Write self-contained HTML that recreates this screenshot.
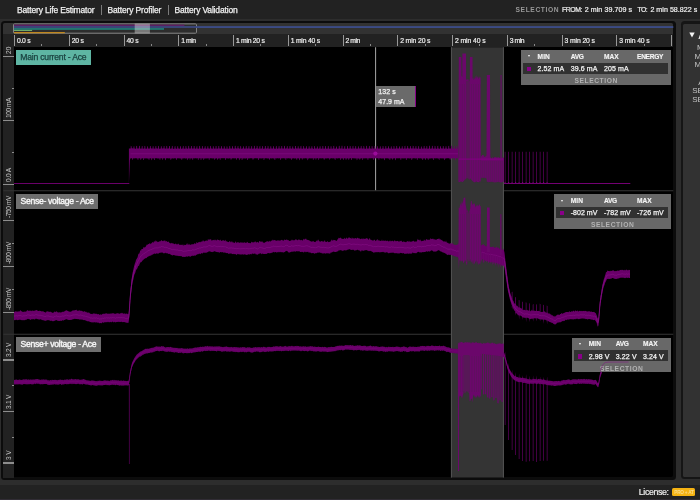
<!DOCTYPE html>
<html><head><meta charset="utf-8"><title>Battery</title>
<style>
*{margin:0;padding:0;box-sizing:border-box}
html,body{width:700px;height:500px;overflow:hidden;background:#2d2d2d;font-family:"Liberation Sans",sans-serif;color:#eee}
body{position:relative}
div{position:absolute}
#all{left:0;top:0;width:700px;height:500px;will-change:transform;opacity:0.9999}
.top{left:0;top:0;width:700px;height:19px;background:#232323}
.tab{top:4.6px;font-size:8.5px;color:#f2f2f2;white-space:nowrap;-webkit-text-stroke:0.25px #f2f2f2}
.sep{top:5px;width:1.3px;height:10px;background:#7c7c7c}
.selt{top:5px;line-height:8px;font-size:7.6px;white-space:nowrap;color:#f0f0f0;-webkit-text-stroke:0.2px}
.panel{left:1px;top:20.9px;width:674.9px;height:458.8px;background:#0d0d0d;border-radius:3.5px}
.ov{left:3.2px;top:23.3px;width:670.1px;height:10.7px;background:#333;border-radius:1.5px 1.5px 0 0}
.ax{left:3.2px;top:34px;width:670.1px;height:13.3px;background:#232323}
.ya{left:3.2px;top:47px;width:10.8px;height:430.5px;background:#232323}
.plot{left:14px;top:47.3px;width:659.3px;height:430.2px;background:#000;overflow:hidden;border-radius:0 0 2px 0}
.tk{top:35px;width:1px;height:11px;background:#999}
.tm{top:44.3px;width:1px;height:1.7px;background:#8a8a8a}
.tl{top:37.2px;font-size:6.8px;color:#eee;white-space:nowrap;-webkit-text-stroke:0.2px #eee}
.yt{height:1.1px;background:#8e8e8e}
.yl{left:4px;width:8px;height:0;font-size:6.6px;color:#c8c8c8;white-space:nowrap;transform-origin:0 0;transform:rotate(-90deg) translate(0px,1.1px);line-height:7px}
.right{left:681px;top:21.4px;width:30px;height:458px;background:#161616;border-radius:3.5px}
.right2{left:683.1px;top:24.2px;width:30px;height:453px;background:#333;border-radius:1.5px}
.bot{left:0;top:485px;width:700px;height:15px;background:#232323}
.lbl{-webkit-text-stroke:0.4px;height:14.6px;font-size:8.6px;line-height:15.9px;padding-left:4.4px;white-space:nowrap}
.sb{height:34.8px;background:rgba(109,109,109,0.96)}
.sh{top:2.7px;font-size:6.6px;font-weight:bold;color:#f4f4f4;white-space:nowrap;-webkit-text-stroke:0.15px}
.sr{left:2.3px;right:2.6px;top:12.9px;height:11.1px;background:#323232}
.sv{top:15.1px;font-size:7px;color:#f4f4f4;white-space:nowrap;-webkit-text-stroke:0.25px #f4f4f4}
.sq{top:16.9px;width:4.2px;height:4.2px;background:#8a008a}
.ss{top:27px;font-size:6.7px;font-weight:bold;color:#b4b4b4;white-space:nowrap}
.car{top:5.4px;width:0;height:0;border-left:1.9px solid transparent;border-right:1.9px solid transparent;border-top:2.4px solid #fafafa}
svg{position:absolute;left:0;top:0}
</style></head><body><div id="all">
<div class="top"></div>
<div class="tab" style="left:17px;letter-spacing:-0.171px">Battery Life Estimator</div>
<div class="sep" style="left:101px"></div>
<div class="tab" style="left:107.5px;letter-spacing:-0.154px">Battery Profiler</div>
<div class="sep" style="left:168px"></div>
<div class="tab" style="left:174.5px;letter-spacing:-0.166px">Battery Validation</div>
<div class="selt" style="left:515.5px;color:#9a9a9a;letter-spacing:0.606px;font-size:6.7px;top:5.8px;-webkit-text-stroke:0;font-weight:bold">SELECTION</div>
<div class="selt" style="left:562.1px;font-size:6.9px;top:5.7px;letter-spacing:-0.466px">FROM:</div>
<div class="selt" style="left:584.7px;font-size:7.1px;top:5.7px;letter-spacing:0.066px">2 min 39.709 s</div>
<div class="selt" style="left:637.6px;font-size:6.9px;top:5.7px;letter-spacing:-0.625px">TO:</div>
<div class="selt" style="left:650.4px;font-size:7.1px;top:5.7px;letter-spacing:0.030px">2 min 58.822 s</div>

<div class="panel"></div>
<div class="ov"></div>
<div class="ax"></div>
<div class="ya"></div>
<div class="plot"></div>

<!-- overview minimap -->
<svg width="700" height="500" viewBox="0 0 700 500">
<rect x="13.5" y="23.9" width="183" height="9.3" rx="1" fill="#2e2e2e" stroke="#868686" stroke-width="1"/>
<rect x="14" y="24.6" width="170.4" height="1.4" fill="#5e1e62"/>
<rect x="14" y="26.1" width="659.3" height="1.9" fill="#3c4c86"/>
<rect x="14" y="26" width="182" height="2" fill="#3b4679"/>
<rect x="14" y="28" width="150" height="1.9" fill="#23766f"/>
<rect x="14" y="29.9" width="18.1" height="1.1" fill="#70ae6a"/>
<rect x="14" y="32" width="50.8" height="1.3" fill="#c0871f"/>
<rect x="134.7" y="23.6" width="15.2" height="9.8" fill="#ffffff" opacity="0.36"/>
</svg>

<!-- time axis -->
<div class="tk" style="left:14px"></div>
<div class="tl" style="left:16.9px;letter-spacing:-0.248px">0.0 s</div>
<div class="tm" style="left:41.38px"></div>
<div class="tk" style="left:68.75px"></div>
<div class="tl" style="left:71.65px;letter-spacing:-0.213px">20 s</div>
<div class="tm" style="left:96.12px"></div>
<div class="tk" style="left:123.5px"></div>
<div class="tl" style="left:126.4px;letter-spacing:-0.213px">40 s</div>
<div class="tm" style="left:150.88px"></div>
<div class="tk" style="left:178.25px"></div>
<div class="tl" style="left:181.15px;letter-spacing:-0.426px">1 min</div>
<div class="tm" style="left:205.62px"></div>
<div class="tk" style="left:233px"></div>
<div class="tl" style="left:235.9px;letter-spacing:-0.262px">1 min 20 s</div>
<div class="tm" style="left:260.38px"></div>
<div class="tk" style="left:287.75px"></div>
<div class="tl" style="left:290.65px;letter-spacing:-0.212px">1 min 40 s</div>
<div class="tm" style="left:315.12px"></div>
<div class="tk" style="left:342.5px"></div>
<div class="tl" style="left:345.4px;letter-spacing:-0.426px">2 min</div>
<div class="tm" style="left:369.88px"></div>
<div class="tk" style="left:397.25px"></div>
<div class="tl" style="left:400.15px;letter-spacing:-0.112px">2 min 20 s</div>
<div class="tm" style="left:424.62px"></div>
<div class="tk" style="left:452px"></div>
<div class="tl" style="left:454.9px;letter-spacing:-0.062px">2 min 40 s</div>
<div class="tm" style="left:479.38px"></div>
<div class="tk" style="left:506.75px"></div>
<div class="tl" style="left:509.65px;letter-spacing:-0.426px">3 min</div>
<div class="tm" style="left:534.12px"></div>
<div class="tk" style="left:561.5px"></div>
<div class="tl" style="left:564.4px;letter-spacing:-0.087px">3 min 20 s</div>
<div class="tm" style="left:588.88px"></div>
<div class="tk" style="left:616.25px"></div>
<div class="tl" style="left:619.15px;letter-spacing:-0.087px">3 min 40 s</div>
<div class="tm" style="left:643.62px"></div>
<div class="tk" style="left:671px"></div>

<!-- y axis -->
<div class="yt" style="top:55.85px;left:3.4px;width:10.2px"></div>
<div class="yt" style="top:87.85px;left:12px;width:2px"></div>
<div class="yt" style="top:119.85px;left:3.4px;width:10.2px"></div>
<div class="yt" style="top:151.85px;left:12px;width:2px"></div>
<div class="yt" style="top:183.75px;left:3.4px;width:10.2px"></div>
<div class="yt" style="top:219.85px;left:3.4px;width:10.2px"></div>
<div class="yt" style="top:242.85px;left:12px;width:2px"></div>
<div class="yt" style="top:265.85px;left:3.4px;width:10.2px"></div>
<div class="yt" style="top:288.95px;left:12px;width:2px"></div>
<div class="yt" style="top:312.05px;left:3.4px;width:10.2px"></div>
<div class="yt" style="top:359.45px;left:3.4px;width:10.2px"></div>
<div class="yt" style="top:385.2px;left:12px;width:2px"></div>
<div class="yt" style="top:410.95px;left:3.4px;width:10.2px"></div>
<div class="yt" style="top:436.7px;left:12px;width:2px"></div>
<div class="yt" style="top:462.45px;left:3.4px;width:10.2px"></div>
<div class="yl" style="top:53.8px;letter-spacing:0.129px">20</div>
<div class="yl" style="top:117.8px;letter-spacing:-0.458px">100 mA</div>
<div class="yl" style="top:181.7px;letter-spacing:-0.209px">0.0 A</div>
<div class="yl" style="top:217.8px;letter-spacing:-0.421px">-750 mV</div>
<div class="yl" style="top:263.8px;letter-spacing:-0.421px">-800 mV</div>
<div class="yl" style="top:310px;letter-spacing:-0.421px">-850 mV</div>
<div class="yl" style="top:357.4px;letter-spacing:-0.242px">3.2 V</div>
<div class="yl" style="top:408.9px;letter-spacing:-0.242px">3.1 V</div>
<div class="yl" style="top:460.4px;letter-spacing:-0.069px">3 V</div>

<!-- plot content -->
<svg width="700" height="500" viewBox="0 0 700 500">
<defs><clipPath id="cp"><rect x="14" y="47.3" width="659.3" height="430.2"/></clipPath></defs>
<rect x="3.4" y="190.1" width="10.6" height="1.2" fill="#323232"/>
<rect x="3.4" y="333.7" width="10.6" height="1.2" fill="#323232"/>
<g clip-path="url(#cp)">
<rect x="14" y="190.1" width="660" height="1.2" fill="#2e2e2e"/>
<rect x="14" y="333.7" width="660" height="1.2" fill="#2e2e2e"/>
<rect x="451" y="47" width="52.9" height="431" fill="#353535"/>
<rect x="450.9" y="47" width="1.1" height="431" fill="#505050"/>
<rect x="502.9" y="47" width="1.1" height="431" fill="#505050"/>
<rect x="375.1" y="47" width="1" height="143.2" fill="#a8a8a8"/>
<g fill="#6a006a">
<path d="M14 183 L129.3 183 L129.3 184.1 L14 184.1Z M128.9 148.5 L129.9 148.4 L130.4 148.5 L130.5 148.48 L131 148.61 L131.5 148.56 L132 148.37 L132.5 148.36 L133 148.38 L133.5 148.52 L134 148.4 L134.5 148.6 L135 148.58 L135.5 148.74 L136 148.69 L136.5 148.41 L137 148.47 L137.5 148.42 L138 148.61 L138.5 148.57 L139 148.37 L139.5 148.62 L140 148.48 L140.5 148.53 L141 148.67 L141.5 148.45 L142 148.56 L142.5 148.64 L143 148.74 L143.5 148.52 L144 148.41 L144.5 148.37 L145 148.66 L145.5 148.7 L146 148.63 L146.5 148.58 L147 148.69 L147.5 148.54 L148 148.37 L148.5 148.61 L149 148.68 L149.5 148.5 L150 148.36 L150.5 148.42 L151 148.37 L151.5 148.4 L152 148.51 L152.5 148.38 L153 148.57 L153.5 148.68 L154 148.46 L154.5 148.49 L155 148.73 L155.5 148.42 L156 148.44 L156.5 148.59 L157 148.35 L157.5 148.5 L158 148.73 L158.5 148.56 L159 148.62 L159.5 148.71 L160 148.7 L160.5 148.51 L161 148.39 L161.5 148.37 L162 148.43 L162.5 148.49 L163 148.35 L163.5 148.39 L164 148.36 L164.5 148.6 L165 148.45 L165.5 148.5 L166 148.69 L166.5 148.54 L167 148.38 L167.5 148.49 L168 148.68 L168.5 148.36 L169 148.56 L169.5 148.57 L170 148.56 L170.5 148.7 L171 148.45 L171.5 148.42 L172 148.56 L172.5 148.48 L173 148.67 L173.5 148.69 L174 148.68 L174.5 148.44 L175 148.49 L175.5 148.36 L176 148.45 L176.5 148.73 L177 148.72 L177.5 148.73 L178 148.44 L178.5 148.43 L179 148.6 L179.5 148.69 L180 148.61 L180.5 148.38 L181 148.71 L181.5 148.65 L182 148.42 L182.5 148.48 L183 148.74 L183.5 148.51 L184 148.64 L184.5 148.4 L185 148.71 L185.5 148.41 L186 148.74 L186.5 148.49 L187 148.4 L187.5 148.74 L188 148.56 L188.5 148.52 L189 148.68 L189.5 148.45 L190 148.45 L190.5 148.45 L191 148.4 L191.5 148.49 L192 148.58 L192.5 148.52 L193 148.55 L193.5 148.56 L194 148.53 L194.5 148.35 L195 148.42 L195.5 148.64 L196 148.48 L196.5 148.57 L197 148.39 L197.5 148.45 L198 148.66 L198.5 148.57 L199 148.71 L199.5 148.6 L200 148.55 L200.5 148.53 L201 148.54 L201.5 148.63 L202 148.73 L202.5 148.57 L203 148.69 L203.5 148.4 L204 148.38 L204.5 148.38 L205 148.66 L205.5 148.41 L206 148.61 L206.5 148.7 L207 148.44 L207.5 148.51 L208 148.75 L208.5 148.41 L209 148.56 L209.5 148.43 L210 148.64 L210.5 148.57 L211 148.36 L211.5 148.6 L212 148.38 L212.5 148.67 L213 148.39 L213.5 148.37 L214 148.46 L214.5 148.52 L215 148.68 L215.5 148.41 L216 148.58 L216.5 148.39 L217 148.63 L217.5 148.38 L218 148.6 L218.5 148.38 L219 148.38 L219.5 148.53 L220 148.57 L220.5 148.46 L221 148.56 L221.5 148.39 L222 148.37 L222.5 148.47 L223 148.65 L223.5 148.55 L224 148.49 L224.5 148.45 L225 148.64 L225.5 148.43 L226 148.72 L226.5 148.68 L227 148.55 L227.5 148.51 L228 148.63 L228.5 148.49 L229 148.63 L229.5 148.51 L230 148.37 L230.5 148.38 L231 148.45 L231.5 148.38 L232 148.7 L232.5 148.46 L233 148.47 L233.5 148.41 L234 148.46 L234.5 148.74 L235 148.45 L235.5 148.47 L236 148.35 L236.5 148.54 L237 148.43 L237.5 148.35 L238 148.39 L238.5 148.37 L239 148.47 L239.5 148.58 L240 148.65 L240.5 148.64 L241 148.51 L241.5 148.74 L242 148.64 L242.5 148.37 L243 148.71 L243.5 148.64 L244 148.41 L244.5 148.55 L245 148.67 L245.5 148.58 L246 148.62 L246.5 148.44 L247 148.4 L247.5 148.39 L248 148.57 L248.5 148.6 L249 148.55 L249.5 148.67 L250 148.55 L250.5 148.61 L251 148.64 L251.5 148.38 L252 148.64 L252.5 148.65 L253 148.55 L253.5 148.54 L254 148.66 L254.5 148.61 L255 148.41 L255.5 148.65 L256 148.58 L256.5 148.37 L257 148.62 L257.5 148.62 L258 148.56 L258.5 148.54 L259 148.71 L259.5 148.74 L260 148.36 L260.5 148.68 L261 148.53 L261.5 148.43 L262 148.43 L262.5 148.41 L263 148.73 L263.5 148.68 L264 148.7 L264.5 148.44 L265 148.54 L265.5 148.35 L266 148.53 L266.5 148.41 L267 148.48 L267.5 148.35 L268 148.69 L268.5 148.72 L269 148.71 L269.5 148.5 L270 148.75 L270.5 148.49 L271 148.46 L271.5 148.39 L272 148.46 L272.5 148.45 L273 148.55 L273.5 148.5 L274 148.7 L274.5 148.6 L275 148.73 L275.5 148.64 L276 148.64 L276.5 148.65 L277 148.46 L277.5 148.72 L278 148.54 L278.5 148.47 L279 148.74 L279.5 148.61 L280 148.57 L280.5 148.42 L281 148.43 L281.5 148.55 L282 148.71 L282.5 148.53 L283 148.43 L283.5 148.49 L284 148.45 L284.5 148.58 L285 148.65 L285.5 148.52 L286 148.5 L286.5 148.37 L287 148.74 L287.5 148.55 L288 148.7 L288.5 148.46 L289 148.51 L289.5 148.73 L290 148.7 L290.5 148.36 L291 148.71 L291.5 148.58 L292 148.51 L292.5 148.68 L293 148.74 L293.5 148.39 L294 148.56 L294.5 148.73 L295 148.61 L295.5 148.53 L296 148.37 L296.5 148.44 L297 148.61 L297.5 148.4 L298 148.6 L298.5 148.39 L299 148.56 L299.5 148.51 L300 148.59 L300.5 148.47 L301 148.73 L301.5 148.7 L302 148.44 L302.5 148.73 L303 148.47 L303.5 148.55 L304 148.52 L304.5 148.62 L305 148.44 L305.5 148.49 L306 148.62 L306.5 148.67 L307 148.55 L307.5 148.74 L308 148.68 L308.5 148.44 L309 148.47 L309.5 148.55 L310 148.44 L310.5 148.62 L311 148.41 L311.5 148.44 L312 148.41 L312.5 148.37 L313 148.71 L313.5 148.64 L314 148.72 L314.5 148.42 L315 148.65 L315.5 148.62 L316 148.5 L316.5 148.42 L317 148.46 L317.5 148.73 L318 148.74 L318.5 148.49 L319 148.68 L319.5 148.37 L320 148.5 L320.5 148.43 L321 148.71 L321.5 148.51 L322 148.66 L322.5 148.36 L323 148.72 L323.5 148.65 L324 148.49 L324.5 148.73 L325 148.45 L325.5 148.48 L326 148.35 L326.5 148.72 L327 148.73 L327.5 148.44 L328 148.73 L328.5 148.5 L329 148.52 L329.5 148.72 L330 148.67 L330.5 148.68 L331 148.59 L331.5 148.48 L332 148.66 L332.5 148.43 L333 148.45 L333.5 148.36 L334 148.48 L334.5 148.7 L335 148.46 L335.5 148.39 L336 148.63 L336.5 148.44 L337 148.6 L337.5 148.65 L338 148.62 L338.5 148.69 L339 148.58 L339.5 148.65 L340 148.45 L340.5 148.41 L341 148.58 L341.5 148.51 L342 148.55 L342.5 148.67 L343 148.75 L343.5 148.54 L344 148.69 L344.5 148.37 L345 148.4 L345.5 148.74 L346 148.72 L346.5 148.7 L347 148.45 L347.5 148.73 L348 148.59 L348.5 148.44 L349 148.41 L349.5 148.45 L350 148.61 L350.5 148.35 L351 148.62 L351.5 148.47 L352 148.67 L352.5 148.38 L353 148.51 L353.5 148.61 L354 148.42 L354.5 148.51 L355 148.47 L355.5 148.47 L356 148.49 L356.5 148.7 L357 148.5 L357.5 148.64 L358 148.35 L358.5 148.52 L359 148.51 L359.5 148.53 L360 148.36 L360.5 148.61 L361 148.39 L361.5 148.5 L362 148.41 L362.5 148.56 L363 148.39 L363.5 148.67 L364 148.43 L364.5 148.73 L365 148.54 L365.5 148.72 L366 148.71 L366.5 148.68 L367 148.66 L367.5 148.51 L368 148.68 L368.5 148.44 L369 148.56 L369.5 148.4 L370 148.64 L370.5 148.37 L371 148.65 L371.5 148.69 L372 148.59 L372.5 148.6 L373 148.52 L373.5 148.52 L374 148.53 L374.5 148.36 L375 148.55 L375.5 148.66 L376 148.53 L376.5 148.54 L377 148.4 L377.5 148.39 L378 148.55 L378.5 148.6 L379 148.64 L379.5 148.55 L380 148.55 L380.5 148.73 L381 148.69 L381.5 148.64 L382 148.43 L382.5 148.55 L383 148.72 L383.5 148.67 L384 148.38 L384.5 148.65 L385 148.71 L385.5 148.68 L386 148.55 L386.5 148.43 L387 148.55 L387.5 148.36 L388 148.41 L388.5 148.62 L389 148.42 L389.5 148.4 L390 148.6 L390.5 148.7 L391 148.58 L391.5 148.39 L392 148.6 L392.5 148.67 L393 148.75 L393.5 148.49 L394 148.53 L394.5 148.65 L395 148.68 L395.5 148.61 L396 148.58 L396.5 148.48 L397 148.36 L397.5 148.6 L398 148.56 L398.5 148.4 L399 148.61 L399.5 148.35 L400 148.39 L400.5 148.44 L401 148.59 L401.5 148.6 L402 148.4 L402.5 148.45 L403 148.39 L403.5 148.7 L404 148.51 L404.5 148.35 L405 148.57 L405.5 148.61 L406 148.72 L406.5 148.45 L407 148.37 L407.5 148.51 L408 148.37 L408.5 148.35 L409 148.73 L409.5 148.43 L410 148.55 L410.5 148.68 L411 148.47 L411.5 148.37 L412 148.66 L412.5 148.35 L413 148.65 L413.5 148.65 L414 148.44 L414.5 148.44 L415 148.48 L415.5 148.63 L416 148.63 L416.5 148.57 L417 148.67 L417.5 148.46 L418 148.74 L418.5 148.7 L419 148.45 L419.5 148.65 L420 148.65 L420.5 148.7 L421 148.45 L421.5 148.6 L422 148.62 L422.5 148.54 L423 148.63 L423.5 148.52 L424 148.58 L424.5 148.43 L425 148.38 L425.5 148.41 L426 148.39 L426.5 148.49 L427 148.36 L427.5 148.63 L428 148.63 L428.5 148.38 L429 148.5 L429.5 148.68 L430 148.38 L430.5 148.72 L431 148.39 L431.5 148.39 L432 148.69 L432.5 148.6 L433 148.6 L433.5 148.39 L434 148.65 L434.5 148.48 L435 148.36 L435.5 148.46 L436 148.5 L436.5 148.74 L437 148.69 L437.5 148.36 L438 148.52 L438.5 148.49 L439 148.57 L439.5 148.69 L440 148.68 L440.5 148.35 L441 148.65 L441.5 148.35 L442 148.55 L442.5 148.42 L443 148.49 L443.5 148.45 L444 148.46 L444.5 148.63 L445 148.39 L445.5 148.38 L446 148.63 L446.5 148.6 L447 148.51 L447.5 148.71 L448 148.71 L448.5 148.43 L449 148.71 L449.5 148.5 L450 148.44 L450.5 148.56 L451 148.65 L451.5 148.49 L452 148.41 L452.5 148.61 L453 148.42 L453.5 148.66 L454 148.4 L454.5 148.7 L455 148.43 L455.5 148.63 L456 148.41 L456.5 148.45 L457 148.56 L457.5 148.48 L458 148.74 L458 158.44 L457.5 158.23 L457 158.21 L456.5 158.28 L456 158.21 L455.5 158.49 L455 158.27 L454.5 158.25 L454 158.33 L453.5 158.38 L453 158.33 L452.5 158.45 L452 158.49 L451.5 158.28 L451 158.41 L450.5 158.45 L450 158.33 L449.5 158.5 L449 158.35 L448.5 158.26 L448 158.16 L447.5 158.18 L447 158.31 L446.5 158.29 L446 158.46 L445.5 158.47 L445 158.4 L444.5 158.35 L444 158.24 L443.5 158.53 L443 158.48 L442.5 158.35 L442 158.47 L441.5 158.35 L441 158.54 L440.5 158.23 L440 158.22 L439.5 158.19 L439 158.24 L438.5 158.43 L438 158.46 L437.5 158.32 L437 158.4 L436.5 158.35 L436 158.28 L435.5 158.44 L435 158.25 L434.5 158.32 L434 158.23 L433.5 158.19 L433 158.26 L432.5 158.48 L432 158.47 L431.5 158.16 L431 158.23 L430.5 158.53 L430 158.5 L429.5 158.51 L429 158.48 L428.5 158.39 L428 158.44 L427.5 158.4 L427 158.17 L426.5 158.21 L426 158.52 L425.5 158.16 L425 158.51 L424.5 158.4 L424 158.27 L423.5 158.44 L423 158.49 L422.5 158.49 L422 158.54 L421.5 158.43 L421 158.51 L420.5 158.28 L420 158.28 L419.5 158.53 L419 158.24 L418.5 158.16 L418 158.24 L417.5 158.41 L417 158.36 L416.5 158.32 L416 158.26 L415.5 158.49 L415 158.45 L414.5 158.17 L414 158.19 L413.5 158.33 L413 158.34 L412.5 158.49 L412 158.44 L411.5 158.51 L411 158.27 L410.5 158.22 L410 158.41 L409.5 158.39 L409 158.21 L408.5 158.37 L408 158.46 L407.5 158.25 L407 158.36 L406.5 158.51 L406 158.44 L405.5 158.33 L405 158.29 L404.5 158.41 L404 158.26 L403.5 158.46 L403 158.41 L402.5 158.21 L402 158.52 L401.5 158.34 L401 158.23 L400.5 158.38 L400 158.29 L399.5 158.29 L399 158.16 L398.5 158.24 L398 158.51 L397.5 158.32 L397 158.21 L396.5 158.15 L396 158.42 L395.5 158.54 L395 158.25 L394.5 158.17 L394 158.22 L393.5 158.46 L393 158.38 L392.5 158.26 L392 158.31 L391.5 158.55 L391 158.5 L390.5 158.37 L390 158.29 L389.5 158.36 L389 158.46 L388.5 158.51 L388 158.52 L387.5 158.22 L387 158.28 L386.5 158.26 L386 158.52 L385.5 158.21 L385 158.26 L384.5 158.21 L384 158.29 L383.5 158.52 L383 158.22 L382.5 158.53 L382 158.54 L381.5 158.48 L381 158.55 L380.5 158.2 L380 158.3 L379.5 158.17 L379 158.46 L378.5 158.18 L378 158.17 L377.5 158.33 L377 158.32 L376.5 158.19 L376 158.22 L375.5 158.46 L375 158.24 L374.5 158.4 L374 158.33 L373.5 158.41 L373 158.38 L372.5 158.27 L372 158.37 L371.5 158.2 L371 158.17 L370.5 158.37 L370 158.51 L369.5 158.25 L369 158.3 L368.5 158.31 L368 158.22 L367.5 158.49 L367 158.24 L366.5 158.21 L366 158.4 L365.5 158.31 L365 158.17 L364.5 158.54 L364 158.2 L363.5 158.54 L363 158.35 L362.5 158.52 L362 158.26 L361.5 158.35 L361 158.4 L360.5 158.51 L360 158.37 L359.5 158.22 L359 158.5 L358.5 158.48 L358 158.51 L357.5 158.23 L357 158.23 L356.5 158.55 L356 158.32 L355.5 158.38 L355 158.53 L354.5 158.26 L354 158.43 L353.5 158.19 L353 158.37 L352.5 158.19 L352 158.37 L351.5 158.23 L351 158.22 L350.5 158.28 L350 158.23 L349.5 158.39 L349 158.23 L348.5 158.3 L348 158.4 L347.5 158.19 L347 158.46 L346.5 158.33 L346 158.3 L345.5 158.38 L345 158.23 L344.5 158.27 L344 158.52 L343.5 158.48 L343 158.19 L342.5 158.41 L342 158.24 L341.5 158.55 L341 158.28 L340.5 158.5 L340 158.25 L339.5 158.23 L339 158.3 L338.5 158.27 L338 158.2 L337.5 158.49 L337 158.42 L336.5 158.32 L336 158.33 L335.5 158.35 L335 158.18 L334.5 158.55 L334 158.54 L333.5 158.37 L333 158.18 L332.5 158.45 L332 158.18 L331.5 158.29 L331 158.28 L330.5 158.46 L330 158.45 L329.5 158.22 L329 158.35 L328.5 158.25 L328 158.53 L327.5 158.34 L327 158.16 L326.5 158.4 L326 158.45 L325.5 158.26 L325 158.44 L324.5 158.4 L324 158.26 L323.5 158.51 L323 158.25 L322.5 158.18 L322 158.17 L321.5 158.47 L321 158.16 L320.5 158.3 L320 158.52 L319.5 158.34 L319 158.32 L318.5 158.48 L318 158.23 L317.5 158.2 L317 158.29 L316.5 158.15 L316 158.28 L315.5 158.3 L315 158.16 L314.5 158.52 L314 158.28 L313.5 158.55 L313 158.5 L312.5 158.31 L312 158.17 L311.5 158.54 L311 158.31 L310.5 158.53 L310 158.32 L309.5 158.22 L309 158.53 L308.5 158.45 L308 158.24 L307.5 158.27 L307 158.23 L306.5 158.45 L306 158.23 L305.5 158.32 L305 158.16 L304.5 158.52 L304 158.25 L303.5 158.42 L303 158.16 L302.5 158.43 L302 158.25 L301.5 158.34 L301 158.41 L300.5 158.33 L300 158.15 L299.5 158.24 L299 158.38 L298.5 158.18 L298 158.43 L297.5 158.25 L297 158.27 L296.5 158.52 L296 158.46 L295.5 158.37 L295 158.46 L294.5 158.44 L294 158.42 L293.5 158.21 L293 158.25 L292.5 158.49 L292 158.52 L291.5 158.15 L291 158.34 L290.5 158.43 L290 158.16 L289.5 158.49 L289 158.33 L288.5 158.25 L288 158.24 L287.5 158.4 L287 158.2 L286.5 158.26 L286 158.29 L285.5 158.36 L285 158.32 L284.5 158.5 L284 158.25 L283.5 158.19 L283 158.19 L282.5 158.21 L282 158.55 L281.5 158.24 L281 158.51 L280.5 158.21 L280 158.31 L279.5 158.27 L279 158.25 L278.5 158.45 L278 158.29 L277.5 158.2 L277 158.17 L276.5 158.41 L276 158.33 L275.5 158.17 L275 158.37 L274.5 158.52 L274 158.47 L273.5 158.53 L273 158.23 L272.5 158.26 L272 158.52 L271.5 158.48 L271 158.17 L270.5 158.32 L270 158.39 L269.5 158.31 L269 158.27 L268.5 158.44 L268 158.2 L267.5 158.45 L267 158.49 L266.5 158.29 L266 158.27 L265.5 158.35 L265 158.16 L264.5 158.51 L264 158.43 L263.5 158.35 L263 158.2 L262.5 158.36 L262 158.38 L261.5 158.53 L261 158.26 L260.5 158.54 L260 158.33 L259.5 158.52 L259 158.23 L258.5 158.2 L258 158.34 L257.5 158.27 L257 158.43 L256.5 158.26 L256 158.15 L255.5 158.27 L255 158.25 L254.5 158.18 L254 158.4 L253.5 158.42 L253 158.3 L252.5 158.54 L252 158.23 L251.5 158.26 L251 158.25 L250.5 158.18 L250 158.36 L249.5 158.45 L249 158.15 L248.5 158.42 L248 158.4 L247.5 158.48 L247 158.29 L246.5 158.16 L246 158.43 L245.5 158.51 L245 158.48 L244.5 158.48 L244 158.36 L243.5 158.47 L243 158.4 L242.5 158.48 L242 158.41 L241.5 158.21 L241 158.28 L240.5 158.5 L240 158.41 L239.5 158.36 L239 158.24 L238.5 158.16 L238 158.31 L237.5 158.26 L237 158.35 L236.5 158.35 L236 158.3 L235.5 158.29 L235 158.54 L234.5 158.37 L234 158.53 L233.5 158.33 L233 158.33 L232.5 158.25 L232 158.42 L231.5 158.49 L231 158.22 L230.5 158.45 L230 158.2 L229.5 158.29 L229 158.4 L228.5 158.48 L228 158.54 L227.5 158.35 L227 158.48 L226.5 158.32 L226 158.19 L225.5 158.34 L225 158.37 L224.5 158.16 L224 158.16 L223.5 158.22 L223 158.27 L222.5 158.27 L222 158.23 L221.5 158.21 L221 158.25 L220.5 158.2 L220 158.52 L219.5 158.29 L219 158.5 L218.5 158.49 L218 158.47 L217.5 158.53 L217 158.32 L216.5 158.17 L216 158.43 L215.5 158.52 L215 158.25 L214.5 158.51 L214 158.2 L213.5 158.46 L213 158.26 L212.5 158.54 L212 158.54 L211.5 158.35 L211 158.28 L210.5 158.33 L210 158.16 L209.5 158.28 L209 158.29 L208.5 158.32 L208 158.48 L207.5 158.34 L207 158.53 L206.5 158.54 L206 158.21 L205.5 158.44 L205 158.51 L204.5 158.42 L204 158.25 L203.5 158.33 L203 158.2 L202.5 158.53 L202 158.25 L201.5 158.5 L201 158.53 L200.5 158.36 L200 158.43 L199.5 158.35 L199 158.33 L198.5 158.45 L198 158.35 L197.5 158.26 L197 158.37 L196.5 158.46 L196 158.36 L195.5 158.37 L195 158.34 L194.5 158.47 L194 158.22 L193.5 158.16 L193 158.36 L192.5 158.52 L192 158.51 L191.5 158.33 L191 158.51 L190.5 158.32 L190 158.38 L189.5 158.27 L189 158.23 L188.5 158.5 L188 158.52 L187.5 158.41 L187 158.16 L186.5 158.37 L186 158.41 L185.5 158.48 L185 158.47 L184.5 158.21 L184 158.22 L183.5 158.53 L183 158.31 L182.5 158.47 L182 158.47 L181.5 158.34 L181 158.46 L180.5 158.41 L180 158.47 L179.5 158.34 L179 158.51 L178.5 158.23 L178 158.24 L177.5 158.3 L177 158.55 L176.5 158.33 L176 158.43 L175.5 158.26 L175 158.16 L174.5 158.36 L174 158.45 L173.5 158.47 L173 158.54 L172.5 158.24 L172 158.46 L171.5 158.46 L171 158.3 L170.5 158.43 L170 158.54 L169.5 158.16 L169 158.21 L168.5 158.53 L168 158.21 L167.5 158.26 L167 158.19 L166.5 158.34 L166 158.55 L165.5 158.2 L165 158.29 L164.5 158.21 L164 158.5 L163.5 158.3 L163 158.21 L162.5 158.17 L162 158.21 L161.5 158.18 L161 158.4 L160.5 158.31 L160 158.47 L159.5 158.46 L159 158.17 L158.5 158.4 L158 158.43 L157.5 158.38 L157 158.32 L156.5 158.26 L156 158.34 L155.5 158.24 L155 158.21 L154.5 158.5 L154 158.32 L153.5 158.5 L153 158.5 L152.5 158.33 L152 158.5 L151.5 158.25 L151 158.46 L150.5 158.2 L150 158.33 L149.5 158.42 L149 158.26 L148.5 158.55 L148 158.43 L147.5 158.42 L147 158.53 L146.5 158.33 L146 158.39 L145.5 158.28 L145 158.38 L144.5 158.42 L144 158.35 L143.5 158.45 L143 158.2 L142.5 158.27 L142 158.5 L141.5 158.38 L141 158.43 L140.5 158.27 L140 158.38 L139.5 158.32 L139 158.23 L138.5 158.18 L138 158.3 L137.5 158.38 L137 158.48 L136.5 158.2 L136 158.27 L135.5 158.17 L135 158.31 L134.5 158.53 L134 158.24 L133.5 158.48 L133 158.19 L132.5 158.32 L132 158.35 L131.5 158.3 L131 158.18 L130.5 158.21 L130.4 158.4 L129.9 160 L128.9 184.1Z M130.65 148.8 L130.8 145.78 L131.6 146.47 L131.75 148.8Z M133 158 L132.9 159.83 L132.2 159.66 L132.1 158Z M133.39 148.8 L133.54 146.49 L134.34 146.34 L134.49 148.8Z M136.12 148.8 L136.28 146.05 L137.08 145.86 L137.23 148.8Z M138.48 158 L138.38 159.66 L137.68 159.98 L137.58 158Z M138.86 148.8 L139.01 145.87 L139.81 146.01 L139.96 148.8Z M141.21 158 L141.11 160.07 L140.41 159.84 L140.31 158Z M141.6 148.8 L141.75 146.25 L142.55 146.1 L142.7 148.8Z M143.95 158 L143.85 159.88 L143.15 159.98 L143.05 158Z M144.34 148.8 L144.49 145.81 L145.29 146.18 L145.44 148.8Z M147.08 148.8 L147.23 146.29 L148.03 146.43 L148.18 148.8Z M149.43 158 L149.33 159.94 L148.63 159.86 L148.53 158Z M149.81 148.8 L149.96 146.3 L150.76 146.04 L150.91 148.8Z M152.16 158 L152.06 160.13 L151.36 160.03 L151.26 158Z M152.55 148.8 L152.7 146.32 L153.5 146.26 L153.65 148.8Z M154.9 158 L154.8 160.01 L154.1 160.11 L154 158Z M155.29 148.8 L155.44 146.21 L156.24 146.06 L156.39 148.8Z M158.03 148.8 L158.18 146.2 L158.98 145.78 L159.13 148.8Z M160.38 158 L160.28 160.07 L159.58 159.85 L159.48 158Z M160.76 148.8 L160.91 146.27 L161.71 146.2 L161.86 148.8Z M163.11 158 L163.01 159.87 L162.31 159.85 L162.21 158Z M163.5 148.8 L163.65 146.2 L164.45 146.03 L164.6 148.8Z M165.85 158 L165.75 160.16 L165.05 160.01 L164.95 158Z M166.24 148.8 L166.39 145.85 L167.19 146.22 L167.34 148.8Z M168.98 148.8 L169.13 146.01 L169.93 146.09 L170.08 148.8Z M171.33 158 L171.23 159.62 L170.53 160.18 L170.43 158Z M171.71 148.8 L171.86 146.13 L172.66 145.83 L172.81 148.8Z M174.45 148.8 L174.6 146.45 L175.4 146.12 L175.55 148.8Z M176.8 158 L176.7 159.94 L176 159.66 L175.9 158Z M177.19 148.8 L177.34 146.13 L178.14 146.27 L178.29 148.8Z M179.93 148.8 L180.08 146.21 L180.88 146.36 L181.03 148.8Z M182.28 158 L182.18 159.85 L181.48 159.91 L181.38 158Z M182.66 148.8 L182.81 146.46 L183.61 145.87 L183.76 148.8Z M185.4 148.8 L185.55 146.01 L186.35 146.31 L186.5 148.8Z M187.75 158 L187.65 160.19 L186.95 159.67 L186.85 158Z M188.14 148.8 L188.29 145.98 L189.09 145.75 L189.24 148.8Z M190.49 158 L190.39 159.61 L189.69 159.84 L189.59 158Z M190.88 148.8 L191.03 146.03 L191.83 146.04 L191.98 148.8Z M193.23 158 L193.13 159.81 L192.43 160.02 L192.33 158Z M193.61 148.8 L193.76 145.91 L194.56 145.88 L194.71 148.8Z M196.35 148.8 L196.5 146.45 L197.3 146.12 L197.45 148.8Z M198.7 158 L198.6 160.08 L197.9 159.73 L197.8 158Z M199.09 148.8 L199.24 146.01 L200.04 145.87 L200.19 148.8Z M201.44 158 L201.34 160.09 L200.64 160.07 L200.54 158Z M201.83 148.8 L201.98 146.21 L202.78 146.08 L202.93 148.8Z M204.18 158 L204.08 159.74 L203.38 159.94 L203.28 158Z M204.56 148.8 L204.71 146.47 L205.51 145.98 L205.66 148.8Z M207.3 148.8 L207.45 146.35 L208.25 146.35 L208.4 148.8Z M209.65 158 L209.55 159.78 L208.85 159.88 L208.75 158Z M210.04 148.8 L210.19 146.14 L210.99 145.8 L211.14 148.8Z M212.78 148.8 L212.93 145.98 L213.73 146.38 L213.88 148.8Z M215.13 158 L215.03 159.83 L214.33 159.76 L214.23 158Z M215.51 148.8 L215.66 145.9 L216.46 146.04 L216.61 148.8Z M217.86 158 L217.76 160.03 L217.06 159.6 L216.96 158Z M218.25 148.8 L218.4 145.92 L219.2 145.9 L219.35 148.8Z M220.6 158 L220.5 159.89 L219.8 159.78 L219.7 158Z M220.99 148.8 L221.14 146.04 L221.94 146.21 L222.09 148.8Z M223.73 148.8 L223.88 145.99 L224.68 146.44 L224.83 148.8Z M226.08 158 L225.98 159.63 L225.28 160.11 L225.18 158Z M226.46 148.8 L226.61 146.36 L227.41 146.42 L227.56 148.8Z M229.2 148.8 L229.35 145.81 L230.15 146.37 L230.3 148.8Z M231.55 158 L231.45 159.61 L230.75 159.98 L230.65 158Z M231.94 148.8 L232.09 145.71 L232.89 146.46 L233.04 148.8Z M234.68 148.8 L234.83 145.9 L235.63 145.78 L235.78 148.8Z M237.03 158 L236.93 159.74 L236.23 159.69 L236.13 158Z M237.41 148.8 L237.56 146.32 L238.36 145.98 L238.51 148.8Z M239.76 158 L239.66 160.08 L238.96 160.14 L238.86 158Z M240.15 148.8 L240.3 145.83 L241.1 146.41 L241.25 148.8Z M242.5 158 L242.4 160.07 L241.7 159.97 L241.6 158Z M242.89 148.8 L243.04 146.23 L243.84 146.42 L243.99 148.8Z M245.63 148.8 L245.78 146.37 L246.58 145.86 L246.73 148.8Z M247.98 158 L247.88 159.92 L247.18 160.02 L247.08 158Z M248.36 148.8 L248.51 146.29 L249.31 146.05 L249.46 148.8Z M251.1 148.8 L251.25 146.14 L252.05 145.91 L252.2 148.8Z M253.45 158 L253.35 159.68 L252.65 159.74 L252.55 158Z M253.84 148.8 L253.99 146.09 L254.79 145.75 L254.94 148.8Z M256.58 148.8 L256.73 145.82 L257.53 146.09 L257.68 148.8Z M258.93 158 L258.83 159.92 L258.13 159.9 L258.03 158Z M259.31 148.8 L259.46 146.39 L260.26 145.71 L260.41 148.8Z M262.05 148.8 L262.2 146.07 L263 146.15 L263.15 148.8Z M264.4 158 L264.3 160.1 L263.6 160 L263.5 158Z M264.79 148.8 L264.94 146 L265.74 146.04 L265.89 148.8Z M267.53 148.8 L267.68 145.76 L268.48 146.21 L268.63 148.8Z M269.88 158 L269.78 159.62 L269.08 159.98 L268.98 158Z M270.26 148.8 L270.41 146.19 L271.21 146.25 L271.36 148.8Z M273 148.8 L273.15 145.96 L273.95 146.49 L274.1 148.8Z M275.35 158 L275.25 159.89 L274.55 159.91 L274.45 158Z M275.74 148.8 L275.89 146.42 L276.69 145.73 L276.84 148.8Z M278.48 148.8 L278.63 146.2 L279.43 145.97 L279.58 148.8Z M280.83 158 L280.73 159.82 L280.03 160.12 L279.93 158Z M281.21 148.8 L281.36 146.08 L282.16 146.12 L282.31 148.8Z M283.95 148.8 L284.1 145.87 L284.9 146.05 L285.05 148.8Z M286.3 158 L286.2 159.93 L285.5 159.85 L285.4 158Z M286.69 148.8 L286.84 146.36 L287.64 145.93 L287.79 148.8Z M289.43 148.8 L289.58 146.02 L290.38 146.1 L290.53 148.8Z M291.78 158 L291.68 159.9 L290.98 159.76 L290.88 158Z M292.16 148.8 L292.31 146.48 L293.11 146.22 L293.26 148.8Z M294.9 148.8 L295.05 145.96 L295.85 145.95 L296 148.8Z M297.25 158 L297.15 159.95 L296.45 159.78 L296.35 158Z M297.64 148.8 L297.79 146.21 L298.59 146.33 L298.74 148.8Z M299.99 158 L299.89 160.13 L299.19 160.03 L299.09 158Z M300.38 148.8 L300.53 146.14 L301.33 145.74 L301.48 148.8Z M302.73 158 L302.63 159.6 L301.93 159.78 L301.83 158Z M303.11 148.8 L303.26 145.85 L304.06 146.44 L304.21 148.8Z M305.85 148.8 L306 146.23 L306.8 146.33 L306.95 148.8Z M308.2 158 L308.1 159.97 L307.4 160.15 L307.3 158Z M308.59 148.8 L308.74 146.19 L309.54 146.2 L309.69 148.8Z M311.33 148.8 L311.48 146.18 L312.28 146.24 L312.43 148.8Z M313.68 158 L313.58 160 L312.88 159.73 L312.78 158Z M314.06 148.8 L314.21 146.07 L315.01 146.31 L315.16 148.8Z M316.41 158 L316.31 159.62 L315.61 159.71 L315.51 158Z M316.8 148.8 L316.95 146.32 L317.75 146.43 L317.9 148.8Z M319.15 158 L319.05 159.82 L318.35 159.99 L318.25 158Z M319.54 148.8 L319.69 146.36 L320.49 146.33 L320.64 148.8Z M322.28 148.8 L322.43 145.91 L323.23 145.94 L323.38 148.8Z M324.63 158 L324.53 159.79 L323.83 159.85 L323.73 158Z M325.01 148.8 L325.16 146.04 L325.96 146.21 L326.11 148.8Z M327.75 148.8 L327.9 145.74 L328.7 146.15 L328.85 148.8Z M330.1 158 L330 159.67 L329.3 159.62 L329.2 158Z M330.49 148.8 L330.64 146.35 L331.44 146.16 L331.59 148.8Z M333.23 148.8 L333.38 146.06 L334.18 145.71 L334.33 148.8Z M335.58 158 L335.48 159.96 L334.78 159.83 L334.68 158Z M335.96 148.8 L336.11 146.45 L336.91 146.48 L337.06 148.8Z M338.7 148.8 L338.85 146.03 L339.65 145.78 L339.8 148.8Z M341.05 158 L340.95 159.73 L340.25 159.99 L340.15 158Z M341.44 148.8 L341.59 145.82 L342.39 145.71 L342.54 148.8Z M343.79 158 L343.69 159.67 L342.99 160.01 L342.89 158Z M344.18 148.8 L344.33 146.47 L345.13 145.77 L345.28 148.8Z M346.53 158 L346.43 159.68 L345.73 160.12 L345.63 158Z M346.91 148.8 L347.06 145.71 L347.86 146.28 L348.01 148.8Z M349.26 158 L349.16 159.71 L348.46 160.04 L348.36 158Z M349.65 148.8 L349.8 145.74 L350.6 146.32 L350.75 148.8Z M352 158 L351.9 160.11 L351.2 160.03 L351.1 158Z M352.39 148.8 L352.54 146.28 L353.34 145.77 L353.49 148.8Z M355.13 148.8 L355.28 146.27 L356.08 146.07 L356.23 148.8Z M357.48 158 L357.38 159.75 L356.68 160.16 L356.58 158Z M357.86 148.8 L358.01 146.47 L358.81 146.27 L358.96 148.8Z M360.21 158 L360.11 159.99 L359.41 159.61 L359.31 158Z M360.6 148.8 L360.75 146.35 L361.55 145.76 L361.7 148.8Z M362.95 158 L362.85 160.04 L362.15 159.79 L362.05 158Z M363.34 148.8 L363.49 145.83 L364.29 146.39 L364.44 148.8Z M366.08 148.8 L366.23 145.75 L367.03 145.99 L367.18 148.8Z M368.43 158 L368.33 159.86 L367.63 159.94 L367.53 158Z M368.81 148.8 L368.96 146.24 L369.76 145.82 L369.91 148.8Z M371.55 148.8 L371.7 145.99 L372.5 146.22 L372.65 148.8Z M373.9 158 L373.8 159.85 L373.1 159.98 L373 158Z M374.29 148.8 L374.44 146.01 L375.24 146.33 L375.39 148.8Z M377.03 148.8 L377.18 146.33 L377.98 146.15 L378.13 148.8Z M379.38 158 L379.28 159.64 L378.58 159.78 L378.48 158Z M379.76 148.8 L379.91 146.48 L380.71 146.26 L380.86 148.8Z M382.5 148.8 L382.65 145.97 L383.45 146.18 L383.6 148.8Z M384.85 158 L384.75 160.1 L384.05 160.19 L383.95 158Z M385.24 148.8 L385.39 146.18 L386.19 145.95 L386.34 148.8Z M387.98 148.8 L388.13 146.41 L388.93 146 L389.08 148.8Z M390.33 158 L390.23 159.96 L389.53 160.01 L389.43 158Z M390.71 148.8 L390.86 146.42 L391.66 146.35 L391.81 148.8Z M393.06 158 L392.96 159.76 L392.26 159.6 L392.16 158Z M393.45 148.8 L393.6 146.04 L394.4 146.17 L394.55 148.8Z M395.8 158 L395.7 160.13 L395 160.09 L394.9 158Z M396.19 148.8 L396.34 145.73 L397.14 146.37 L397.29 148.8Z M398.93 148.8 L399.08 146.39 L399.88 146.16 L400.03 148.8Z M401.28 158 L401.18 160.11 L400.48 159.76 L400.38 158Z M401.66 148.8 L401.81 146.35 L402.61 146.25 L402.76 148.8Z M404.4 148.8 L404.55 145.98 L405.35 145.77 L405.5 148.8Z M406.75 158 L406.65 160.08 L405.95 159.93 L405.85 158Z M407.14 148.8 L407.29 145.86 L408.09 146.3 L408.24 148.8Z M409.88 148.8 L410.03 145.89 L410.83 146.19 L410.98 148.8Z M412.23 158 L412.13 159.88 L411.43 160.01 L411.33 158Z M412.61 148.8 L412.76 145.87 L413.56 145.9 L413.71 148.8Z M415.35 148.8 L415.5 146.33 L416.3 146.07 L416.45 148.8Z M417.7 158 L417.6 160.08 L416.9 159.65 L416.8 158Z M418.09 148.8 L418.24 146.32 L419.04 145.89 L419.19 148.8Z M420.83 148.8 L420.98 146.42 L421.78 146.41 L421.93 148.8Z M423.18 158 L423.08 159.89 L422.38 159.91 L422.28 158Z M423.56 148.8 L423.71 146.17 L424.51 145.85 L424.66 148.8Z M425.91 158 L425.81 160.02 L425.11 159.71 L425.01 158Z M426.3 148.8 L426.45 145.99 L427.25 146.15 L427.4 148.8Z M428.65 158 L428.55 159.91 L427.85 159.84 L427.75 158Z M429.04 148.8 L429.19 145.82 L429.99 145.74 L430.14 148.8Z M431.78 148.8 L431.93 146 L432.73 145.78 L432.88 148.8Z M434.13 158 L434.03 160.07 L433.33 159.98 L433.23 158Z M434.51 148.8 L434.66 145.82 L435.46 146.18 L435.61 148.8Z M437.25 148.8 L437.4 146.12 L438.2 145.72 L438.35 148.8Z M439.6 158 L439.5 160.19 L438.8 159.62 L438.7 158Z M439.99 148.8 L440.14 146.39 L440.94 146.09 L441.09 148.8Z M442.73 148.8 L442.88 145.91 L443.68 146.32 L443.83 148.8Z M445.08 158 L444.98 160.17 L444.28 159.86 L444.18 158Z M445.46 148.8 L445.61 146.31 L446.41 146.36 L446.56 148.8Z M448.2 148.8 L448.35 145.9 L449.15 145.73 L449.3 148.8Z M450.55 158 L450.45 159.71 L449.75 159.72 L449.65 158Z M450.94 148.8 L451.09 145.77 L451.89 145.74 L452.04 148.8Z M453.68 148.8 L453.83 146.4 L454.63 146.07 L454.78 148.8Z M456.03 158 L455.93 160.15 L455.23 160.17 L455.13 158Z M456.41 148.8 L456.56 145.75 L457.36 146.18 L457.51 148.8Z"/>
<path d="M14 311.62 L14.5 311.92 L15 311.68 L15.5 311.15 L16 311.26 L16.5 311.58 L17 311.83 L17.5 311.67 L18 311.06 L18.5 311.45 L19 311.71 L19.5 311.31 L20 310.97 L20.5 309.94 L21 310.87 L21.5 311.52 L22 311.02 L22.5 311.92 L23 311.89 L23.5 311.81 L24 311.73 L24.5 311.45 L25 311.84 L25.5 311.71 L26 311.21 L26.5 311.43 L27 310.31 L27.5 310.32 L28 310.5 L28.5 310.75 L29 310.92 L29.5 310.75 L30 310.14 L30.5 311.11 L31 310.56 L31.5 311.15 L32 310.6 L32.5 310.41 L33 310.92 L33.5 310.69 L34 310.67 L34.5 310.52 L35 311.07 L35.5 310.13 L36 309.88 L36.5 310.32 L37 309.72 L37.5 310.84 L38 311.03 L38.5 310.89 L39 310.86 L39.5 310.69 L40 310.72 L40.5 311.08 L41 310.93 L41.5 311.45 L42 311.19 L42.5 311.52 L43 311.06 L43.5 311.6 L44 311.9 L44.5 312.05 L45 312.19 L45.5 312.47 L46 312.38 L46.5 311.28 L47 311.73 L47.5 310.98 L48 311.84 L48.5 311.39 L49 311.86 L49.5 311.89 L50 311.47 L50.5 311.7 L51 312.32 L51.5 312.03 L52 312.7 L52.5 312.85 L53 312.81 L53.5 312.86 L54 311.72 L54.5 311.82 L55 311.4 L55.5 312.24 L56 311.57 L56.5 311.17 L57 311.78 L57.5 311.91 L58 312.65 L58.5 312.32 L59 312.54 L59.5 312.17 L60 312.23 L60.5 312.57 L61 312.46 L61.5 312.24 L62 312.08 L62.5 311.77 L63 311.81 L63.5 312.04 L64 311.17 L64.5 311.58 L65 310.88 L65.5 310.72 L66 310.26 L66.5 310.6 L67 310.22 L67.5 310.89 L68 310.89 L68.5 311.31 L69 311.83 L69.5 311.43 L70 311.83 L70.5 311.63 L71 311.55 L71.5 311.24 L72 311.2 L72.5 310.36 L73 310.79 L73.5 310.17 L74 310.38 L74.5 310.17 L75 310.16 L75.5 309.89 L76 309.97 L76.5 309.47 L77 310.78 L77.5 310.4 L78 311 L78.5 310.6 L79 310.43 L79.5 310.01 L80 311.16 L80.5 310.48 L81 310.77 L81.5 310.77 L82 310.88 L82.5 311.23 L83 311.53 L83.5 311.74 L84 311.57 L84.5 311.22 L85 311.24 L85.5 312.21 L86 311.43 L86.5 311.92 L87 312.66 L87.5 312.37 L88 313.09 L88.5 312.35 L89 312.79 L89.5 312.87 L90 313.67 L90.5 313.66 L91 313.83 L91.5 313.98 L92 313.94 L92.5 314.13 L93 313.37 L93.5 313.45 L94 313.75 L94.5 313.42 L95 313.55 L95.5 313.94 L96 313.46 L96.5 313.71 L97 314.17 L97.5 314.18 L98 314.07 L98.5 314.08 L99 314.42 L99.5 314.64 L100 314.76 L100.5 314.33 L101 314.49 L101.5 314.8 L102 314.39 L102.5 313.71 L103 314.04 L103.5 313.87 L104 313.46 L104.5 313.73 L105 314.1 L105.5 313.19 L106 313.38 L106.5 313.32 L107 313.6 L107.5 313.7 L108 313.7 L108.5 313.53 L109 313.91 L109.5 313.47 L110 313.64 L110.5 313.56 L111 313.58 L111.5 313.6 L112 313.51 L112.5 313.15 L113 313.16 L113.5 313.34 L114 313.43 L114.5 313.68 L115 313.83 L115.5 313.65 L116 313.75 L116.5 313.53 L117 312.99 L117.5 313.62 L118 313.12 L118.5 313.53 L119 313.65 L119.5 313.65 L120 313.46 L120.5 313.16 L121 313.17 L121.5 313.34 L122 312.57 L122.5 313.21 L123 313.5 L123.5 313.71 L124 313.41 L124.5 313.74 L125 313.11 L125.5 314.06 L126 314.31 L126.5 313.36 L127 313.7 L127.5 313.87 L128 314.57 L128.5 314.04 L129 310.4 L129.5 303.4 L130 295.32 L130.5 288.69 L131 285.24 L131.5 279.88 L132 276.55 L132.5 273.01 L133 271.14 L133.5 268.83 L134 266.43 L134.5 264.71 L135 262.97 L135.5 261.92 L136 259.78 L136.5 259.13 L137 258.33 L137.5 257.55 L138 255.55 L138.5 253.41 L139 254.12 L139.5 252.99 L140 251.47 L140.5 249.7 L141 251.06 L141.5 248.98 L142 248.94 L142.5 249.03 L143 248.63 L143.5 247.32 L144 246.68 L144.5 247.76 L145 247.13 L145.5 247.07 L146 245.96 L146.5 245.36 L147 244.24 L147.5 245.09 L148 244.28 L148.5 244.03 L149 243.9 L149.5 242.96 L150 243.79 L150.5 244.33 L151 242.69 L151.5 243.75 L152 242.51 L152.5 241.99 L153 242.61 L153.5 242.8 L154 241.08 L154.5 241.98 L155 240.39 L155.5 240.48 L156 242.27 L156.5 240.75 L157 240.89 L157.5 242.33 L158 241.87 L158.5 242.05 L159 241.38 L159.5 241.49 L160 240.71 L160.5 241.62 L161 240.46 L161.5 240.09 L162 240.78 L162.5 241.17 L163 240.76 L163.5 241.14 L164 240.1 L164.5 241.13 L165 239.87 L165.5 241.45 L166 241.23 L166.5 241.01 L167 241.51 L167.5 241.93 L168 241.81 L168.5 241.52 L169 241.97 L169.5 243.02 L170 243.03 L170.5 243.29 L171 243.82 L171.5 242.67 L172 242.9 L172.5 243.25 L173 243.71 L173.5 243.22 L174 243.95 L174.5 244.14 L175 243.66 L175.5 243.75 L176 243.62 L176.5 244.5 L177 244.28 L177.5 244.4 L178 243.47 L178.5 243.71 L179 244.45 L179.5 244.99 L180 244.51 L180.5 244.9 L181 244.8 L181.5 244.85 L182 245.09 L182.5 245.26 L183 243.67 L183.5 245.56 L184 245.52 L184.5 244.84 L185 244.78 L185.5 245 L186 245.03 L186.5 243.34 L187 245.31 L187.5 242.73 L188 245.17 L188.5 244.51 L189 243.59 L189.5 244.64 L190 244.39 L190.5 244.64 L191 245.09 L191.5 244.12 L192 244.47 L192.5 244.2 L193 243.92 L193.5 244.33 L194 244.17 L194.5 242.87 L195 243.68 L195.5 243.38 L196 243.88 L196.5 242.02 L197 242.53 L197.5 242.94 L198 242.83 L198.5 242.36 L199 242.03 L199.5 241.76 L200 242.46 L200.5 241.9 L201 241.51 L201.5 241.44 L202 241.63 L202.5 241.29 L203 240.11 L203.5 240.75 L204 241.52 L204.5 241.22 L205 241.36 L205.5 240.87 L206 240.5 L206.5 240.55 L207 240.79 L207.5 241 L208 238.75 L208.5 240.21 L209 238.7 L209.5 239.46 L210 240.23 L210.5 239.06 L211 239.04 L211.5 240.5 L212 240.65 L212.5 240.01 L213 240.22 L213.5 239.8 L214 240.31 L214.5 240.37 L215 239.25 L215.5 240.41 L216 239.38 L216.5 240.73 L217 240.11 L217.5 239.17 L218 240.07 L218.5 239.96 L219 239.79 L219.5 240.76 L220 240.05 L220.5 239.58 L221 240.7 L221.5 241.05 L222 240.54 L222.5 240.5 L223 240.27 L223.5 240.46 L224 240.03 L224.5 241.09 L225 240.81 L225.5 239.57 L226 241.72 L226.5 241.17 L227 240.81 L227.5 241.88 L228 241.89 L228.5 242.12 L229 242.24 L229.5 240.96 L230 240.98 L230.5 242.07 L231 242.48 L231.5 241.73 L232 240.81 L232.5 242.55 L233 242.18 L233.5 242.4 L234 242.84 L234.5 243.07 L235 242.42 L235.5 241.46 L236 241.59 L236.5 243.13 L237 242.61 L237.5 242.26 L238 242.22 L238.5 242.6 L239 242.28 L239.5 243.23 L240 242.35 L240.5 242.57 L241 242.41 L241.5 242.21 L242 243.08 L242.5 242.57 L243 242.16 L243.5 243.08 L244 242.21 L244.5 242.34 L245 242.65 L245.5 243.07 L246 242.21 L246.5 243.11 L247 241.94 L247.5 241.7 L248 242.89 L248.5 242.67 L249 243.16 L249.5 242.74 L250 243.13 L250.5 243.24 L251 242.8 L251.5 241.53 L252 242.13 L252.5 242.43 L253 241.87 L253.5 242.57 L254 242.39 L254.5 241.9 L255 241.29 L255.5 241.44 L256 242.55 L256.5 242.51 L257 241.81 L257.5 241.93 L258 242.19 L258.5 242.89 L259 241.82 L259.5 241.03 L260 241.06 L260.5 241.66 L261 241.67 L261.5 241.6 L262 241.75 L262.5 241.35 L263 242.68 L263.5 242.57 L264 242.76 L264.5 242.86 L265 242.51 L265.5 241.82 L266 242.18 L266.5 241.44 L267 241.07 L267.5 241.26 L268 241.78 L268.5 241.58 L269 241.62 L269.5 241.21 L270 240.57 L270.5 241.66 L271 241.18 L271.5 240.79 L272 240.09 L272.5 239.47 L273 241.16 L273.5 239.63 L274 240.1 L274.5 240.37 L275 239.74 L275.5 240.55 L276 240.8 L276.5 240.92 L277 239.92 L277.5 240.61 L278 240.81 L278.5 240.13 L279 240.42 L279.5 240.64 L280 240.33 L280.5 240.67 L281 240.1 L281.5 239.66 L282 240.18 L282.5 239.67 L283 240.9 L283.5 240.38 L284 240.08 L284.5 239.48 L285 239.8 L285.5 240 L286 239.91 L286.5 239.49 L287 239.55 L287.5 239.99 L288 240.3 L288.5 239.93 L289 240.65 L289.5 240.97 L290 240.65 L290.5 240.81 L291 240.39 L291.5 240.24 L292 239.31 L292.5 240.26 L293 240.2 L293.5 240.15 L294 240.27 L294.5 240.34 L295 239.9 L295.5 239.43 L296 238.69 L296.5 239.87 L297 240.26 L297.5 240.36 L298 239.84 L298.5 239.29 L299 240.27 L299.5 239.19 L300 240.13 L300.5 240.34 L301 239.79 L301.5 239.99 L302 240.34 L302.5 240.4 L303 240.29 L303.5 238.93 L304 238.69 L304.5 240.06 L305 238.58 L305.5 239.35 L306 238.15 L306.5 239.51 L307 239.9 L307.5 239.82 L308 239.97 L308.5 240.17 L309 239.99 L309.5 240.54 L310 241.27 L310.5 241.36 L311 241.03 L311.5 241.91 L312 241.31 L312.5 241.78 L313 240.8 L313.5 241.36 L314 241.8 L314.5 242.11 L315 241.78 L315.5 242.27 L316 241.07 L316.5 241.33 L317 239.67 L317.5 241.57 L318 239.36 L318.5 240.04 L319 240.9 L319.5 241.46 L320 241.28 L320.5 241.81 L321 241.6 L321.5 241 L322 240.92 L322.5 241.56 L323 241.53 L323.5 241.53 L324 241.8 L324.5 240.45 L325 240.26 L325.5 241.99 L326 241.88 L326.5 242.07 L327 241.49 L327.5 241.22 L328 241.45 L328.5 242.19 L329 242.12 L329.5 241.68 L330 241.89 L330.5 241.47 L331 240.54 L331.5 239.34 L332 241.08 L332.5 240.4 L333 239.56 L333.5 240.26 L334 240.14 L334.5 239.91 L335 240.09 L335.5 240.35 L336 240.96 L336.5 240.83 L337 240.4 L337.5 239.18 L338 239.36 L338.5 237.43 L339 238.51 L339.5 237.76 L340 238.33 L340.5 237.56 L341 237.71 L341.5 238.66 L342 238.83 L342.5 238.7 L343 239.24 L343.5 238.65 L344 238.79 L344.5 237.56 L345 238.91 L345.5 238.82 L346 238.24 L346.5 237.22 L347 238.51 L347.5 238.44 L348 238.53 L348.5 237.84 L349 237.07 L349.5 237.63 L350 237.83 L350.5 238.32 L351 238.34 L351.5 239.03 L352 237.08 L352.5 238.5 L353 238.22 L353.5 238.31 L354 238.66 L354.5 238.48 L355 237.93 L355.5 237.9 L356 238.44 L356.5 238.67 L357 238.06 L357.5 237.54 L358 238.29 L358.5 238.09 L359 239.08 L359.5 238.34 L360 238.43 L360.5 239.33 L361 239.03 L361.5 238.69 L362 238.23 L362.5 238.74 L363 239.38 L363.5 238.29 L364 238.83 L364.5 238.81 L365 239.07 L365.5 238.52 L366 238.83 L366.5 238.06 L367 238.16 L367.5 238.84 L368 238.41 L368.5 239.89 L369 239.62 L369.5 237.9 L370 238.62 L370.5 239.78 L371 239.99 L371.5 239.86 L372 240.48 L372.5 240.32 L373 240.78 L373.5 240.43 L374 239.57 L374.5 239.93 L375 239.73 L375.5 241.24 L376 240.66 L376.5 239.59 L377 240.91 L377.5 238.96 L378 239.59 L378.5 240.67 L379 240.36 L379.5 240.83 L380 240.48 L380.5 240.88 L381 241.12 L381.5 240.71 L382 239.37 L382.5 241.01 L383 240.91 L383.5 240.45 L384 240.55 L384.5 240.92 L385 240.44 L385.5 240.71 L386 240.58 L386.5 241.25 L387 240.82 L387.5 240.45 L388 241.33 L388.5 241.54 L389 241.07 L389.5 240.45 L390 241.86 L390.5 240.31 L391 241.38 L391.5 240.97 L392 240.74 L392.5 240.81 L393 241.07 L393.5 241.42 L394 241.17 L394.5 240.33 L395 240.53 L395.5 241.11 L396 241.55 L396.5 241 L397 241.12 L397.5 241.07 L398 240.78 L398.5 241.45 L399 241.69 L399.5 241.46 L400 240.62 L400.5 241.24 L401 241.01 L401.5 240.5 L402 241.63 L402.5 241.78 L403 242.2 L403.5 241.25 L404 241.38 L404.5 241.65 L405 242.13 L405.5 241.72 L406 242.43 L406.5 241.56 L407 241.72 L407.5 241.02 L408 241.3 L408.5 241.91 L409 240.38 L409.5 241.81 L410 241.39 L410.5 241.48 L411 242.32 L411.5 241.58 L412 241.25 L412.5 241.3 L413 241.13 L413.5 240.5 L414 241.55 L414.5 241.87 L415 241.32 L415.5 241.71 L416 241.14 L416.5 241.77 L417 241.07 L417.5 238.59 L418 240.19 L418.5 239.77 L419 239.43 L419.5 240.85 L420 239.49 L420.5 239.76 L421 241.22 L421.5 241.36 L422 240.57 L422.5 240.97 L423 241.01 L423.5 240.89 L424 239.24 L424.5 240.16 L425 240.44 L425.5 240.74 L426 239.17 L426.5 239.23 L427 239.3 L427.5 239.79 L428 240.12 L428.5 239.8 L429 239.57 L429.5 239.69 L430 239.77 L430.5 237.79 L431 239.24 L431.5 238.88 L432 238.74 L432.5 239.02 L433 238.51 L433.5 238.94 L434 239.68 L434.5 239.15 L435 239.3 L435.5 239.67 L436 239.82 L436.5 239.66 L437 238.89 L437.5 239.01 L438 239.06 L438.5 238.99 L439 237.92 L439.5 238.97 L440 239.7 L440.5 238.93 L441 240.02 L441.5 240.2 L442 239.57 L442.5 241.05 L443 240.73 L443.5 241.7 L444 241.29 L444.5 241.57 L445 241.56 L445.5 242.36 L446 240.25 L446.5 242.13 L447 242.47 L447.5 243 L448 242.61 L448.5 243.47 L449 243.38 L449.5 243.5 L450 243.65 L450.5 242.82 L451 243.58 L451.5 243.52 L452 243.68 L452.5 242.14 L453 244.4 L453.5 244.36 L454 244.46 L454.5 245.1 L455 244.65 L455.5 244.67 L456 245.18 L456.5 244.69 L457 244.99 L457.5 244.32 L458 244.43 L458.5 243.24 L459 243.89 L459.5 244.52 L460 244.14 L460.5 243.69 L461 244.8 L461.5 245.03 L462 243.47 L462.5 244.38 L463 243.4 L463.5 245.05 L464 245.14 L464.5 244.51 L465 243.54 L465.5 244.83 L466 244.7 L466.5 244.42 L467 244.87 L467.5 245.01 L468 244.46 L468.5 242.5 L469 242.8 L469.5 243.31 L470 243.5 L470.5 243.95 L471 244.58 L471.5 244.84 L472 244.84 L472.5 244.66 L473 244.6 L473.5 244.33 L474 244.72 L474.5 244.79 L475 244.82 L475.5 245.31 L476 244.57 L476.5 244.52 L477 244.48 L477.5 244.67 L478 244.39 L478.5 244.27 L479 244.15 L479.5 243.62 L480 243.94 L480.5 245.04 L481 244.8 L481.5 245.62 L482 244.76 L482.5 244.67 L483 244.43 L483.5 243.85 L484 245.68 L484.5 244.78 L485 245.74 L485.5 246.21 L486 246.31 L486.5 245.98 L487 246.5 L487.5 246.35 L488 246.52 L488.5 247.1 L489 247.12 L489.5 246.59 L490 246.81 L490.5 246.91 L491 246.92 L491.5 247.04 L492 247.03 L492.5 246.82 L493 247.33 L493.5 245.92 L494 247.41 L494.5 247.66 L495 247.85 L495.5 247.83 L496 246.78 L496.5 246.57 L497 247.66 L497.5 247.17 L498 248.54 L498.5 247.34 L499 247.72 L499.5 248.69 L500 249.54 L500.5 248.53 L501 248.17 L501.5 249.9 L502 250.07 L502.5 250.29 L503 248.42 L503.5 249.36 L504 250.62 L504.5 252.74 L505 257.01 L505.5 261.67 L506 265.65 L506.5 269.67 L507 273.83 L507.5 277.35 L508 281.17 L508.5 284.39 L509 287.82 L509.5 289.57 L510 292.37 L510.5 293.8 L511 295.46 L511.5 296.14 L512 298.37 L512.5 299.16 L513 300.44 L513.5 300.99 L514 302.79 L514.5 303.48 L515 303.7 L515.5 304.19 L516 304.36 L516.5 306.08 L517 305.51 L517.5 306.12 L518 306.66 L518.5 307.57 L519 307.44 L519.5 307.13 L520 307.59 L520.5 308.07 L521 308.35 L521.5 308.29 L522 309.13 L522.5 309.3 L523 309.56 L523.5 310.14 L524 309.52 L524.5 310.03 L525 309.98 L525.5 310.26 L526 310.29 L526.5 309.97 L527 310.23 L527.5 309.72 L528 310.68 L528.5 310.22 L529 310.85 L529.5 310.36 L530 311.32 L530.5 311.13 L531 310.35 L531.5 310.77 L532 309.23 L532.5 310.78 L533 311.06 L533.5 310.54 L534 310.95 L534.5 310.6 L535 310.75 L535.5 311.05 L536 310.86 L536.5 310.95 L537 311.03 L537.5 310.99 L538 311.1 L538.5 310.82 L539 311.2 L539.5 311.06 L540 311.44 L540.5 311.94 L541 311.68 L541.5 312.12 L542 311.96 L542.5 311.76 L543 312.12 L543.5 311.72 L544 311.82 L544.5 311.24 L545 311.59 L545.5 312.2 L546 312.67 L546.5 312.75 L547 312.6 L547.5 312.86 L548 313.45 L548.5 313.34 L549 313.63 L549.5 313.53 L550 313.54 L550.5 314.73 L551 314 L551.5 315.13 L552 315.37 L552.5 315.34 L553 315.84 L553.5 316.08 L554 316.85 L554.5 316.51 L555 315.42 L555.5 316.48 L556 316.19 L556.5 315.05 L557 315.27 L557.5 314.83 L558 314.3 L558.5 314.7 L559 315.01 L559.5 315 L560 313.88 L560.5 313.92 L561 314.09 L561.5 313.07 L562 313.23 L562.5 313.66 L563 313.68 L563.5 313 L564 312.95 L564.5 312.98 L565 312 L565.5 312.52 L566 312.08 L566.5 312.06 L567 311.94 L567.5 312.09 L568 312.03 L568.5 312.13 L569 311.53 L569.5 311.17 L570 311.84 L570.5 311.88 L571 311.79 L571.5 311.08 L572 311.69 L572.5 311.58 L573 310.83 L573.5 311.04 L574 310.44 L574.5 311.75 L575 311.16 L575.5 310.36 L576 310.83 L576.5 311.2 L577 310.88 L577.5 310.34 L578 311.48 L578.5 311.48 L579 310.83 L579.5 311 L580 310.8 L580.5 311.14 L581 310.73 L581.5 311.2 L582 310.8 L582.5 311.26 L583 310.99 L583.5 311.01 L584 310.72 L584.5 311.02 L585 311.3 L585.5 310.63 L586 311.1 L586.5 311.14 L587 311.62 L587.5 311.58 L588 311.25 L588.5 311.26 L589 311.45 L589.5 311.02 L590 311.67 L590.5 311.63 L591 311.51 L591.5 311.49 L592 312.07 L592.5 312.01 L593 311.93 L593.5 312.1 L594 311.84 L594.5 312.14 L595 312.7 L595.5 312.89 L596 313.42 L596.5 315.11 L597 315.88 L597.5 317.98 L598 318.56 L598.5 317.32 L599 312.2 L599.5 306.41 L600 300 L600.5 296.2 L601 293.71 L601.5 290.53 L602 287.24 L602.5 284.61 L603 282.65 L603.5 280.15 L604 278.71 L604.5 277.47 L605 275.59 L605.5 274.18 L606 272.11 L606.5 272.31 L607 271.55 L607.5 270.24 L608 270.92 L608.5 271.11 L609 270.99 L609.5 270.93 L610 271.52 L610.5 270.71 L611 270.64 L611.5 270.95 L612 270.69 L612.5 270.4 L613 270.26 L613.5 270.15 L614 270.98 L614.5 271.35 L615 270.9 L615.5 271.34 L616 270.83 L616.5 271.32 L617 270.81 L617.5 270.7 L618 270.21 L618.5 270.86 L619 271 L619.5 270.31 L620 269.89 L620.5 269.89 L621 269.73 L621.5 270.18 L622 269.39 L622.5 270.08 L623 270.02 L623.5 270.17 L624 270.25 L624.5 270.24 L625 269.48 L625.5 270.55 L626 270.01 L626.5 269.62 L627 269.8 L627.5 270.35 L628 270.56 L628.5 270.11 L629 269.82 L629.5 269.92 L630 270.11 L630 277.98 L629.5 278.02 L629 277.93 L628.5 277.57 L628 277.97 L627.5 278.03 L627 277.58 L626.5 277.82 L626 277.63 L625.5 278.26 L625 277.75 L624.5 278.15 L624 277.72 L623.5 277.81 L623 277.74 L622.5 277.47 L622 277.97 L621.5 277.58 L621 277.65 L620.5 277.77 L620 277.79 L619.5 278.09 L619 278.56 L618.5 278.27 L618 278.87 L617.5 278.44 L617 278.68 L616.5 278.99 L616 278.95 L615.5 278.96 L615 278.66 L614.5 278.84 L614 278.69 L613.5 278.13 L613 277.9 L612.5 277.98 L612 278.11 L611.5 278.75 L611 278.45 L610.5 278.7 L610 278.9 L609.5 278.99 L609 278.67 L608.5 279.11 L608 278.82 L607.5 279.05 L607 279.11 L606.5 279.99 L606 281.13 L605.5 282.06 L605 283.37 L604.5 284.92 L604 286.02 L603.5 287.37 L603 289.88 L602.5 292.22 L602 294.81 L601.5 297.78 L601 301.35 L600.5 304.61 L600 307.35 L599.5 313.75 L599 319.94 L598.5 325.26 L598 326.42 L597.5 326.18 L597 324.1 L596.5 322.4 L596 321.38 L595.5 320.63 L595 320.32 L594.5 319.87 L594 319.93 L593.5 320.24 L593 319.83 L592.5 319.83 L592 319.54 L591.5 319.74 L591 319.32 L590.5 319.55 L590 318.96 L589.5 319 L589 319.25 L588.5 318.97 L588 319.21 L587.5 319.59 L587 319.18 L586.5 318.9 L586 319.07 L585.5 319.34 L585 318.61 L584.5 318.92 L584 318.34 L583.5 318.63 L583 318.54 L582.5 318.52 L582 318.54 L581.5 318.57 L581 318.66 L580.5 318.7 L580 318.86 L579.5 319.04 L579 319.29 L578.5 318.93 L578 319.25 L577.5 318.76 L577 318.62 L576.5 318.95 L576 318.76 L575.5 319.38 L575 318.85 L574.5 319.21 L574 319.29 L573.5 319.41 L573 319.32 L572.5 319.26 L572 319.53 L571.5 319.27 L571 319.12 L570.5 319.22 L570 319.3 L569.5 319.31 L569 319.8 L568.5 319.46 L568 319.47 L567.5 319.44 L567 319.65 L566.5 320.25 L566 319.84 L565.5 319.85 L565 320.46 L564.5 320.88 L564 320.76 L563.5 320.93 L563 321.3 L562.5 320.94 L562 321.29 L561.5 321.81 L561 322 L560.5 322.45 L560 321.91 L559.5 322.31 L559 322.66 L558.5 322.29 L558 322.84 L557.5 322.53 L557 322.95 L556.5 323.61 L556 323.97 L555.5 324.28 L555 324.64 L554.5 324.3 L554 324.1 L553.5 324.02 L553 323.33 L552.5 323.04 L552 322.71 L551.5 322.82 L551 322.52 L550.5 322.19 L550 322.12 L549.5 321.96 L549 321.48 L548.5 321.23 L548 320.92 L547.5 320.81 L547 320.62 L546.5 320.61 L546 320.14 L545.5 320.04 L545 319.48 L544.5 319.69 L544 319.76 L543.5 319.72 L543 319.42 L542.5 319.58 L542 319.68 L541.5 319.5 L541 319.22 L540.5 319.22 L540 319.14 L539.5 319.28 L539 318.82 L538.5 319.01 L538 318.44 L537.5 318.26 L537 318.46 L536.5 318.6 L536 318.29 L535.5 318.6 L535 318.29 L534.5 318.32 L534 318.43 L533.5 318.44 L533 318.51 L532.5 318.68 L532 318.63 L531.5 318.8 L531 318.7 L530.5 318.88 L530 319.14 L529.5 318.5 L529 318.39 L528.5 318.22 L528 318.08 L527.5 317.82 L527 317.74 L526.5 317.64 L526 317.65 L525.5 317.83 L525 317.96 L524.5 317.81 L524 317.62 L523.5 317.67 L523 317.22 L522.5 316.89 L522 316.64 L521.5 316.18 L521 315.85 L520.5 315.6 L520 315.7 L519.5 315.54 L519 315.15 L518.5 315.01 L518 315.47 L517.5 314.5 L517 313.86 L516.5 313.48 L516 313.05 L515.5 311.95 L515 311.36 L514.5 310.85 L514 310.11 L513.5 308.95 L513 307.91 L512.5 306.74 L512 305.85 L511.5 304.49 L511 302.67 L510.5 301.24 L510 299.79 L509.5 297.85 L509 295.43 L508.5 293 L508 291.18 L507.5 288.37 L507 284.95 L506.5 281.23 L506 278.07 L505.5 274.57 L505 270.9 L504.5 267.88 L504 265.68 L503.5 265.85 L503 265.29 L502.5 265.4 L502 265.9 L501.5 264.89 L501 264.73 L500.5 264.26 L500 264.44 L499.5 263.93 L499 263.94 L498.5 263.61 L498 263.61 L497.5 263.54 L497 263.15 L496.5 263 L496 262.68 L495.5 262.45 L495 262.53 L494.5 262.76 L494 262.47 L493.5 262.29 L493 262.29 L492.5 261.96 L492 261.72 L491.5 262.2 L491 261.67 L490.5 262.08 L490 262.16 L489.5 261.67 L489 261.6 L488.5 261.74 L488 261.42 L487.5 261.1 L487 260.62 L486.5 261.37 L486 261 L485.5 260.78 L485 259.99 L484.5 259.83 L484 260.18 L483.5 259.6 L483 259.42 L482.5 259.27 L482 259.26 L481.5 259.78 L481 259.45 L480.5 258.99 L480 258.9 L479.5 258.4 L479 258.49 L478.5 258.67 L478 258.53 L477.5 258.9 L477 259.04 L476.5 259.37 L476 258.99 L475.5 259.19 L475 259.36 L474.5 258.44 L474 258.35 L473.5 258.4 L473 258.44 L472.5 258.28 L472 258.38 L471.5 258.44 L471 258.25 L470.5 258.1 L470 258.08 L469.5 257.31 L469 257.92 L468.5 257.77 L468 258.07 L467.5 258.63 L467 258.46 L466.5 258.88 L466 259.22 L465.5 258.73 L465 258.13 L464.5 258.12 L464 258.77 L463.5 257.87 L463 257.96 L462.5 257.68 L462 258.91 L461.5 258.03 L461 258.07 L460.5 258.18 L460 258.16 L459.5 258.48 L459 257.78 L458.5 257.99 L458 257.46 L457.5 256.77 L457 256.61 L456.5 257.35 L456 256.44 L455.5 256.48 L455 256.15 L454.5 256.1 L454 256.32 L453.5 255.74 L453 255.33 L452.5 255.73 L452 255.03 L451.5 255 L451 255.03 L450.5 254.71 L450 254.84 L449.5 254.85 L449 255.36 L448.5 254.56 L448 254.74 L447.5 255.21 L447 254.42 L446.5 254.42 L446 253.44 L445.5 253.81 L445 253.14 L444.5 252.92 L444 252.87 L443.5 252.52 L443 252.72 L442.5 252.22 L442 251.79 L441.5 251.57 L441 251.92 L440.5 251.34 L440 250.76 L439.5 250.38 L439 250.63 L438.5 250 L438 250.22 L437.5 250.79 L437 251.07 L436.5 251.25 L436 251.71 L435.5 251.72 L435 251 L434.5 252 L434 251.23 L433.5 251.64 L433 251.26 L432.5 250.57 L432 250.86 L431.5 250.29 L431 250.58 L430.5 251.11 L430 251.5 L429.5 251.59 L429 251.54 L428.5 251.14 L428 251.18 L427.5 251.89 L427 251.23 L426.5 251.24 L426 251.68 L425.5 251.8 L425 252.09 L424.5 252 L424 251.95 L423.5 252.31 L423 252.05 L422.5 252.34 L422 252.1 L421.5 252.46 L421 252.63 L420.5 252.28 L420 252.26 L419.5 252.57 L419 252.09 L418.5 251.75 L418 252 L417.5 252.26 L417 252.41 L416.5 253.23 L416 253.19 L415.5 253.16 L415 253.09 L414.5 253.32 L414 252.89 L413.5 253.2 L413 252.59 L412.5 252.52 L412 253.63 L411.5 253.56 L411 253.6 L410.5 253.6 L410 253.91 L409.5 253.44 L409 253.23 L408.5 253.64 L408 254.15 L407.5 253.2 L407 253.44 L406.5 253.77 L406 253.66 L405.5 253.83 L405 253.63 L404.5 253.98 L404 253.13 L403.5 253.09 L403 253.42 L402.5 253.28 L402 253.22 L401.5 252.97 L401 253.02 L400.5 252.77 L400 253.15 L399.5 253.27 L399 253.81 L398.5 253.2 L398 253.56 L397.5 253.46 L397 253.05 L396.5 253.51 L396 252.69 L395.5 253.14 L395 253.46 L394.5 253 L394 253.28 L393.5 252.58 L393 252.87 L392.5 252.73 L392 252.6 L391.5 252.75 L391 253.05 L390.5 252.86 L390 252.8 L389.5 253.16 L389 252.86 L388.5 253.45 L388 252.94 L387.5 252.61 L387 252.18 L386.5 252.29 L386 252.5 L385.5 252.87 L385 252.37 L384.5 252.55 L384 252.53 L383.5 252.08 L383 251.84 L382.5 251.94 L382 252.14 L381.5 252.11 L381 252.18 L380.5 252.11 L380 252.79 L379.5 252.24 L379 251.96 L378.5 252.27 L378 251.94 L377.5 252.29 L377 252.27 L376.5 251.92 L376 252.41 L375.5 252.28 L375 252.05 L374.5 252.84 L374 252.2 L373.5 252.94 L373 251.9 L372.5 251.85 L372 251.92 L371.5 251.3 L371 251.09 L370.5 250.83 L370 251.19 L369.5 250.71 L369 251.26 L368.5 250.95 L368 250.41 L367.5 250.68 L367 250.29 L366.5 250.27 L366 249.85 L365.5 250.16 L365 250.4 L364.5 250.34 L364 250.68 L363.5 250.7 L363 250.65 L362.5 250.48 L362 250.59 L361.5 250.34 L361 251.89 L360.5 251.23 L360 250.58 L359.5 250.55 L359 250.47 L358.5 250.19 L358 249.68 L357.5 249.65 L357 249.99 L356.5 250.08 L356 250.66 L355.5 250.16 L355 250.23 L354.5 250.63 L354 250.23 L353.5 249.86 L353 249.7 L352.5 249.75 L352 250.11 L351.5 250.09 L351 249.7 L350.5 249.77 L350 249.38 L349.5 249.26 L349 249 L348.5 249.53 L348 249.9 L347.5 249.59 L347 250.27 L346.5 250.33 L346 250.22 L345.5 250.37 L345 250.87 L344.5 250.02 L344 250.17 L343.5 250.83 L343 250.4 L342.5 250.73 L342 251.29 L341.5 250.32 L341 249.91 L340.5 250.14 L340 250.32 L339.5 250.4 L339 250.29 L338.5 250.59 L338 251.48 L337.5 251.17 L337 251.55 L336.5 251.69 L336 252.12 L335.5 251.99 L335 251.91 L334.5 251.96 L334 251.56 L333.5 251.5 L333 252.18 L332.5 251.68 L332 252.6 L331.5 252.47 L331 252.48 L330.5 252.87 L330 254.02 L329.5 253.5 L329 253.17 L328.5 253.61 L328 253.26 L327.5 253.4 L327 253.07 L326.5 253.62 L326 253.35 L325.5 253.46 L325 254.08 L324.5 253.11 L324 253.26 L323.5 253.49 L323 253.6 L322.5 253.62 L322 253.28 L321.5 253.33 L321 252.58 L320.5 253.07 L320 252.78 L319.5 252.34 L319 252.73 L318.5 252.46 L318 252.63 L317.5 252.56 L317 252.95 L316.5 253.37 L316 253.22 L315.5 253.31 L315 253.37 L314.5 254.11 L314 253.33 L313.5 253.2 L313 252.71 L312.5 253.35 L312 252.99 L311.5 253.25 L311 253.36 L310.5 252.56 L310 252.49 L309.5 252.29 L309 252.91 L308.5 252.17 L308 251.57 L307.5 252.05 L307 252.05 L306.5 252.18 L306 251.38 L305.5 252.38 L305 251.5 L304.5 251.74 L304 252.42 L303.5 252.58 L303 251.96 L302.5 251.73 L302 252.16 L301.5 251.84 L301 251.95 L300.5 251.95 L300 251.95 L299.5 251.25 L299 251.36 L298.5 251.43 L298 250.9 L297.5 251.33 L297 251.81 L296.5 250.99 L296 251.34 L295.5 251.85 L295 251.85 L294.5 251.33 L294 251.52 L293.5 251.62 L293 251.71 L292.5 251.72 L292 251.58 L291.5 251.71 L291 252 L290.5 252 L290 252.4 L289.5 252.3 L289 253.09 L288.5 252.32 L288 251.82 L287.5 251.35 L287 251.24 L286.5 250.78 L286 251.26 L285.5 251.18 L285 251.64 L284.5 252.28 L284 251.96 L283.5 252.4 L283 252.68 L282.5 252.04 L282 252.19 L281.5 252.07 L281 252.46 L280.5 252.04 L280 251.84 L279.5 252.4 L279 251.86 L278.5 252.05 L278 252.79 L277.5 252.11 L277 252.15 L276.5 252.83 L276 251.95 L275.5 251.94 L275 252.36 L274.5 252.32 L274 252.45 L273.5 251.81 L273 252.26 L272.5 252.56 L272 252.86 L271.5 252.75 L271 253.34 L270.5 253.06 L270 253.15 L269.5 253.46 L269 252.78 L268.5 253.26 L268 253.01 L267.5 253.37 L267 253.82 L266.5 254.02 L266 253.68 L265.5 253.92 L265 253.91 L264.5 254 L264 254.04 L263.5 254.11 L263 253.67 L262.5 253.81 L262 253.48 L261.5 254.4 L261 253.52 L260.5 253.56 L260 253.06 L259.5 254.04 L259 253.54 L258.5 254.12 L258 254.45 L257.5 254.64 L257 254.59 L256.5 254.13 L256 254.69 L255.5 253.92 L255 253.33 L254.5 253.65 L254 253.87 L253.5 253.97 L253 253.62 L252.5 253.63 L252 253.42 L251.5 254.49 L251 254.19 L250.5 254.09 L250 254.2 L249.5 254.58 L249 254.49 L248.5 254.31 L248 254.35 L247.5 254.87 L247 254.88 L246.5 254.66 L246 255.07 L245.5 254.41 L245 254.31 L244.5 254.36 L244 254.73 L243.5 254.58 L243 254.4 L242.5 254.17 L242 254.56 L241.5 254.24 L241 255.09 L240.5 254.38 L240 253.91 L239.5 254.51 L239 254.39 L238.5 254.3 L238 253.67 L237.5 253.9 L237 254.7 L236.5 255.21 L236 254.01 L235.5 254.18 L235 254.36 L234.5 253.99 L234 254.28 L233.5 253.67 L233 254.13 L232.5 254.02 L232 254.1 L231.5 253.54 L231 253.56 L230.5 253.58 L230 253.47 L229.5 253.56 L229 253.98 L228.5 253.7 L228 253.58 L227.5 253.06 L227 252.96 L226.5 253.33 L226 252.71 L225.5 252.67 L225 252.77 L224.5 252.51 L224 252.5 L223.5 252.68 L223 252.31 L222.5 252.12 L222 252.43 L221.5 252.2 L221 251.99 L220.5 251.91 L220 252.16 L219.5 252.92 L219 252.06 L218.5 252.43 L218 252.1 L217.5 252.27 L217 252 L216.5 252.05 L216 251.73 L215.5 251.64 L215 251.36 L214.5 251.28 L214 251.4 L213.5 251.68 L213 251.74 L212.5 252.19 L212 251.82 L211.5 251.97 L211 251.97 L210.5 251.56 L210 251.53 L209.5 251.46 L209 250.98 L208.5 251.7 L208 252.02 L207.5 252.19 L207 252.15 L206.5 252.64 L206 252.78 L205.5 252.56 L205 253.22 L204.5 252.58 L204 252.66 L203.5 252.4 L203 253.06 L202.5 253.41 L202 253.41 L201.5 253.1 L201 253.4 L200.5 253.99 L200 254.2 L199.5 253.53 L199 253.73 L198.5 254.03 L198 254.47 L197.5 254.28 L197 254.32 L196.5 255.08 L196 254.91 L195.5 255.69 L195 255.63 L194.5 255.41 L194 255.54 L193.5 256 L193 255.72 L192.5 255.79 L192 255.77 L191.5 256.11 L191 256.29 L190.5 256.72 L190 256.8 L189.5 256.43 L189 255.99 L188.5 255.96 L188 256.96 L187.5 256.6 L187 256.5 L186.5 256.5 L186 256.58 L185.5 257.04 L185 256.76 L184.5 256.95 L184 257.08 L183.5 256.86 L183 257.11 L182.5 256.66 L182 257.02 L181.5 256.11 L181 256 L180.5 256.37 L180 255.93 L179.5 256.12 L179 256.19 L178.5 255.81 L178 256.14 L177.5 255.44 L177 255.92 L176.5 255.41 L176 255.72 L175.5 255.6 L175 255.4 L174.5 255.31 L174 255 L173.5 255.04 L173 255.18 L172.5 255.43 L172 255.25 L171.5 254.96 L171 254.71 L170.5 254.58 L170 253.94 L169.5 253.85 L169 254.12 L168.5 253.87 L168 253.92 L167.5 253.36 L167 253.09 L166.5 253.24 L166 253.55 L165.5 252.73 L165 252.77 L164.5 253.14 L164 253.45 L163.5 253.14 L163 252.95 L162.5 252.54 L162 252.39 L161.5 252.72 L161 252.29 L160.5 252.87 L160 253.05 L159.5 252.77 L159 252.97 L158.5 253.73 L158 253.59 L157.5 253.83 L157 253.25 L156.5 253.6 L156 253.5 L155.5 253.96 L155 253.71 L154.5 253.48 L154 253.66 L153.5 254.03 L153 254.56 L152.5 254.76 L152 254.5 L151.5 255.14 L151 255.43 L150.5 255.63 L150 255.48 L149.5 256.02 L149 256.33 L148.5 256.16 L148 256.89 L147.5 256.72 L147 257.5 L146.5 257.93 L146 258.33 L145.5 258.11 L145 258.83 L144.5 258.79 L144 258.96 L143.5 259.64 L143 260.16 L142.5 260.45 L142 261.26 L141.5 261.91 L141 262.28 L140.5 262.33 L140 263.3 L139.5 264.15 L139 266.11 L138.5 265.77 L138 266.39 L137.5 267.91 L137 268.96 L136.5 269.45 L136 270 L135.5 272.11 L135 273.39 L134.5 274.29 L134 276.1 L133.5 278.63 L133 280.79 L132.5 282.41 L132 285.72 L131.5 290.35 L131 294.18 L130.5 298.75 L130 304.44 L129.5 312.25 L129 319.47 L128.5 322.81 L128 322.96 L127.5 322.76 L127 322.85 L126.5 322.87 L126 322.52 L125.5 322.58 L125 322.17 L124.5 321.95 L124 322.18 L123.5 321.92 L123 321.89 L122.5 322.33 L122 322.08 L121.5 321.87 L121 321.63 L120.5 321.94 L120 321.88 L119.5 321.69 L119 322.24 L118.5 321.82 L118 321.63 L117.5 321.99 L117 321.94 L116.5 321.96 L116 322.22 L115.5 322.45 L115 321.91 L114.5 321.86 L114 322.45 L113.5 322.19 L113 321.83 L112.5 321.49 L112 321.94 L111.5 322.18 L111 322.24 L110.5 322.08 L110 321.87 L109.5 322.26 L109 322.38 L108.5 321.94 L108 321.77 L107.5 322.03 L107 322.49 L106.5 321.92 L106 322.18 L105.5 322.26 L105 322.25 L104.5 322.16 L104 322.49 L103.5 322.92 L103 322.31 L102.5 322.22 L102 322.9 L101.5 323.22 L101 323.28 L100.5 322.95 L100 323.04 L99.5 323.48 L99 322.66 L98.5 322.73 L98 322.5 L97.5 322.87 L97 322.52 L96.5 322.28 L96 322.44 L95.5 322.54 L95 322.19 L94.5 322.22 L94 322.26 L93.5 322.41 L93 322.18 L92.5 322.62 L92 322.28 L91.5 322.49 L91 321.97 L90.5 322.06 L90 322.26 L89.5 321.56 L89 321.48 L88.5 321.28 L88 321.19 L87.5 321.27 L87 321.18 L86.5 320.77 L86 320.85 L85.5 320.51 L85 320.03 L84.5 320.23 L84 320.05 L83.5 320.2 L83 319.76 L82.5 319.64 L82 319.51 L81.5 319.71 L81 319.35 L80.5 319.38 L80 319.72 L79.5 319.6 L79 319.17 L78.5 319.13 L78 319.11 L77.5 319.32 L77 319.04 L76.5 318.98 L76 318.91 L75.5 319 L75 318.82 L74.5 319.07 L74 318.8 L73.5 319.32 L73 319.3 L72.5 319.35 L72 320.08 L71.5 319.67 L71 319.84 L70.5 320.09 L70 320.03 L69.5 319.97 L69 320.02 L68.5 319.96 L68 319.79 L67.5 319.87 L67 319.22 L66.5 319.35 L66 319.29 L65.5 319.48 L65 319.85 L64.5 320.03 L64 320.11 L63.5 320.68 L63 320.22 L62.5 320.14 L62 320.39 L61.5 321.01 L61 320.64 L60.5 320.79 L60 320.75 L59.5 321.12 L59 320.91 L58.5 320.68 L58 320.89 L57.5 320.53 L57 320.8 L56.5 320.01 L56 319.95 L55.5 320.4 L55 320.42 L54.5 320.99 L54 320.81 L53.5 321.13 L53 321.28 L52.5 321.13 L52 320.8 L51.5 320.86 L51 320.78 L50.5 321.05 L50 320.56 L49.5 320.49 L49 320.2 L48.5 320.11 L48 320.52 L47.5 320.06 L47 320.16 L46.5 320.15 L46 321.25 L45.5 320.77 L45 320.56 L44.5 320.75 L44 320.45 L43.5 320.23 L43 320.32 L42.5 319.95 L42 320.2 L41.5 319.83 L41 319.34 L40.5 319.33 L40 319.51 L39.5 319.49 L39 319.5 L38.5 319.54 L38 319.1 L37.5 319.21 L37 319.08 L36.5 318.75 L36 318.67 L35.5 318.85 L35 319.58 L34.5 319.54 L34 319.37 L33.5 319.11 L33 319.46 L32.5 319.16 L32 319 L31.5 319.37 L31 319.77 L30.5 319.95 L30 319.5 L29.5 319.21 L29 319.31 L28.5 318.97 L28 318.8 L27.5 319 L27 319.37 L26.5 319.68 L26 319.76 L25.5 319.87 L25 320.33 L24.5 320.25 L24 319.94 L23.5 320.32 L23 320.33 L22.5 320.37 L22 320.01 L21.5 320.33 L21 319.96 L20.5 319.66 L20 319.63 L19.5 319.86 L19 319.86 L18.5 320 L18 319.91 L17.5 320.21 L17 319.93 L16.5 319.81 L16 319.74 L15.5 320.05 L15 320.2 L14.5 320.23 L14 319.84Z"/>
<path d="M14 380.11 L14.5 379.74 L15 379.89 L15.5 379.85 L16 379.33 L16.5 379.57 L17 379.93 L17.5 379.85 L18 379.97 L18.5 379.92 L19 379.3 L19.5 379.51 L20 379.92 L20.5 379.67 L21 379.74 L21.5 379.88 L22 379.96 L22.5 379.68 L23 379.32 L23.5 379.44 L24 379.31 L24.5 379.47 L25 379.59 L25.5 379.6 L26 378.85 L26.5 379.25 L27 379.67 L27.5 379.53 L28 379.67 L28.5 379.18 L29 379.51 L29.5 379.67 L30 379.73 L30.5 379.48 L31 379.37 L31.5 379.7 L32 379.67 L32.5 379.51 L33 379.57 L33.5 379.57 L34 379.54 L34.5 379.41 L35 379.47 L35.5 379.37 L36 379.04 L36.5 379.24 L37 378.92 L37.5 378.95 L38 379.27 L38.5 379.44 L39 379.3 L39.5 379.64 L40 379.87 L40.5 379.89 L41 379.48 L41.5 379.55 L42 379.74 L42.5 379.57 L43 379.59 L43.5 379.25 L44 379.64 L44.5 379.71 L45 379.32 L45.5 379.86 L46 379.52 L46.5 379.68 L47 379.62 L47.5 380.17 L48 380.42 L48.5 380.02 L49 380.42 L49.5 380.48 L50 380.17 L50.5 380.03 L51 379.96 L51.5 380.41 L52 379.57 L52.5 379.96 L53 380.09 L53.5 380.06 L54 380.06 L54.5 379.89 L55 379.62 L55.5 379.96 L56 380.04 L56.5 379.9 L57 380.27 L57.5 380.19 L58 380.06 L58.5 379.9 L59 379.85 L59.5 379.82 L60 379.87 L60.5 379.44 L61 379.86 L61.5 380.07 L62 379.83 L62.5 379.92 L63 379.82 L63.5 380.19 L64 380 L64.5 379.46 L65 379.63 L65.5 379.7 L66 379.45 L66.5 379.62 L67 379.13 L67.5 379.35 L68 379.8 L68.5 379.63 L69 379.54 L69.5 379.22 L70 379.41 L70.5 379.39 L71 379.1 L71.5 378.51 L72 379.24 L72.5 379.15 L73 379.15 L73.5 379.38 L74 379.37 L74.5 379.54 L75 379.01 L75.5 379.03 L76 379.6 L76.5 379.45 L77 379.1 L77.5 379.46 L78 379.21 L78.5 379.15 L79 379.57 L79.5 379.76 L80 379.76 L80.5 379.86 L81 379.76 L81.5 379.64 L82 379.27 L82.5 379.55 L83 379.5 L83.5 379.09 L84 379.06 L84.5 379.52 L85 379.76 L85.5 379.82 L86 379.93 L86.5 380.24 L87 380.43 L87.5 380.34 L88 380.57 L88.5 380.38 L89 380.48 L89.5 380.63 L90 380.68 L90.5 380.99 L91 380.44 L91.5 380.46 L92 380.38 L92.5 380.44 L93 380.45 L93.5 380.75 L94 380.6 L94.5 381.06 L95 380.69 L95.5 381.34 L96 381.06 L96.5 381.07 L97 381.44 L97.5 381.05 L98 380.56 L98.5 380.9 L99 380.81 L99.5 380.57 L100 380.81 L100.5 380.78 L101 380.64 L101.5 380.89 L102 380.72 L102.5 380.88 L103 380.9 L103.5 380.76 L104 380.09 L104.5 380.48 L105 380.61 L105.5 380.58 L106 380.35 L106.5 380.67 L107 380.76 L107.5 380.42 L108 380.7 L108.5 380.51 L109 381.17 L109.5 380.94 L110 380.41 L110.5 380.37 L111 380.58 L111.5 380.22 L112 380.22 L112.5 379.76 L113 380.22 L113.5 380.42 L114 379.61 L114.5 380.43 L115 380.11 L115.5 380.37 L116 380.54 L116.5 380.22 L117 380.23 L117.5 380.87 L118 380.1 L118.5 380.53 L119 380.52 L119.5 380.77 L120 380.98 L120.5 380.6 L121 380.61 L121.5 380.4 L122 380.81 L122.5 381.05 L123 380.44 L123.5 380.56 L124 380.69 L124.5 381 L125 380.61 L125.5 381.04 L126 381.08 L126.5 380.9 L127 381.22 L127.5 380.73 L128 380.88 L128.5 381.03 L129 379.27 L129.5 375.69 L130 372.21 L130.5 369.43 L131 367.28 L131.5 365.09 L132 363.05 L132.5 361.8 L133 360.85 L133.5 359.72 L134 358.84 L134.5 357.74 L135 357.31 L135.5 356.35 L136 355.7 L136.5 354.76 L137 354.52 L137.5 353.98 L138 353.41 L138.5 353.22 L139 352.73 L139.5 352.31 L140 351.97 L140.5 351.61 L141 351.34 L141.5 351.26 L142 351.05 L142.5 350.41 L143 350.18 L143.5 349.91 L144 349.52 L144.5 349.51 L145 349.01 L145.5 348.85 L146 348.8 L146.5 348.73 L147 349 L147.5 348.76 L148 348.2 L148.5 348.98 L149 348.84 L149.5 348.57 L150 348.35 L150.5 348.19 L151 348.11 L151.5 347.98 L152 347.49 L152.5 347.91 L153 347.52 L153.5 347.63 L154 347.28 L154.5 347.18 L155 346.86 L155.5 346.79 L156 346.5 L156.5 346.15 L157 346.4 L157.5 346.53 L158 346.64 L158.5 346.61 L159 346.71 L159.5 346.59 L160 346.74 L160.5 346.72 L161 346.61 L161.5 346.01 L162 346.32 L162.5 346.45 L163 346.33 L163.5 346.22 L164 346.85 L164.5 346.99 L165 347.25 L165.5 347.41 L166 347.43 L166.5 347.07 L167 347.13 L167.5 347.02 L168 347.12 L168.5 347.09 L169 347.25 L169.5 347.37 L170 347.03 L170.5 346.77 L171 347.33 L171.5 347.33 L172 347.47 L172.5 347.49 L173 347.72 L173.5 347.86 L174 347.69 L174.5 347.8 L175 347.99 L175.5 347.77 L176 347.92 L176.5 348.02 L177 347.72 L177.5 348.1 L178 348.49 L178.5 348.29 L179 348.22 L179.5 348.29 L180 348.39 L180.5 348.17 L181 348.28 L181.5 348 L182 348.18 L182.5 348.26 L183 348.38 L183.5 348.48 L184 348.7 L184.5 348.4 L185 348.67 L185.5 348.47 L186 348.74 L186.5 348.73 L187 348.53 L187.5 348.32 L188 348.83 L188.5 348.8 L189 348.71 L189.5 348.24 L190 348.61 L190.5 348.57 L191 348.21 L191.5 348.42 L192 348.52 L192.5 348.37 L193 348.36 L193.5 348.03 L194 347.69 L194.5 347.81 L195 347.6 L195.5 347.4 L196 347.54 L196.5 347.63 L197 347.34 L197.5 347.45 L198 346.92 L198.5 347.4 L199 346.9 L199.5 347.27 L200 346.85 L200.5 346.63 L201 346.64 L201.5 347.02 L202 346.97 L202.5 346.6 L203 346.65 L203.5 346.73 L204 346.7 L204.5 346.4 L205 346.47 L205.5 346.35 L206 346.05 L206.5 346.39 L207 346.44 L207.5 345.65 L208 345.95 L208.5 346.49 L209 346.63 L209.5 346.23 L210 345.95 L210.5 346.58 L211 346.43 L211.5 346.45 L212 346.2 L212.5 346.58 L213 346.45 L213.5 346.64 L214 346.42 L214.5 346.53 L215 346.55 L215.5 346.59 L216 346.39 L216.5 346.51 L217 346.3 L217.5 346.58 L218 346.5 L218.5 346.44 L219 346.1 L219.5 346.62 L220 346.4 L220.5 346.84 L221 346.78 L221.5 346.85 L222 347.08 L222.5 346.88 L223 347.21 L223.5 347.02 L224 346.79 L224.5 346.86 L225 346.95 L225.5 346.77 L226 346.35 L226.5 346.46 L227 346.77 L227.5 346.96 L228 346.71 L228.5 347.15 L229 346.97 L229.5 347.17 L230 347.25 L230.5 347.28 L231 346.85 L231.5 347.09 L232 347.19 L232.5 347.16 L233 347.42 L233.5 347.09 L234 347.24 L234.5 347.11 L235 347.08 L235.5 347.3 L236 347.36 L236.5 346.91 L237 347.59 L237.5 347.6 L238 346.73 L238.5 347.61 L239 347.71 L239.5 347.53 L240 347.45 L240.5 347.31 L241 347.27 L241.5 347.56 L242 347.44 L242.5 347.02 L243 347.07 L243.5 347.21 L244 347.33 L244.5 347.13 L245 347.07 L245.5 347.64 L246 347.76 L246.5 347.78 L247 347.45 L247.5 347.26 L248 347.29 L248.5 347.51 L249 347.3 L249.5 347.22 L250 347.58 L250.5 347.77 L251 347.63 L251.5 347.97 L252 347.7 L252.5 347.91 L253 347.6 L253.5 347.55 L254 347.29 L254.5 347.53 L255 347.19 L255.5 347.05 L256 347.27 L256.5 347.4 L257 347.15 L257.5 347.27 L258 347.29 L258.5 347.15 L259 346.97 L259.5 347.36 L260 347.37 L260.5 347.49 L261 347.25 L261.5 347.1 L262 347.24 L262.5 347.45 L263 346.95 L263.5 346.71 L264 346.73 L264.5 347.08 L265 347.2 L265.5 347.28 L266 347.29 L266.5 347.48 L267 347.44 L267.5 346.64 L268 347.04 L268.5 347.09 L269 346.59 L269.5 347.03 L270 346.93 L270.5 347.16 L271 346.92 L271.5 347.05 L272 347.14 L272.5 346.85 L273 347 L273.5 346.21 L274 346.5 L274.5 346.83 L275 346.34 L275.5 346.47 L276 345.99 L276.5 346.35 L277 346.52 L277.5 345.97 L278 346.65 L278.5 346.48 L279 346.44 L279.5 346.53 L280 345.98 L280.5 346.12 L281 346.4 L281.5 346.55 L282 346.45 L282.5 346.66 L283 346.5 L283.5 346.65 L284 346.22 L284.5 346.13 L285 346.06 L285.5 345.85 L286 346.46 L286.5 346.46 L287 346.58 L287.5 346.57 L288 346.65 L288.5 346.17 L289 345.71 L289.5 346.18 L290 346.28 L290.5 346.35 L291 346.2 L291.5 345.93 L292 345.5 L292.5 346.13 L293 346.15 L293.5 346.25 L294 346.44 L294.5 346.2 L295 345.99 L295.5 346.09 L296 346.36 L296.5 346.19 L297 345.54 L297.5 346.14 L298 346.01 L298.5 346.03 L299 346.33 L299.5 346.44 L300 346.38 L300.5 346.19 L301 346.5 L301.5 346.66 L302 346.23 L302.5 346.68 L303 346.24 L303.5 346.19 L304 346.5 L304.5 346.46 L305 346.58 L305.5 346.22 L306 346.53 L306.5 346.79 L307 346.93 L307.5 346.51 L308 346.58 L308.5 346.63 L309 346.26 L309.5 346.42 L310 346.41 L310.5 345.95 L311 346.27 L311.5 346.46 L312 346.3 L312.5 346.51 L313 346.3 L313.5 346.9 L314 346.74 L314.5 346.5 L315 346.76 L315.5 346.81 L316 347.05 L316.5 346.94 L317 346.77 L317.5 346.97 L318 346.63 L318.5 346.62 L319 346.65 L319.5 347.06 L320 347.05 L320.5 346.92 L321 346.93 L321.5 347.2 L322 347.07 L322.5 346.76 L323 347.02 L323.5 347.21 L324 347.06 L324.5 346.84 L325 346.88 L325.5 346.92 L326 347.34 L326.5 347.39 L327 347.5 L327.5 347.39 L328 347.17 L328.5 347.1 L329 347.31 L329.5 347.03 L330 347.33 L330.5 347.12 L331 346.86 L331.5 346.83 L332 347.02 L332.5 346.89 L333 346.89 L333.5 346.9 L334 346.98 L334.5 346.91 L335 346.56 L335.5 346.41 L336 346.13 L336.5 346.17 L337 345.97 L337.5 345.85 L338 345.9 L338.5 345.95 L339 345.28 L339.5 345.73 L340 345.79 L340.5 345.85 L341 345.62 L341.5 345.53 L342 345.65 L342.5 345.78 L343 345.38 L343.5 345.88 L344 345.86 L344.5 345.74 L345 345.09 L345.5 345.3 L346 344.95 L346.5 345.13 L347 345.28 L347.5 345.35 L348 344.88 L348.5 345.21 L349 345.41 L349.5 345.34 L350 344.95 L350.5 344.98 L351 345.32 L351.5 345.54 L352 345.42 L352.5 345.03 L353 345.47 L353.5 345.59 L354 345.97 L354.5 345.92 L355 345.47 L355.5 345.77 L356 345.76 L356.5 345.72 L357 345.28 L357.5 345.24 L358 345.45 L358.5 345.69 L359 345.07 L359.5 345.38 L360 345.58 L360.5 345.58 L361 345.79 L361.5 345.92 L362 346.05 L362.5 345.96 L363 345.95 L363.5 345.84 L364 345.69 L364.5 345.8 L365 345.69 L365.5 345.73 L366 346.3 L366.5 346.42 L367 346.3 L367.5 346.35 L368 346.13 L368.5 346.15 L369 345.79 L369.5 345.89 L370 345.83 L370.5 345.54 L371 345.77 L371.5 346.25 L372 346.2 L372.5 346.44 L373 346.13 L373.5 346.02 L374 346.14 L374.5 346.42 L375 346.14 L375.5 346.31 L376 346.35 L376.5 346.32 L377 346.31 L377.5 346.65 L378 346.52 L378.5 346.82 L379 346.88 L379.5 346.88 L380 346.89 L380.5 346.78 L381 346.54 L381.5 346.65 L382 346.54 L382.5 346.57 L383 346.51 L383.5 346.84 L384 346.84 L384.5 346.84 L385 347.05 L385.5 347.19 L386 347.14 L386.5 346.82 L387 347.19 L387.5 347.3 L388 347.04 L388.5 346.67 L389 346.58 L389.5 347.15 L390 346.79 L390.5 346.94 L391 346.94 L391.5 347.09 L392 347.05 L392.5 346.98 L393 346.55 L393.5 347.15 L394 347.11 L394.5 347.04 L395 346.98 L395.5 346.86 L396 346.72 L396.5 346.52 L397 346.41 L397.5 346.52 L398 346.92 L398.5 346.64 L399 346.72 L399.5 347.12 L400 347.29 L400.5 347.34 L401 347.13 L401.5 347.02 L402 346.78 L402.5 346.94 L403 346.84 L403.5 346.55 L404 346.35 L404.5 346.87 L405 346.68 L405.5 346.95 L406 347.23 L406.5 347.11 L407 347.4 L407.5 347.66 L408 347.46 L408.5 347.05 L409 347 L409.5 346.61 L410 346.38 L410.5 346.47 L411 347.02 L411.5 346.64 L412 346.69 L412.5 346.81 L413 346.65 L413.5 346.81 L414 346.38 L414.5 346.89 L415 347.03 L415.5 346.81 L416 346.92 L416.5 347.04 L417 346.91 L417.5 346.67 L418 346.38 L418.5 346.8 L419 346.87 L419.5 346.64 L420 346.2 L420.5 346.2 L421 345.68 L421.5 346.16 L422 345.92 L422.5 345.98 L423 345.76 L423.5 346.18 L424 346.04 L424.5 346.09 L425 346.3 L425.5 346.42 L426 346.14 L426.5 346.25 L427 345.46 L427.5 346.08 L428 345.97 L428.5 345.8 L429 345.9 L429.5 346.12 L430 346.28 L430.5 345.95 L431 346.1 L431.5 345.22 L432 345.7 L432.5 345.5 L433 345.69 L433.5 346.07 L434 345.84 L434.5 346.14 L435 346.11 L435.5 345.82 L436 346.11 L436.5 346.07 L437 346.05 L437.5 345.93 L438 345.88 L438.5 345.9 L439 345.92 L439.5 345.16 L440 345.99 L440.5 346.22 L441 346.33 L441.5 346.07 L442 345.99 L442.5 346.3 L443 345.86 L443.5 345.84 L444 345.81 L444.5 346.33 L445 346.22 L445.5 346.58 L446 346.78 L446.5 347.17 L447 347.08 L447.5 347.46 L448 347.34 L448.5 347.44 L449 347.26 L449.5 347.87 L450 347.92 L450.5 348.23 L451 348.32 L451.5 348.48 L452 348.57 L452.5 348.65 L453 348.65 L453.5 348.64 L454 348.81 L454.5 348.63 L455 348.82 L455.5 348.7 L456 348.79 L456.5 348.87 L457 348.88 L457.5 348.97 L458 349.1 L458.5 349.07 L459 348.8 L459.5 348.92 L460 348.99 L460.5 349.01 L461 348.68 L461.5 348.99 L462 348.68 L462.5 348.53 L463 348.96 L463.5 348.77 L464 349.03 L464.5 348.99 L465 349.12 L465.5 348.62 L466 348.52 L466.5 348.59 L467 348.66 L467.5 348.33 L468 348.33 L468.5 348.68 L469 348.72 L469.5 348.73 L470 348.96 L470.5 349.03 L471 349 L471.5 349.06 L472 349.07 L472.5 348.84 L473 348.75 L473.5 348.68 L474 349.12 L474.5 348.95 L475 348.98 L475.5 348.92 L476 349.1 L476.5 348.79 L477 349.28 L477.5 348.67 L478 349.29 L478.5 349.06 L479 348.91 L479.5 348.97 L480 349.07 L480.5 349.23 L481 348.77 L481.5 348.72 L482 349.03 L482.5 349.07 L483 348.95 L483.5 349.12 L484 349.24 L484.5 349.38 L485 349.4 L485.5 349.44 L486 349.94 L486.5 349.8 L487 349.69 L487.5 349.68 L488 349.36 L488.5 350.27 L489 349.7 L489.5 350.12 L490 349.78 L490.5 350.22 L491 350.31 L491.5 350.5 L492 349.86 L492.5 350.65 L493 350.56 L493.5 350.48 L494 350.65 L494.5 350.74 L495 350.81 L495.5 350.7 L496 351.05 L496.5 351.17 L497 350.88 L497.5 350.99 L498 351.07 L498.5 351.08 L499 351.09 L499.5 351.44 L500 351.68 L500.5 351.62 L501 351.93 L501.5 352.04 L502 352.34 L502.5 352.28 L503 352.18 L503.5 352.74 L504 352.43 L504.5 353.51 L505 355.45 L505.5 357.05 L506 359.04 L506.5 360.72 L507 362.86 L507.5 364.47 L508 365.73 L508.5 366.95 L509 368.12 L509.5 369.3 L510 369.65 L510.5 371.02 L511 371.59 L511.5 372.43 L512 373.18 L512.5 373.84 L513 373.92 L513.5 374.81 L514 375.33 L514.5 375.89 L515 376.19 L515.5 376.18 L516 376.15 L516.5 376.89 L517 376.97 L517.5 377.07 L518 377.37 L518.5 377.83 L519 377.4 L519.5 377.79 L520 377.73 L520.5 377.51 L521 377.85 L521.5 377.92 L522 377.92 L522.5 377.84 L523 377.62 L523.5 377.99 L524 378.36 L524.5 378.21 L525 377.86 L525.5 378.67 L526 378.29 L526.5 378.76 L527 378.52 L527.5 379.14 L528 379.11 L528.5 379.21 L529 379.19 L529.5 379.46 L530 379.25 L530.5 379.3 L531 379.38 L531.5 379.43 L532 379.45 L532.5 379.19 L533 379.34 L533.5 378.74 L534 379.18 L534.5 378.9 L535 378.84 L535.5 378.96 L536 379.38 L536.5 379.13 L537 379.66 L537.5 379.57 L538 378.86 L538.5 379.06 L539 379.08 L539.5 379.33 L540 379.13 L540.5 379.06 L541 379.4 L541.5 379.25 L542 379.4 L542.5 379.71 L543 379.81 L543.5 379.59 L544 379.44 L544.5 379.83 L545 380.1 L545.5 380.15 L546 380.13 L546.5 380.39 L547 380.4 L547.5 380.54 L548 380.54 L548.5 380.76 L549 380.65 L549.5 380.5 L550 380.88 L550.5 380.82 L551 380.86 L551.5 381.08 L552 381 L552.5 381.21 L553 380.98 L553.5 381.48 L554 381.13 L554.5 381.23 L555 381.08 L555.5 381.14 L556 380.96 L556.5 381.1 L557 381.24 L557.5 381.16 L558 381.03 L558.5 381.12 L559 380.63 L559.5 381.15 L560 381.13 L560.5 381.18 L561 381.18 L561.5 380.52 L562 380.27 L562.5 380.5 L563 380.24 L563.5 379.99 L564 379.83 L564.5 380.21 L565 380.11 L565.5 380.33 L566 380.1 L566.5 379.94 L567 379.84 L567.5 379.73 L568 379.27 L568.5 379.56 L569 379.39 L569.5 379.56 L570 379.94 L570.5 380.21 L571 379.93 L571.5 380.02 L572 379.13 L572.5 379.44 L573 379.53 L573.5 379.27 L574 379.24 L574.5 379.16 L575 379.41 L575.5 379.31 L576 379.33 L576.5 379.5 L577 379.42 L577.5 379.47 L578 379.13 L578.5 378.69 L579 379.2 L579.5 379.3 L580 379.15 L580.5 379.29 L581 378.96 L581.5 379.32 L582 378.98 L582.5 379.19 L583 379.42 L583.5 379.04 L584 378.83 L584.5 379 L585 379.33 L585.5 379.43 L586 379.24 L586.5 378.93 L587 379.31 L587.5 379.44 L588 379.28 L588.5 379.31 L589 378.91 L589.5 379.56 L590 379.36 L590.5 379.43 L591 379.61 L591.5 379.52 L592 379.74 L592.5 379.87 L593 379.88 L593.5 380.18 L594 380.15 L594.5 380.07 L595 379.97 L595.5 379.84 L596 380.32 L596.5 380.71 L597 381.65 L597.5 382.76 L598 383.01 L598.5 382.38 L599 379.59 L599.5 376.83 L600 373.24 L600.5 372.35 L601 370.72 L601.5 368.82 L602 367.58 L602.5 366.53 L603 365.5 L603.5 364.15 L604 363.34 L604.5 363.15 L605 362.49 L605.5 361.65 L606 360.9 L606.5 360.91 L607 360.21 L607.5 359.96 L608 360.15 L608.5 359.91 L609 359.95 L609.5 360.14 L610 360.09 L610.5 359.87 L611 359.84 L611.5 359.71 L612 360 L612.5 359.93 L613 360.03 L613.5 360.17 L614 360.1 L614.5 360.2 L615 360.07 L615.5 360.41 L616 360.29 L616.5 359.7 L617 359.69 L617.5 359.88 L618 359.89 L618.5 359.92 L619 359.8 L619.5 359.65 L620 359.71 L620.5 360 L621 359.68 L621.5 359.89 L622 359.86 L622.5 359.78 L623 359.64 L623.5 360.08 L624 359.77 L624.5 359.93 L625 359.94 L625.5 359.49 L626 359.97 L626.5 359.78 L627 359.97 L627.5 359.49 L628 359.95 L628.5 359.92 L629 360.24 L629.5 360.04 L630 360.37 L630 365.08 L629.5 364.71 L629 364.82 L628.5 364.5 L628 364.62 L627.5 364.33 L627 364.18 L626.5 364.23 L626 364.39 L625.5 364.56 L625 364.25 L624.5 364.56 L624 364.39 L623.5 365.11 L623 364.56 L622.5 364.19 L622 364.64 L621.5 364.38 L621 364.48 L620.5 364.32 L620 364.52 L619.5 364.55 L619 364.48 L618.5 364.18 L618 364.16 L617.5 364.33 L617 364.52 L616.5 364.63 L616 364.72 L615.5 365.19 L615 364.9 L614.5 364.98 L614 364.79 L613.5 364.76 L613 364.66 L612.5 364.84 L612 364.42 L611.5 364.42 L611 364.27 L610.5 364.32 L610 364.38 L609.5 364.42 L609 364.38 L608.5 364.67 L608 364.7 L607.5 364.71 L607 365.02 L606.5 365.3 L606 365.99 L605.5 366.43 L605 367.01 L604.5 367.53 L604 367.77 L603.5 368.38 L603 370.17 L602.5 371.04 L602 372.02 L601.5 373.71 L601 375.17 L600.5 376.73 L600 377.85 L599.5 381.48 L599 384.14 L598.5 386.68 L598 387.23 L597.5 387.02 L597 386.1 L596.5 385.44 L596 384.85 L595.5 384.11 L595 384.23 L594.5 384.78 L594 384.77 L593.5 384.4 L593 384.67 L592.5 384.5 L592 384.29 L591.5 384.51 L591 383.77 L590.5 384.09 L590 384.19 L589.5 383.95 L589 383.74 L588.5 383.73 L588 383.84 L587.5 384.11 L587 383.64 L586.5 384.08 L586 383.56 L585.5 383.88 L585 383.68 L584.5 383.83 L584 383.61 L583.5 383.77 L583 383.76 L582.5 383.62 L582 383.47 L581.5 383.93 L581 383.75 L580.5 383.58 L580 383.9 L579.5 383.91 L579 383.55 L578.5 383.6 L578 383.61 L577.5 383.75 L577 383.75 L576.5 384.25 L576 383.92 L575.5 383.89 L575 384.08 L574.5 383.96 L574 383.77 L573.5 383.76 L573 383.72 L572.5 384.38 L572 384.37 L571.5 384.48 L571 384.29 L570.5 384.43 L570 384.19 L569.5 384.05 L569 384.39 L568.5 383.77 L568 383.87 L567.5 384.11 L567 384.24 L566.5 384.41 L566 384.46 L565.5 384.67 L565 384.59 L564.5 384.36 L564 384.44 L563.5 384.7 L563 384.54 L562.5 385 L562 385.29 L561.5 385.34 L561 385.31 L560.5 385.59 L560 385.51 L559.5 385.54 L559 385.48 L558.5 385.38 L558 385.29 L557.5 385.42 L557 386.02 L556.5 385.44 L556 385.69 L555.5 386 L555 386.02 L554.5 385.89 L554 385.92 L553.5 385.78 L553 385.43 L552.5 385.47 L552 385.45 L551.5 385.78 L551 385.48 L550.5 385.3 L550 385.54 L549.5 385.17 L549 385.25 L548.5 385.28 L548 385.13 L547.5 384.91 L547 384.64 L546.5 385.12 L546 384.66 L545.5 384.34 L545 384.56 L544.5 384.21 L544 384.22 L543.5 384.21 L543 384.21 L542.5 384.38 L542 383.88 L541.5 383.88 L541 384.13 L540.5 383.63 L540 383.64 L539.5 384.19 L539 383.84 L538.5 383.59 L538 383.86 L537.5 383.82 L537 384.4 L536.5 383.84 L536 384.04 L535.5 383.58 L535 383.46 L534.5 383.53 L534 383.62 L533.5 383.7 L533 383.74 L532.5 383.84 L532 383.75 L531.5 383.83 L531 383.86 L530.5 383.61 L530 383.73 L529.5 383.89 L529 383.77 L528.5 383.72 L528 383.98 L527.5 383.68 L527 383.42 L526.5 382.93 L526 383.18 L525.5 382.93 L525 383.12 L524.5 382.79 L524 382.88 L523.5 382.95 L523 382.67 L522.5 382.78 L522 382.28 L521.5 382.27 L521 382.2 L520.5 381.99 L520 382.31 L519.5 382.06 L519 382.1 L518.5 382.27 L518 381.72 L517.5 381.72 L517 381.61 L516.5 381.6 L516 381 L515.5 380.6 L515 380.34 L514.5 380.42 L514 379.7 L513.5 379.51 L513 378.93 L512.5 378.37 L512 377.86 L511.5 377.2 L511 376.48 L510.5 375.61 L510 374.49 L509.5 373.52 L509 372.63 L508.5 371.45 L508 370.45 L507.5 369.03 L507 367.11 L506.5 365.08 L506 363.28 L505.5 361.45 L505 359.88 L504.5 358.22 L504 356.69 L503.5 356.93 L503 357 L502.5 356.76 L502 356.8 L501.5 356.74 L501 356.48 L500.5 356.01 L500 356 L499.5 356.35 L499 355.56 L498.5 355.55 L498 355.43 L497.5 355.37 L497 355.47 L496.5 355.57 L496 355.31 L495.5 355.18 L495 355.34 L494.5 355.3 L494 355.06 L493.5 355.28 L493 355.22 L492.5 355.16 L492 354.92 L491.5 355.18 L491 354.64 L490.5 354.92 L490 354.44 L489.5 354.39 L489 354.74 L488.5 354.57 L488 354.34 L487.5 354.49 L487 354.22 L486.5 354.68 L486 354.33 L485.5 353.8 L485 354.13 L484.5 354.02 L484 354.02 L483.5 353.53 L483 353.56 L482.5 353.73 L482 353.52 L481.5 353.54 L481 353.35 L480.5 353.66 L480 353.44 L479.5 353.46 L479 353.61 L478.5 353.65 L478 354.12 L477.5 353.32 L477 353.39 L476.5 353.46 L476 353.58 L475.5 353.38 L475 353.64 L474.5 353.43 L474 353.4 L473.5 353.73 L473 353.24 L472.5 353.87 L472 353.44 L471.5 353.38 L471 353.48 L470.5 353.37 L470 353.32 L469.5 353.34 L469 353.25 L468.5 353.09 L468 353.19 L467.5 353.12 L467 353.43 L466.5 353.61 L466 353.57 L465.5 353.47 L465 353.37 L464.5 353.85 L464 353.31 L463.5 353.81 L463 353.16 L462.5 353.39 L462 353.25 L461.5 353.63 L461 353.6 L460.5 353.85 L460 353.8 L459.5 353.44 L459 353.34 L458.5 353.69 L458 353.66 L457.5 353.4 L457 353.68 L456.5 353.35 L456 353.25 L455.5 353.77 L455 352.99 L454.5 353.46 L454 352.95 L453.5 353.21 L453 352.87 L452.5 353.1 L452 353.09 L451.5 352.72 L451 352.9 L450.5 352.71 L450 352.51 L449.5 352.43 L449 352.21 L448.5 351.68 L448 352.01 L447.5 351.69 L447 351.97 L446.5 352.27 L446 351.36 L445.5 351.38 L445 350.82 L444.5 351.18 L444 350.38 L443.5 350.38 L443 350.67 L442.5 350.68 L442 350.65 L441.5 350.33 L441 350.91 L440.5 350.93 L440 350.45 L439.5 350.32 L439 350.55 L438.5 350.46 L438 350.58 L437.5 350.28 L437 350.34 L436.5 350.83 L436 350.32 L435.5 350.66 L435 350.57 L434.5 350.9 L434 350.82 L433.5 350.34 L433 350.54 L432.5 350.54 L432 350.35 L431.5 350.27 L431 350.68 L430.5 350.32 L430 350.42 L429.5 350.65 L429 351.01 L428.5 350.55 L428 350.22 L427.5 351.27 L427 350.41 L426.5 350.79 L426 350.49 L425.5 350.6 L425 350.62 L424.5 350.89 L424 351 L423.5 350.62 L423 350.85 L422.5 350.26 L422 350.99 L421.5 350.62 L421 350.56 L420.5 350.74 L420 350.78 L419.5 351.56 L419 351.99 L418.5 351.34 L418 351.24 L417.5 351.51 L417 351.35 L416.5 351.49 L416 351.27 L415.5 351.24 L415 352.02 L414.5 351.43 L414 351.17 L413.5 351.24 L413 351.07 L412.5 351.5 L412 351.02 L411.5 351.58 L411 351.44 L410.5 351.1 L410 351.2 L409.5 351.79 L409 351.66 L408.5 351.97 L408 352.11 L407.5 351.93 L407 352.29 L406.5 351.88 L406 351.58 L405.5 351.29 L405 351.44 L404.5 351.62 L404 351.17 L403.5 351.07 L403 351.12 L402.5 351.64 L402 352.19 L401.5 351.38 L401 351.59 L400.5 351.89 L400 351.67 L399.5 351.41 L399 351.33 L398.5 351.45 L398 351.16 L397.5 351.01 L397 351.34 L396.5 351.12 L396 351.25 L395.5 351.3 L395 351.38 L394.5 351.43 L394 351.58 L393.5 352.08 L393 351.44 L392.5 351.4 L392 351.45 L391.5 351.26 L391 351.79 L390.5 351.15 L390 351.26 L389.5 351.35 L389 351.61 L388.5 351.14 L388 351.37 L387.5 351.88 L387 351.57 L386.5 351.66 L386 351.45 L385.5 352.16 L385 351.77 L384.5 351.23 L384 351.66 L383.5 351.43 L383 351.76 L382.5 351.09 L382 351.28 L381.5 351.12 L381 351.02 L380.5 351.22 L380 351.09 L379.5 351.52 L379 351.4 L378.5 351.44 L378 350.86 L377.5 351.03 L377 350.99 L376.5 350.71 L376 350.75 L375.5 350.64 L375 350.67 L374.5 350.65 L374 350.53 L373.5 350.92 L373 350.53 L372.5 350.67 L372 350.62 L371.5 350.8 L371 350.8 L370.5 350.44 L370 350.38 L369.5 350.57 L369 350.44 L368.5 350.49 L368 350.85 L367.5 350.8 L367 350.86 L366.5 350.77 L366 350.47 L365.5 350.69 L365 350.35 L364.5 350.27 L364 350.52 L363.5 350.54 L363 350.55 L362.5 350.69 L362 350.53 L361.5 350.32 L361 350.3 L360.5 350.47 L360 350.24 L359.5 349.77 L359 350.1 L358.5 350.07 L358 349.76 L357.5 350.18 L357 349.94 L356.5 350.43 L356 350.19 L355.5 350.11 L355 350.18 L354.5 350.27 L354 350.28 L353.5 350.44 L353 350.22 L352.5 350.02 L352 349.72 L351.5 350.07 L351 349.78 L350.5 349.94 L350 349.66 L349.5 350.1 L349 349.58 L348.5 349.57 L348 349.89 L347.5 349.5 L347 349.58 L346.5 349.83 L346 349.45 L345.5 349.53 L345 349.7 L344.5 350.01 L344 350.25 L343.5 350.19 L343 350.51 L342.5 350.46 L342 350.11 L341.5 349.81 L341 349.91 L340.5 350.32 L340 350.2 L339.5 350.03 L339 350.23 L338.5 350.35 L338 350.38 L337.5 350.21 L337 350.82 L336.5 350.66 L336 350.58 L335.5 351.29 L335 351.17 L334.5 351.13 L334 351.11 L333.5 351.59 L333 351.36 L332.5 351.4 L332 351.46 L331.5 351.51 L331 351.71 L330.5 351.71 L330 351.6 L329.5 351.71 L329 351.88 L328.5 351.68 L328 351.89 L327.5 351.91 L327 352.26 L326.5 351.65 L326 351.52 L325.5 351.65 L325 351.6 L324.5 351.65 L324 351.41 L323.5 351.75 L323 351.52 L322.5 351.53 L322 351.56 L321.5 351.71 L321 352.02 L320.5 351.63 L320 351.53 L319.5 351.86 L319 351.22 L318.5 351.14 L318 351.3 L317.5 351.16 L317 351.22 L316.5 351.63 L316 351.36 L315.5 351.57 L315 351.68 L314.5 351.33 L314 351.25 L313.5 351.55 L313 351.21 L312.5 351.09 L312 350.87 L311.5 351.12 L311 351.19 L310.5 350.79 L310 350.59 L309.5 350.86 L309 350.81 L308.5 351.33 L308 351.24 L307.5 351.42 L307 351.23 L306.5 350.97 L306 350.78 L305.5 350.95 L305 350.88 L304.5 351.33 L304 350.98 L303.5 351.08 L303 350.84 L302.5 350.82 L302 350.82 L301.5 351.06 L301 351.47 L300.5 350.92 L300 350.8 L299.5 350.68 L299 350.64 L298.5 350.7 L298 350.22 L297.5 350.83 L297 351 L296.5 350.61 L296 350.6 L295.5 350.54 L295 350.67 L294.5 350.47 L294 350.6 L293.5 350.49 L293 350.63 L292.5 350.47 L292 350.75 L291.5 350.67 L291 350.58 L290.5 351.58 L290 350.54 L289.5 350.62 L289 351.12 L288.5 351 L288 351.15 L287.5 350.74 L287 350.76 L286.5 350.84 L286 350.75 L285.5 350.73 L285 350.64 L284.5 351.1 L284 350.63 L283.5 351.13 L283 350.87 L282.5 350.99 L282 350.9 L281.5 351.6 L281 351.12 L280.5 350.83 L280 351.15 L279.5 351 L279 350.65 L278.5 350.95 L278 350.81 L277.5 350.95 L277 350.74 L276.5 351.04 L276 350.72 L275.5 351.17 L275 351.24 L274.5 351.05 L274 351.04 L273.5 351.21 L273 351.68 L272.5 351.22 L272 351.41 L271.5 351.41 L271 351.41 L270.5 351.39 L270 351.28 L269.5 351.37 L269 352.07 L268.5 351.82 L268 351.4 L267.5 351.49 L267 351.61 L266.5 351.8 L266 351.94 L265.5 351.83 L265 352.24 L264.5 351.63 L264 351.93 L263.5 351.51 L263 351.48 L262.5 351.8 L262 351.69 L261.5 351.92 L261 352.24 L260.5 352.15 L260 351.91 L259.5 352.44 L259 351.64 L258.5 351.74 L258 351.61 L257.5 351.68 L257 351.45 L256.5 351.59 L256 351.55 L255.5 351.96 L255 351.84 L254.5 351.87 L254 352.09 L253.5 352.25 L253 352.37 L252.5 352.75 L252 352.45 L251.5 352.51 L251 352.63 L250.5 352.3 L250 351.9 L249.5 351.82 L249 351.71 L248.5 351.81 L248 351.68 L247.5 351.93 L247 351.87 L246.5 352.35 L246 352.65 L245.5 351.86 L245 352.12 L244.5 352.38 L244 351.95 L243.5 351.81 L243 351.69 L242.5 352.05 L242 351.76 L241.5 352 L241 352.24 L240.5 351.83 L240 351.69 L239.5 352.28 L239 352.16 L238.5 352.33 L238 352.27 L237.5 352.32 L237 351.86 L236.5 352.03 L236 351.96 L235.5 352.16 L235 351.51 L234.5 352.01 L234 351.88 L233.5 351.77 L233 351.7 L232.5 351.38 L232 351.43 L231.5 351.32 L231 351.51 L230.5 351.5 L230 351.68 L229.5 351.61 L229 352.08 L228.5 351.36 L228 351.44 L227.5 351.49 L227 351.66 L226.5 351.85 L226 351.09 L225.5 351.22 L225 351.31 L224.5 351.4 L224 351.35 L223.5 351.16 L223 351.71 L222.5 351.44 L222 351.84 L221.5 351.68 L221 351.28 L220.5 351.27 L220 350.87 L219.5 351.27 L219 350.75 L218.5 350.98 L218 350.77 L217.5 350.86 L217 351.61 L216.5 351.53 L216 350.94 L215.5 351.05 L215 351.09 L214.5 350.98 L214 350.82 L213.5 350.93 L213 350.86 L212.5 351.1 L212 350.8 L211.5 350.83 L211 351.2 L210.5 351.07 L210 350.8 L209.5 350.83 L209 350.77 L208.5 350.6 L208 350.68 L207.5 350.95 L207 350.83 L206.5 351.05 L206 350.8 L205.5 351.2 L205 350.82 L204.5 350.84 L204 351.02 L203.5 351.02 L203 351.4 L202.5 351.64 L202 351.3 L201.5 351.26 L201 351.41 L200.5 351.63 L200 351.97 L199.5 351.78 L199 351.6 L198.5 351.82 L198 351.8 L197.5 351.95 L197 352.05 L196.5 351.93 L196 351.96 L195.5 352.22 L195 352.52 L194.5 352.15 L194 352.45 L193.5 352.36 L193 352.94 L192.5 352.61 L192 352.97 L191.5 353.13 L191 352.74 L190.5 352.85 L190 352.79 L189.5 353.13 L189 353.04 L188.5 353.01 L188 353.39 L187.5 352.94 L187 353.28 L186.5 353.27 L186 353.04 L185.5 353.04 L185 353 L184.5 352.94 L184 353.17 L183.5 353.31 L183 353.45 L182.5 353.01 L182 352.81 L181.5 352.58 L181 352.5 L180.5 352.91 L180 352.68 L179.5 352.79 L179 352.97 L178.5 352.93 L178 353.08 L177.5 352.59 L177 352.35 L176.5 352.38 L176 352.37 L175.5 352.35 L175 352.31 L174.5 352.7 L174 352.49 L173.5 352.16 L173 352.22 L172.5 351.99 L172 352.15 L171.5 351.9 L171 351.81 L170.5 351.62 L170 351.99 L169.5 351.83 L169 351.44 L168.5 351.41 L168 351.55 L167.5 351.91 L167 351.61 L166.5 351.63 L166 352.18 L165.5 351.61 L165 351.53 L164.5 351.56 L164 351.28 L163.5 350.9 L163 350.87 L162.5 350.66 L162 351.18 L161.5 350.89 L161 351.01 L160.5 350.89 L160 350.88 L159.5 351.61 L159 351.35 L158.5 351.15 L158 350.85 L157.5 350.82 L157 350.89 L156.5 351.03 L156 350.92 L155.5 351.32 L155 351.56 L154.5 351.82 L154 351.67 L153.5 351.83 L153 352.63 L152.5 352.23 L152 352.2 L151.5 352.68 L151 352.46 L150.5 352.5 L150 352.65 L149.5 352.94 L149 353.07 L148.5 353.09 L148 353.33 L147.5 353.14 L147 353.71 L146.5 353.14 L146 353.53 L145.5 353.87 L145 353.75 L144.5 353.95 L144 354.34 L143.5 354.85 L143 354.6 L142.5 355.1 L142 355.5 L141.5 355.66 L141 356.23 L140.5 356.5 L140 356.81 L139.5 356.62 L139 357.03 L138.5 357.62 L138 358.21 L137.5 358.5 L137 358.83 L136.5 359.44 L136 360.36 L135.5 360.59 L135 361.81 L134.5 362.49 L134 363.07 L133.5 364.04 L133 365.18 L132.5 366.15 L132 367.37 L131.5 369.44 L131 371.75 L130.5 373.79 L130 376.84 L129.5 380.63 L129 384.28 L128.5 385.38 L128 385.45 L127.5 385.49 L127 385.62 L126.5 385.37 L126 385.49 L125.5 385.27 L125 385.59 L124.5 385.5 L124 385.33 L123.5 385.69 L123 385.61 L122.5 385.5 L122 385.86 L121.5 385.46 L121 385.49 L120.5 384.99 L120 386.13 L119.5 385.41 L119 385.34 L118.5 385.18 L118 385.15 L117.5 385.02 L117 384.99 L116.5 384.76 L116 384.82 L115.5 385.26 L115 385.23 L114.5 384.77 L114 384.65 L113.5 385.05 L113 384.72 L112.5 384.79 L112 384.73 L111.5 384.73 L111 385.2 L110.5 385.11 L110 385 L109.5 385.44 L109 385.33 L108.5 385.34 L108 384.98 L107.5 385.29 L107 384.97 L106.5 385.34 L106 384.62 L105.5 385.1 L105 385.06 L104.5 385.06 L104 384.9 L103.5 385.03 L103 385.41 L102.5 385.33 L102 385.69 L101.5 385.31 L101 385.4 L100.5 385.14 L100 385.38 L99.5 385.27 L99 385.24 L98.5 385.22 L98 385.25 L97.5 385.44 L97 385.85 L96.5 385.85 L96 385.65 L95.5 385.68 L95 385.5 L94.5 385.4 L94 385.51 L93.5 385.25 L93 385.19 L92.5 385.11 L92 385.02 L91.5 385.43 L91 385.55 L90.5 385.33 L90 385.13 L89.5 385.07 L89 384.95 L88.5 384.8 L88 384.8 L87.5 384.56 L87 384.61 L86.5 384.84 L86 384.28 L85.5 384.47 L85 384.47 L84.5 384.01 L84 383.92 L83.5 383.79 L83 383.91 L82.5 384.65 L82 384.13 L81.5 384.26 L81 384.12 L80.5 384.2 L80 384.48 L79.5 384.27 L79 383.82 L78.5 383.82 L78 384.02 L77.5 383.68 L77 384.03 L76.5 384.19 L76 384.04 L75.5 384.2 L75 383.78 L74.5 384.03 L74 383.64 L73.5 383.89 L73 383.75 L72.5 383.74 L72 384.39 L71.5 383.78 L71 383.87 L70.5 384.03 L70 383.55 L69.5 384.32 L69 383.74 L68.5 384.31 L68 384.33 L67.5 384.11 L67 384.51 L66.5 384.17 L66 384.04 L65.5 384.12 L65 383.97 L64.5 384.18 L64 384.29 L63.5 384.58 L63 384.45 L62.5 384.56 L62 384.56 L61.5 385.18 L61 384.32 L60.5 384.06 L60 384.34 L59.5 384.34 L59 384.54 L58.5 384.65 L58 384.48 L57.5 384.73 L57 384.43 L56.5 384.52 L56 384.55 L55.5 384.47 L55 384.48 L54.5 384.05 L54 384.53 L53.5 384.58 L53 384.56 L52.5 384.49 L52 384.87 L51.5 384.73 L51 384.48 L50.5 384.84 L50 385.01 L49.5 384.76 L49 385.16 L48.5 384.68 L48 384.67 L47.5 384.75 L47 384.24 L46.5 384.04 L46 384 L45.5 383.98 L45 383.94 L44.5 383.95 L44 384 L43.5 384.35 L43 384.12 L42.5 384.54 L42 384.12 L41.5 384.17 L41 384.15 L40.5 384.15 L40 384.5 L39.5 384.12 L39 383.81 L38.5 383.65 L38 383.65 L37.5 383.79 L37 383.75 L36.5 383.52 L36 383.8 L35.5 384.27 L35 383.64 L34.5 383.69 L34 383.78 L33.5 384.27 L33 384.43 L32.5 384.26 L32 384.53 L31.5 384.18 L31 384.18 L30.5 383.99 L30 383.89 L29.5 384.29 L29 384.21 L28.5 384.19 L28 384.21 L27.5 384.38 L27 383.9 L26.5 384.6 L26 384.19 L25.5 384.27 L25 384.1 L24.5 383.9 L24 384.37 L23.5 383.93 L23 384.23 L22.5 384.72 L22 384.65 L21.5 384.49 L21 384.48 L20.5 384.22 L20 384.6 L19.5 384.23 L19 384.1 L18.5 384.16 L18 384.73 L17.5 384.27 L17 384.21 L16.5 384.41 L16 384.33 L15.5 384.53 L15 384.42 L14.5 384.61 L14 384.25Z M129.65 384 L129.55 464 L128.95 464 L128.85 384Z"/>
</g>
<path d="M130.5 153.8 L458 153.8" stroke="#7e0a7e" stroke-width="0.9" fill="none"/>
<path d="M14 315.83 L14.5 316.03 L15 315.91 L15.5 315.9 L16 315.72 L16.5 315.74 L17 315.9 L17.5 316.02 L18 315.81 L18.5 315.63 L19 315.73 L19.5 315.51 L20 315.48 L20.5 315.56 L21 315.82 L21.5 315.96 L22 316 L22.5 316.21 L23 316.27 L23.5 315.86 L24 315.74 L24.5 315.87 L25 315.87 L25.5 315.75 L26 315.67 L26.5 315.47 L27 315.35 L27.5 314.91 L28 314.71 L28.5 314.9 L29 315.01 L29.5 315.11 L30 315.14 L30.5 315.44 L31 315.55 L31.5 315.17 L32 314.95 L32.5 315.03 L33 315.13 L33.5 315.1 L34 315.09 L34.5 315.22 L35 315.12 L35.5 314.76 L36 314.59 L36.5 314.68 L37 314.85 L37.5 315 L38 315.09 L38.5 315.14 L39 315.46 L39.5 315.26 L40 315.09 L40.5 315.27 L41 315.31 L41.5 315.57 L42 315.61 L42.5 315.75 L43 315.98 L43.5 316.08 L44 316.22 L44.5 316.57 L45 316.42 L45.5 316.6 L46 316.51 L46.5 315.97 L47 316.04 L47.5 315.99 L48 316.16 L48.5 316.03 L49 316.17 L49.5 316.4 L50 316.56 L50.5 316.58 L51 316.68 L51.5 316.82 L52 316.71 L52.5 317.05 L53 317.2 L53.5 317.11 L54 316.7 L54.5 316.54 L55 316.34 L55.5 316.31 L56 315.81 L56.5 315.94 L57 316.3 L57.5 316.43 L58 316.81 L58.5 316.54 L59 316.89 L59.5 316.84 L60 316.68 L60.5 316.68 L61 316.61 L61.5 316.29 L62 316.23 L62.5 316 L63 316.18 L63.5 316.12 L64 315.86 L64.5 315.86 L65 315.49 L65.5 315.38 L66 315.22 L66.5 315.06 L67 315.13 L67.5 315.44 L68 315.66 L68.5 315.83 L69 315.9 L69.5 315.94 L70 315.94 L70.5 315.87 L71 315.84 L71.5 315.47 L72 315.27 L72.5 315.2 L73 314.98 L73.5 314.89 L74 314.72 L74.5 314.92 L75 314.81 L75.5 314.75 L76 314.8 L76.5 314.72 L77 314.81 L77.5 314.84 L78 315.08 L78.5 315.11 L79 315.14 L79.5 315.23 L80 315.18 L80.5 314.99 L81 315.1 L81.5 315.24 L82 315.42 L82.5 315.45 L83 315.59 L83.5 316.01 L84 315.89 L84.5 316.02 L85 315.88 L85.5 316.38 L86 316.62 L86.5 316.62 L87 316.81 L87.5 316.84 L88 317.19 L88.5 317.08 L89 317.05 L89.5 317.32 L90 317.82 L90.5 318.03 L91 317.95 L91.5 317.99 L92 318.27 L92.5 318.23 L93 317.8 L93.5 318.06 L94 318.03 L94.5 317.97 L95 317.93 L95.5 318.11 L96 318.15 L96.5 317.85 L97 318.2 L97.5 318.42 L98 318.09 L98.5 318.25 L99 318.64 L99.5 319.08 L100 318.99 L100.5 318.88 L101 319.04 L101.5 318.97 L102 318.66 L102.5 318.15 L103 318.21 L103.5 318.45 L104 318.36 L104.5 318.02 L105 318.14 L105.5 318.09 L106 317.99 L106.5 317.77 L107 318.01 L107.5 317.95 L108 317.76 L108.5 317.84 L109 317.98 L109.5 318.08 L110 317.78 L110.5 317.79 L111 317.84 L111.5 317.9 L112 317.72 L112.5 317.42 L113 317.44 L113.5 317.77 L114 317.88 L114.5 317.75 L115 317.89 L115.5 318.22 L116 317.97 L116.5 317.71 L117 317.65 L117.5 317.76 L118 317.48 L118.5 317.53 L119 317.96 L119.5 317.66 L120 317.59 L120.5 317.66 L121 317.56 L121.5 317.63 L122 317.64 L122.5 317.81 L123 317.85 L123.5 317.79 L124 318.11 L124.5 317.91 L125 317.93 L125.5 318.43 L126 318.47 L126.5 318.59 L127 318.57 L127.5 318.58 L128 318.76 L128.5 318.38 L129 315.33 L129.5 308.02 L130 300.27 L130.5 294.06 L131 289.8 L131.5 285.47 L132 281.04 L132.5 277.93 L133 275.95 L133.5 273.76 L134 271.28 L134.5 269.5 L135 268.53 L135.5 267.04 L136 265.08 L136.5 264.31 L137 263.63 L137.5 262.73 L138 261.16 L138.5 260.42 L139 259.66 L139.5 258.48 L140 257.45 L140.5 256.63 L141 256.48 L141.5 255.61 L142 255.14 L142.5 254.81 L143 254.47 L143.5 253.92 L144 253.28 L144.5 253.25 L145 252.91 L145.5 252.63 L146 252.16 L146.5 251.96 L147 251.59 L147.5 251.17 L148 250.96 L148.5 250.52 L149 250.54 L149.5 250.12 L150 249.93 L150.5 249.78 L151 249.75 L151.5 249.53 L152 249.03 L152.5 248.9 L153 248.66 L153.5 248.58 L154 248.22 L154.5 248.06 L155 247.93 L155.5 247.96 L156 248.09 L156.5 247.87 L157 247.83 L157.5 247.89 L158 247.92 L158.5 247.79 L159 247.32 L159.5 247.2 L160 247.03 L160.5 247.1 L161 246.88 L161.5 246.61 L162 246.91 L162.5 246.79 L163 247.01 L163.5 246.87 L164 247.03 L164.5 247.39 L165 247.19 L165.5 247.26 L166 247.43 L166.5 247.5 L167 247.58 L167.5 247.74 L168 247.9 L168.5 248.31 L169 248.31 L169.5 248.44 L170 248.51 L170.5 248.85 L171 249.23 L171.5 249.31 L172 249.33 L172.5 249.7 L173 249.69 L173.5 249.39 L174 249.56 L174.5 249.73 L175 249.86 L175.5 249.83 L176 250.03 L176.5 250 L177 250.04 L177.5 249.98 L178 250.22 L178.5 250.32 L179 250.31 L179.5 250.55 L180 250.33 L180.5 250.4 L181 250.43 L181.5 250.5 L182 251 L182.5 250.95 L183 251.27 L183.5 251.37 L184 251.4 L184.5 251.17 L185 250.95 L185.5 251.09 L186 250.97 L186.5 250.94 L187 250.71 L187.5 250.76 L188 250.68 L188.5 250.53 L189 250.53 L189.5 250.61 L190 250.7 L190.5 250.59 L191 250.49 L191.5 250.43 L192 250.2 L192.5 249.84 L193 249.94 L193.5 249.98 L194 249.9 L194.5 249.93 L195 249.65 L195.5 249.63 L196 249.35 L196.5 249.1 L197 248.74 L197.5 248.52 L198 248.53 L198.5 248.44 L199 248.1 L199.5 247.96 L200 248.08 L200.5 247.95 L201 247.96 L201.5 247.6 L202 247.78 L202.5 247.55 L203 247.23 L203.5 246.99 L204 246.93 L204.5 246.92 L205 246.81 L205.5 246.95 L206 247.05 L206.5 246.84 L207 246.53 L207.5 246.41 L208 246.01 L208.5 245.8 L209 245.55 L209.5 245.62 L210 245.8 L210.5 245.88 L211 246.09 L211.5 246.28 L212 246.36 L212.5 246.39 L213 246.22 L213.5 246.04 L214 245.96 L214.5 245.79 L215 245.91 L215.5 246.1 L216 246.24 L216.5 246.42 L217 246.58 L217.5 246.71 L218 246.64 L218.5 246.3 L219 246.47 L219.5 246.54 L220 246.22 L220.5 246.33 L221 246.42 L221.5 246.71 L222 246.61 L222.5 246.51 L223 246.65 L223.5 246.58 L224 246.82 L224.5 246.77 L225 246.61 L225.5 246.77 L226 247.3 L226.5 247.33 L227 247.43 L227.5 247.65 L228 247.96 L228.5 248.22 L229 247.88 L229.5 248.06 L230 247.92 L230.5 248.02 L231 248.02 L231.5 247.9 L232 248.18 L232.5 248.2 L233 248.31 L233.5 248.19 L234 248.4 L234.5 248.52 L235 248.7 L235.5 248.56 L236 248.48 L236.5 248.59 L237 248.6 L237.5 248.47 L238 248.15 L238.5 248.65 L239 248.75 L239.5 248.77 L240 248.5 L240.5 248.83 L241 249.02 L241.5 248.72 L242 248.69 L242.5 248.67 L243 248.85 L243.5 248.61 L244 248.44 L244.5 248.68 L245 248.58 L245.5 248.77 L246 248.82 L246.5 248.6 L247 248.85 L247.5 248.7 L248 248.72 L248.5 248.82 L249 248.89 L249.5 248.78 L250 248.79 L250.5 248.65 L251 248.53 L251.5 248.34 L252 247.98 L252.5 248.22 L253 248.09 L253.5 248.12 L254 248.19 L254.5 247.74 L255 247.87 L255.5 248.07 L256 248.2 L256.5 248.45 L257 248.63 L257.5 248.97 L258 248.87 L258.5 248.32 L259 248.02 L259.5 247.67 L260 247.45 L260.5 247.39 L261 247.53 L261.5 247.75 L262 247.93 L262.5 248.04 L263 248.25 L263.5 248.36 L264 248.43 L264.5 248.43 L265 248.18 L265.5 248.11 L266 248.12 L266.5 247.62 L267 247.52 L267.5 247.45 L268 247.6 L268.5 247.61 L269 247.34 L269.5 247.48 L270 247.25 L270.5 247.33 L271 247 L271.5 246.89 L272 246.79 L272.5 246.75 L273 246.57 L273.5 246.2 L274 246.36 L274.5 246.32 L275 246.28 L275.5 246.29 L276 246.52 L276.5 246.71 L277 246.63 L277.5 246.55 L278 246.67 L278.5 246.62 L279 246.31 L279.5 246.36 L280 246.36 L280.5 246.21 L281 246.11 L281.5 246.15 L282 246.32 L282.5 246.63 L283 246.55 L283.5 246.65 L284 246.53 L284.5 246.39 L285 245.94 L285.5 245.43 L286 245.38 L286.5 245.22 L287 245.29 L287.5 245.44 L288 246 L288.5 246.38 L289 246.43 L289.5 246.46 L290 246.29 L290.5 246.41 L291 246.16 L291.5 245.84 L292 245.93 L292.5 246.08 L293 246.26 L293.5 246.11 L294 245.93 L294.5 245.9 L295 245.88 L295.5 245.68 L296 245.44 L296.5 245.48 L297 245.71 L297.5 245.8 L298 245.45 L298.5 245.62 L299 245.7 L299.5 245.73 L300 246.01 L300.5 245.93 L301 246.34 L301.5 246.24 L302 246.36 L302.5 246.33 L303 246.02 L303.5 246.29 L304 246.24 L304.5 246.21 L305 246.09 L305.5 245.99 L306 245.81 L306.5 245.81 L307 245.74 L307.5 245.87 L308 246.09 L308.5 246.14 L309 246.65 L309.5 246.71 L310 246.9 L310.5 247.09 L311 247.26 L311.5 247.43 L312 247.28 L312.5 247.28 L313 247.25 L313.5 247.3 L314 247.42 L314.5 247.68 L315 247.74 L315.5 247.78 L316 247.59 L316.5 247.45 L317 247.33 L317.5 247.01 L318 246.9 L318.5 246.67 L319 246.97 L319.5 246.92 L320 246.99 L320.5 247.24 L321 247.13 L321.5 247.33 L322 247.38 L322.5 247.43 L323 247.43 L323.5 247.25 L324 247.62 L324.5 247.68 L325 247.66 L325.5 247.48 L326 247.53 L326.5 247.84 L327 247.63 L327.5 247.9 L328 247.79 L328.5 247.99 L329 247.63 L329.5 247.48 L330 247.61 L330.5 247.04 L331 246.92 L331.5 246.68 L332 246.6 L332.5 246.08 L333 245.92 L333.5 245.86 L334 245.95 L334.5 246.19 L335 246.21 L335.5 246.35 L336 246.39 L336.5 246.23 L337 245.98 L337.5 245.74 L338 245.51 L338.5 245.16 L339 244.75 L339.5 244.48 L340 244.29 L340.5 244.16 L341 244.18 L341.5 244.32 L342 244.63 L342.5 244.71 L343 244.69 L343.5 244.79 L344 244.63 L344.5 244.61 L345 244.41 L345.5 244.44 L346 244.59 L346.5 244.39 L347 244.41 L347.5 244.17 L348 244.01 L348.5 243.78 L349 243.57 L349.5 243.79 L350 243.9 L350.5 244.1 L351 244.2 L351.5 244.51 L352 244.39 L352.5 244.21 L353 243.9 L353.5 244.09 L354 244.31 L354.5 244.18 L355 244.25 L355.5 244.37 L356 244.48 L356.5 244.33 L357 244.37 L357.5 244.23 L358 244.27 L358.5 244.43 L359 244.81 L359.5 244.81 L360 244.6 L360.5 244.88 L361 245.06 L361.5 244.89 L362 244.72 L362.5 244.62 L363 244.87 L363.5 244.69 L364 244.87 L364.5 244.81 L365 244.72 L365.5 244.56 L366 244.28 L366.5 244.67 L367 244.53 L367.5 244.8 L368 244.93 L368.5 245.3 L369 245.27 L369.5 245.3 L370 245.36 L370.5 245.26 L371 245.62 L371.5 245.88 L372 246.08 L372.5 246.28 L373 246.44 L373.5 246.78 L374 246.76 L374.5 246.6 L375 246.64 L375.5 246.68 L376 246.57 L376.5 246.46 L377 246.48 L377.5 246.24 L378 246.43 L378.5 246.21 L379 246.31 L379.5 246.42 L380 246.37 L380.5 246.69 L381 246.55 L381.5 246.54 L382 246.57 L382.5 246.46 L383 246.34 L383.5 246.51 L384 246.85 L384.5 246.77 L385 246.77 L385.5 246.97 L386 246.79 L386.5 246.76 L387 246.56 L387.5 246.89 L388 247.1 L388.5 247.17 L389 247.33 L389.5 247.31 L390 247.33 L390.5 247.34 L391 247.03 L391.5 246.74 L392 247.04 L392.5 247.12 L393 247.36 L393.5 247.07 L394 247.47 L394.5 247.58 L395 247.47 L395.5 247.3 L396 247.18 L396.5 247.59 L397 247.32 L397.5 247.47 L398 247.56 L398.5 247.53 L399 247.59 L399.5 247.35 L400 247.43 L400.5 247.36 L401 247.38 L401.5 247.39 L402 247.24 L402.5 247.53 L403 247.62 L403.5 247.68 L404 247.67 L404.5 247.91 L405 248.15 L405.5 247.98 L406 248.08 L406.5 247.93 L407 247.94 L407.5 247.66 L408 247.42 L408.5 247.87 L409 247.64 L409.5 247.94 L410 247.99 L410.5 248.19 L411 247.97 L411.5 247.53 L412 247.41 L412.5 247.1 L413 246.92 L413.5 246.79 L414 247.28 L414.5 247.45 L415 247.37 L415.5 247.36 L416 247.31 L416.5 247.34 L417 246.82 L417.5 246.31 L418 246.46 L418.5 246.33 L419 246.51 L419.5 246.38 L420 246.56 L420.5 246.63 L421 246.67 L421.5 246.87 L422 246.63 L422.5 246.53 L423 246.51 L423.5 246.51 L424 246.47 L424.5 246.25 L425 246.22 L425.5 246.33 L426 246.08 L426.5 245.83 L427 245.7 L427.5 245.6 L428 245.61 L428.5 245.55 L429 245.65 L429.5 245.68 L430 245.77 L430.5 245.42 L431 245.17 L431.5 244.86 L432 245.05 L432.5 245.06 L433 244.79 L433.5 245.17 L434 245.42 L434.5 245.7 L435 245.39 L435.5 245.44 L436 245.3 L436.5 245.23 L437 244.99 L437.5 244.53 L438 244.55 L438.5 244.48 L439 244.71 L439.5 244.92 L440 245.13 L440.5 245.57 L441 245.92 L441.5 246.13 L442 246.32 L442.5 246.46 L443 246.79 L443.5 247.11 L444 246.89 L444.5 247.19 L445 247.52 L445.5 247.9 L446 247.92 L446.5 248.26 L447 248.79 L447.5 249.06 L448 249 L448.5 249.12 L449 249.48 L449.5 249.2 L450 249.18 L450.5 249.05 L451 249.06 L451.5 249.19 L452 249.41 L452.5 249.86 L453 249.89 L453.5 250.03 L454 250.51 L454.5 250.57 L455 250.6 L455.5 250.68 L456 251.02 L456.5 251.22 L457 251.12 L457.5 251.05 L458 251.12 L458.5 251.14 L459 251.27 L459.5 251.67 L460 251.79 L460.5 251.58 L461 251.4 L461.5 251.58 L462 251.48 L462.5 251.13 L463 250.97 L463.5 251.42 L464 251.62 L464.5 251.58 L465 251.7 L465.5 251.93 L466 252.19 L466.5 251.95 L467 251.98 L467.5 251.66 L468 251.37 L468.5 251.03 L469 250.72 L469.5 250.76 L470 250.87 L470.5 251.04 L471 251.38 L471.5 251.53 L472 251.47 L472.5 251.52 L473 251.56 L473.5 251.75 L474 251.53 L474.5 251.5 L475 251.94 L475.5 252.12 L476 251.89 L476.5 251.92 L477 251.97 L477.5 251.89 L478 251.54 L478.5 251.21 L479 251.59 L479.5 251.48 L480 251.73 L480.5 251.92 L481 252.17 L481.5 252.6 L482 252.43 L482.5 252.34 L483 252.22 L483.5 252.46 L484 252.87 L484.5 252.91 L485 253.05 L485.5 253.46 L486 253.8 L486.5 253.85 L487 253.63 L487.5 254.05 L488 254.15 L488.5 254.19 L489 254.51 L489.5 254.36 L490 254.52 L490.5 254.26 L491 254.55 L491.5 254.53 L492 254.28 L492.5 254.68 L493 254.79 L493.5 255.07 L494 254.95 L494.5 255.13 L495 255.13 L495.5 255.25 L496 255.4 L496.5 255.42 L497 255.56 L497.5 256.09 L498 256.19 L498.5 256.23 L499 256.34 L499.5 256.62 L500 256.93 L500.5 256.68 L501 257.04 L501.5 257.32 L502 257.77 L502.5 257.85 L503 257.79 L503.5 258.13 L504 258.23 L504.5 260.42 L505 264.04 L505.5 268.19 L506 271.95 L506.5 275.51 L507 279.44 L507.5 283.25 L508 286.6 L508.5 288.72 L509 291.46 L509.5 293.93 L510 296.02 L510.5 297.52 L511 299.07 L511.5 300.6 L512 302.13 L512.5 303.14 L513 304.13 L513.5 305.31 L514 306.39 L514.5 307.25 L515 307.54 L515.5 308.21 L516 309.16 L516.5 309.75 L517 310.15 L517.5 310.49 L518 311.11 L518.5 311.33 L519 311.39 L519.5 311.66 L520 311.84 L520.5 311.99 L521 312.13 L521.5 312.44 L522 312.85 L522.5 313.11 L523 313.43 L523.5 313.75 L524 313.82 L524.5 314.12 L525 313.78 L525.5 313.89 L526 313.96 L526.5 313.94 L527 313.96 L527.5 313.94 L528 314.37 L528.5 314.4 L529 314.65 L529.5 314.7 L530 314.95 L530.5 314.94 L531 314.92 L531.5 314.99 L532 314.82 L532.5 314.75 L533 314.76 L533.5 314.59 L534 314.66 L534.5 314.61 L535 314.61 L535.5 314.71 L536 314.56 L536.5 314.77 L537 314.85 L537.5 314.59 L538 314.71 L538.5 314.73 L539 315.05 L539.5 315.31 L540 315.24 L540.5 315.61 L541 315.56 L541.5 315.74 L542 315.83 L542.5 315.65 L543 315.8 L543.5 315.74 L544 315.91 L544.5 315.81 L545 315.73 L545.5 316.16 L546 316.4 L546.5 316.7 L547 316.81 L547.5 316.98 L548 317.21 L548.5 317.53 L549 317.73 L549.5 317.98 L550 318.16 L550.5 318.48 L551 318.85 L551.5 318.88 L552 319.06 L552.5 319.15 L553 319.56 L553.5 320.12 L554 320.5 L554.5 320.44 L555 320.36 L555.5 320.45 L556 320.2 L556.5 319.66 L557 319.06 L557.5 318.7 L558 318.62 L558.5 318.56 L559 318.63 L559.5 318.63 L560 318.25 L560.5 318.33 L561 318.18 L561.5 317.76 L562 317.64 L562.5 317.33 L563 317.47 L563.5 317.15 L564 316.96 L564.5 316.92 L565 316.33 L565.5 316.14 L566 316.07 L566.5 316.09 L567 316.02 L567.5 315.78 L568 315.82 L568.5 315.77 L569 315.86 L569.5 315.55 L570 315.58 L570.5 315.51 L571 315.46 L571.5 315.46 L572 315.41 L572.5 315.38 L573 315.16 L573.5 315.21 L574 315.24 L574.5 315.44 L575 315.14 L575.5 315.17 L576 314.99 L576.5 314.95 L577 315 L577.5 315.04 L578 315.35 L578.5 315.18 L579 315.28 L579.5 315.09 L580 315 L580.5 314.77 L581 314.6 L581.5 314.86 L582 314.77 L582.5 314.87 L583 314.73 L583.5 314.97 L584 314.72 L584.5 314.81 L585 315.01 L585.5 315.33 L586 315.32 L586.5 315.18 L587 315.45 L587.5 315.34 L588 315.39 L588.5 315.13 L589 315.59 L589.5 315.4 L590 315.35 L590.5 315.5 L591 315.54 L591.5 315.97 L592 315.88 L592.5 315.99 L593 316.18 L593.5 316.25 L594 316.06 L594.5 316.08 L595 316.38 L595.5 316.53 L596 317.46 L596.5 318.75 L597 320.46 L597.5 322.4 L598 322.77 L598.5 321.41 L599 316.3 L599.5 310.04 L600 303.68 L600.5 300.63 L601 297.49 L601.5 294.15 L602 291.04 L602.5 288.54 L603 286.26 L603.5 283.77 L604 282.36 L604.5 281.12 L605 279.6 L605.5 278.16 L606 277.22 L606.5 276.17 L607 275.18 L607.5 275.12 L608 275.08 L608.5 274.99 L609 274.98 L609.5 274.99 L610 275.18 L610.5 274.83 L611 274.54 L611.5 274.56 L612 274.46 L612.5 274.27 L613 274.02 L613.5 274.37 L614 274.98 L614.5 275.08 L615 274.89 L615.5 275.16 L616 275.25 L616.5 275.26 L617 274.93 L617.5 274.76 L618 274.94 L618.5 274.62 L619 274.66 L619.5 274.37 L620 274.16 L620.5 274.13 L621 273.89 L621.5 273.9 L622 273.93 L622.5 273.76 L623 273.84 L623.5 274.06 L624 274.02 L624.5 274.09 L625 274 L625.5 274.25 L626 273.98 L626.5 273.87 L627 273.83 L627.5 274.22 L628 274.27 L628.5 273.96 L629 274.07 L629.5 274.1 L630 274.18" stroke="#820e82" stroke-width="0.9" fill="none" stroke-linejoin="round"/>
<path d="M14 382.19 L14.5 382.17 L15 382.19 L15.5 382.2 L16 382.04 L16.5 381.91 L17 382.15 L17.5 382.06 L18 382.05 L18.5 382.03 L19 381.97 L19.5 381.92 L20 381.98 L20.5 382.01 L21 381.98 L21.5 382.04 L22 382.13 L22.5 382.16 L23 381.93 L23.5 381.87 L24 381.78 L24.5 381.72 L25 381.74 L25.5 381.78 L26 381.83 L26.5 381.8 L27 381.82 L27.5 381.9 L28 381.94 L28.5 381.99 L29 381.89 L29.5 381.88 L30 381.84 L30.5 381.89 L31 381.9 L31.5 381.8 L32 382 L32.5 382.06 L33 381.94 L33.5 381.83 L34 381.71 L34.5 381.62 L35 381.56 L35.5 381.48 L36 381.47 L36.5 381.38 L37 381.38 L37.5 381.54 L38 381.5 L38.5 381.56 L39 381.69 L39.5 381.9 L40 381.94 L40.5 381.95 L41 381.93 L41.5 381.86 L42 381.95 L42.5 381.79 L43 381.85 L43.5 381.86 L44 381.82 L44.5 381.88 L45 381.87 L45.5 381.92 L46 381.81 L46.5 381.89 L47 381.99 L47.5 382.26 L48 382.51 L48.5 382.46 L49 382.67 L49.5 382.55 L50 382.63 L50.5 382.29 L51 382.17 L51.5 382.59 L52 382.44 L52.5 382.34 L53 382.25 L53.5 382.34 L54 382.29 L54.5 381.97 L55 382.05 L55.5 382.28 L56 382.33 L56.5 382.42 L57 382.38 L57.5 382.37 L58 382.34 L58.5 382.18 L59 382.02 L59.5 381.94 L60 381.93 L60.5 381.93 L61 382.02 L61.5 382.23 L62 382.27 L62.5 382.29 L63 382.2 L63.5 382.3 L64 382.21 L64.5 381.88 L65 381.85 L65.5 381.84 L66 381.87 L66.5 381.76 L67 381.95 L67.5 381.99 L68 382.1 L68.5 381.78 L69 381.66 L69.5 381.69 L70 381.48 L70.5 381.67 L71 381.57 L71.5 381.62 L72 381.84 L72.5 381.64 L73 381.61 L73.5 381.6 L74 381.56 L74.5 381.74 L75 381.55 L75.5 381.79 L76 381.89 L76.5 381.61 L77 381.65 L77.5 381.58 L78 381.74 L78.5 381.71 L79 381.63 L79.5 381.83 L80 381.88 L80.5 381.95 L81 381.87 L81.5 381.72 L82 381.74 L82.5 381.67 L83 381.73 L83.5 381.7 L84 381.77 L84.5 381.96 L85 382.07 L85.5 382.19 L86 382.2 L86.5 382.35 L87 382.49 L87.5 382.42 L88 382.62 L88.5 382.69 L89 382.79 L89.5 382.92 L90 382.98 L90.5 383.1 L91 382.91 L91.5 382.85 L92 382.83 L92.5 382.82 L93 382.78 L93.5 383.03 L94 382.94 L94.5 383.27 L95 383.41 L95.5 383.43 L96 383.54 L96.5 383.36 L97 383.55 L97.5 383.26 L98 383.17 L98.5 383.07 L99 383.05 L99.5 383 L100 382.95 L100.5 383.05 L101 383.01 L101.5 383.12 L102 383.05 L102.5 382.96 L103 383.02 L103.5 382.9 L104 382.78 L104.5 382.62 L105 382.67 L105.5 382.65 L106 382.53 L106.5 382.79 L107 382.89 L107.5 383.01 L108 382.88 L108.5 383.08 L109 383.26 L109.5 383.03 L110 382.94 L110.5 382.73 L111 382.8 L111.5 382.59 L112 382.33 L112.5 382.4 L113 382.47 L113.5 382.65 L114 382.52 L114.5 382.49 L115 382.61 L115.5 382.68 L116 382.72 L116.5 382.64 L117 382.8 L117.5 382.96 L118 382.84 L118.5 382.92 L119 383.01 L119.5 383.07 L120 383.07 L120.5 382.92 L121 383.15 L121.5 383.2 L122 383.16 L122.5 383.22 L123 383.21 L123.5 383.36 L124 383.2 L124.5 383.06 L125 383.17 L125.5 383.15 L126 383.29 L126.5 383.21 L127 383.28 L127.5 383.24 L128 383.13 L128.5 383.24 L129 381.6 L129.5 378.14 L130 374.53 L130.5 371.61 L131 369.44 L131.5 367.19 L132 365.31 L132.5 364 L133 362.97 L133.5 361.84 L134 360.99 L134.5 360.26 L135 359.51 L135.5 358.53 L136 357.85 L136.5 357.36 L137 356.72 L137.5 356.18 L138 355.74 L138.5 355.39 L139 354.8 L139.5 354.53 L140 354.3 L140.5 353.98 L141 353.56 L141.5 353.39 L142 353.14 L142.5 352.81 L143 352.47 L143.5 352.05 L144 351.9 L144.5 351.65 L145 351.39 L145.5 351.11 L146 351.11 L146.5 351.08 L147 351.11 L147.5 351.09 L148 351.09 L148.5 351.03 L149 350.93 L149.5 350.77 L150 350.56 L150.5 350.38 L151 350.24 L151.5 350.16 L152 349.89 L152.5 350 L153 349.8 L153.5 349.69 L154 349.48 L154.5 349.37 L155 349.14 L155.5 348.84 L156 348.56 L156.5 348.47 L157 348.7 L157.5 348.72 L158 348.72 L158.5 348.71 L159 349.02 L159.5 349.05 L160 348.81 L160.5 348.77 L161 348.73 L161.5 348.7 L162 348.56 L162.5 348.56 L163 348.65 L163.5 348.84 L164 349.15 L164.5 349.28 L165 349.44 L165.5 349.52 L166 349.66 L166.5 349.5 L167 349.38 L167.5 349.44 L168 349.38 L168.5 349.34 L169 349.35 L169.5 349.44 L170 349.39 L170.5 349.33 L171 349.48 L171.5 349.45 L172 349.55 L172.5 349.73 L173 349.88 L173.5 350.07 L174 350.09 L174.5 350.28 L175 350.18 L175.5 350.07 L176 350.18 L176.5 350.16 L177 350.17 L177.5 350.35 L178 350.57 L178.5 350.63 L179 350.7 L179.5 350.65 L180 350.5 L180.5 350.37 L181 350.41 L181.5 350.47 L182 350.46 L182.5 350.58 L183 350.74 L183.5 350.93 L184 350.84 L184.5 350.8 L185 350.83 L185.5 350.71 L186 350.86 L186.5 350.88 L187 350.94 L187.5 350.88 L188 350.96 L188.5 350.96 L189 350.83 L189.5 350.69 L190 350.73 L190.5 350.64 L191 350.58 L191.5 350.68 L192 350.66 L192.5 350.49 L193 350.45 L193.5 350.3 L194 350.05 L194.5 350.05 L195 350.04 L195.5 350.06 L196 349.84 L196.5 349.87 L197 349.95 L197.5 349.64 L198 349.48 L198.5 349.49 L199 349.41 L199.5 349.43 L200 349.39 L200.5 349.26 L201 349.19 L201.5 349.17 L202 349.1 L202.5 349.04 L203 348.91 L203.5 348.86 L204 348.79 L204.5 348.66 L205 348.61 L205.5 348.74 L206 348.52 L206.5 348.64 L207 348.63 L207.5 348.6 L208 348.54 L208.5 348.55 L209 348.72 L209.5 348.72 L210 348.71 L210.5 348.65 L211 348.75 L211.5 348.59 L212 348.58 L212.5 348.69 L213 348.75 L213.5 348.74 L214 348.75 L214.5 348.79 L215 348.77 L215.5 348.71 L216 348.71 L216.5 348.66 L217 348.72 L217.5 348.63 L218 348.67 L218.5 348.59 L219 348.53 L219.5 348.72 L220 348.69 L220.5 348.94 L221 348.98 L221.5 349.11 L222 349.15 L222.5 349.28 L223 349.27 L223.5 349.1 L224 348.98 L224.5 349.06 L225 349.21 L225.5 349.05 L226 348.99 L226.5 349.02 L227 349.19 L227.5 349.15 L228 349.18 L228.5 349.3 L229 349.48 L229.5 349.53 L230 349.34 L230.5 349.4 L231 349.26 L231.5 349.23 L232 349.34 L232.5 349.26 L233 349.48 L233.5 349.43 L234 349.44 L234.5 349.35 L235 349.38 L235.5 349.49 L236 349.51 L236.5 349.59 L237 349.68 L237.5 349.88 L238 349.62 L238.5 349.73 L239 349.92 L239.5 349.72 L240 349.53 L240.5 349.47 L241 349.77 L241.5 349.87 L242 349.61 L242.5 349.59 L243 349.58 L243.5 349.69 L244 349.72 L244.5 349.61 L245 349.75 L245.5 349.8 L246 350.04 L246.5 349.86 L247 349.71 L247.5 349.59 L248 349.51 L248.5 349.61 L249 349.63 L249.5 349.55 L250 349.74 L250.5 349.95 L251 350.01 L251.5 350.06 L252 349.93 L252.5 350.11 L253 350.07 L253.5 349.83 L254 349.75 L254.5 349.61 L255 349.71 L255.5 349.67 L256 349.4 L256.5 349.5 L257 349.32 L257.5 349.45 L258 349.35 L258.5 349.36 L259 349.41 L259.5 349.44 L260 349.75 L260.5 349.63 L261 349.6 L261.5 349.52 L262 349.54 L262.5 349.56 L263 349.35 L263.5 349.38 L264 349.54 L264.5 349.53 L265 349.52 L265.5 349.45 L266 349.56 L266.5 349.6 L267 349.51 L267.5 349.34 L268 349.32 L268.5 349.42 L269 349.26 L269.5 349.2 L270 349.12 L270.5 349.25 L271 349.32 L271.5 349.19 L272 349.23 L272.5 349.09 L273 349.21 L273.5 349.11 L274 348.96 L274.5 348.91 L275 348.8 L275.5 348.8 L276 348.65 L276.5 348.71 L277 348.67 L277.5 348.63 L278 348.72 L278.5 348.63 L279 348.59 L279.5 348.64 L280 348.65 L280.5 348.68 L281 348.74 L281.5 348.97 L282 348.85 L282.5 348.79 L283 348.68 L283.5 348.73 L284 348.56 L284.5 348.34 L285 348.37 L285.5 348.4 L286 348.57 L286.5 348.65 L287 348.7 L287.5 348.68 L288 348.74 L288.5 348.65 L289 348.54 L289.5 348.38 L290 348.44 L290.5 348.51 L291 348.38 L291.5 348.47 L292 348.52 L292.5 348.35 L293 348.32 L293.5 348.39 L294 348.52 L294.5 348.4 L295 348.36 L295.5 348.41 L296 348.44 L296.5 348.28 L297 348.39 L297.5 348.24 L298 348.08 L298.5 348.32 L299 348.48 L299.5 348.6 L300 348.6 L300.5 348.85 L301 348.93 L301.5 348.87 L302 348.69 L302.5 348.75 L303 348.68 L303.5 348.58 L304 348.7 L304.5 348.53 L305 348.7 L305.5 348.7 L306 348.71 L306.5 348.91 L307 348.98 L307.5 349.09 L308 348.9 L308.5 348.76 L309 348.7 L309.5 348.55 L310 348.49 L310.5 348.38 L311 348.5 L311.5 348.74 L312 348.71 L312.5 348.72 L313 348.78 L313.5 348.98 L314 348.96 L314.5 348.91 L315 348.96 L315.5 349.17 L316 349.12 L316.5 349.05 L317 349.08 L317.5 349.03 L318 349.13 L318.5 349 L319 349.11 L319.5 349.19 L320 349.15 L320.5 349.2 L321 349.35 L321.5 349.27 L322 349.2 L322.5 349.31 L323 349.35 L323.5 349.26 L324 349.12 L324.5 349.46 L325 349.51 L325.5 349.38 L326 349.39 L326.5 349.56 L327 349.6 L327.5 349.49 L328 349.5 L328.5 349.5 L329 349.53 L329.5 349.36 L330 349.45 L330.5 349.33 L331 349.26 L331.5 349.27 L332 349.24 L332.5 349.3 L333 349.11 L333.5 349.08 L334 349.04 L334.5 349.03 L335 348.86 L335.5 348.76 L336 348.52 L336.5 348.39 L337 348.31 L337.5 348.07 L338 348.19 L338.5 348.03 L339 348.01 L339.5 347.93 L340 347.86 L340.5 347.9 L341 347.79 L341.5 347.74 L342 347.96 L342.5 348.08 L343 348.11 L343.5 348.04 L344 347.92 L344.5 347.92 L345 347.6 L345.5 347.44 L346 347.36 L346.5 347.43 L347 347.41 L347.5 347.4 L348 347.48 L348.5 347.43 L349 347.53 L349.5 347.44 L350 347.47 L350.5 347.49 L351 347.54 L351.5 347.64 L352 347.65 L352.5 347.74 L353 347.81 L353.5 347.96 L354 348.06 L354.5 348.09 L355 348.05 L355.5 347.94 L356 347.9 L356.5 347.91 L357 347.64 L357.5 347.64 L358 347.6 L358.5 347.74 L359 347.82 L359.5 347.7 L360 348.08 L360.5 348.05 L361 348.15 L361.5 348.22 L362 348.22 L362.5 348.25 L363 348.2 L363.5 348.16 L364 348.16 L364.5 347.98 L365 348.14 L365.5 348.3 L366 348.36 L366.5 348.59 L367 348.61 L367.5 348.68 L368 348.51 L368.5 348.34 L369 348.25 L369.5 348.17 L370 348.28 L370.5 348.35 L371 348.44 L371.5 348.46 L372 348.52 L372.5 348.5 L373 348.43 L373.5 348.47 L374 348.43 L374.5 348.53 L375 348.6 L375.5 348.59 L376 348.43 L376.5 348.55 L377 348.79 L377.5 348.74 L378 348.79 L378.5 348.97 L379 349.16 L379.5 348.97 L380 348.98 L380.5 349.08 L381 348.89 L381.5 348.88 L382 348.94 L382.5 349 L383 349.01 L383.5 349.03 L384 349.14 L384.5 349.13 L385 349.29 L385.5 349.55 L386 349.38 L386.5 349.3 L387 349.41 L387.5 349.54 L388 349.32 L388.5 349.03 L389 349.1 L389.5 349.23 L390 349.14 L390.5 349.01 L391 349.05 L391.5 349.16 L392 349.15 L392.5 349.1 L393 349.25 L393.5 349.22 L394 349.26 L394.5 349.23 L395 349.18 L395.5 349.1 L396 348.92 L396.5 348.98 L397 348.85 L397.5 348.87 L398 349.03 L398.5 349.26 L399 349.26 L399.5 349.3 L400 349.47 L400.5 349.58 L401 349.42 L401.5 349.22 L402 349.37 L402.5 349.28 L403 349.03 L403.5 348.92 L404 348.99 L404.5 349.09 L405 348.99 L405.5 349.12 L406 349.42 L406.5 349.5 L407 349.68 L407.5 349.71 L408 349.58 L408.5 349.54 L409 349.44 L409.5 349.25 L410 349.08 L410.5 348.98 L411 349.13 L411.5 349.04 L412 348.96 L412.5 349.03 L413 349.02 L413.5 349.02 L414 348.92 L414.5 349.08 L415 349.24 L415.5 349.05 L416 349.06 L416.5 349.13 L417 349.29 L417.5 349.21 L418 349.1 L418.5 349.16 L419 349.1 L419.5 348.93 L420 348.62 L420.5 348.43 L421 348.33 L421.5 348.32 L422 348.18 L422.5 348.19 L423 348.33 L423.5 348.26 L424 348.36 L424.5 348.49 L425 348.46 L425.5 348.52 L426 348.42 L426.5 348.47 L427 348.31 L427.5 348.27 L428 348.17 L428.5 348.26 L429 348.31 L429.5 348.32 L430 348.34 L430.5 348.18 L431 348.19 L431.5 348.06 L432 347.99 L432.5 348.02 L433 348.19 L433.5 348.27 L434 348.42 L434.5 348.35 L435 348.31 L435.5 348.27 L436 348.25 L436.5 348.29 L437 348.25 L437.5 348.21 L438 348.26 L438.5 348.36 L439 348.21 L439.5 348.14 L440 348.14 L440.5 348.31 L441 348.44 L441.5 348.23 L442 348.31 L442.5 348.44 L443 348.36 L443.5 348.27 L444 348.28 L444.5 348.46 L445 348.58 L445.5 348.75 L446 349.06 L446.5 349.28 L447 349.47 L447.5 349.56 L448 349.49 L448.5 349.62 L449 349.85 L449.5 349.94 L450 350.06 L450.5 350.32 L451 350.52 L451.5 350.6 L452 350.69 L452.5 350.76 L453 350.8 L453.5 350.83 L454 350.88 L454.5 350.99 L455 350.88 L455.5 351.07 L456 351.1 L456.5 351.07 L457 351.17 L457.5 351.06 L458 351.33 L458.5 351.18 L459 351.1 L459.5 351.25 L460 351.32 L460.5 351.44 L461 351.17 L461.5 351.15 L462 351.19 L462.5 351.1 L463 351.11 L463.5 351.12 L464 351.24 L464.5 351.37 L465 351.25 L465.5 351.11 L466 350.97 L466.5 350.89 L467 350.79 L467.5 350.7 L468 350.83 L468.5 350.9 L469 350.95 L469.5 351.04 L470 351.13 L470.5 351.15 L471 351.17 L471.5 351.27 L472 351.3 L472.5 351.29 L473 351.16 L473.5 351.28 L474 351.2 L474.5 351.22 L475 351.1 L475.5 351.13 L476 351.32 L476.5 351.19 L477 351.34 L477.5 351.26 L478 351.49 L478.5 351.4 L479 351.31 L479.5 351.29 L480 351.24 L480.5 351.33 L481 351.3 L481.5 351.32 L482 351.38 L482.5 351.43 L483 351.44 L483.5 351.44 L484 351.48 L484.5 351.65 L485 351.7 L485.5 351.75 L486 351.99 L486.5 352.06 L487 352.06 L487.5 352.06 L488 352.16 L488.5 352.37 L489 352.34 L489.5 352.31 L490 352.37 L490.5 352.47 L491 352.51 L491.5 352.58 L492 352.51 L492.5 352.79 L493 352.92 L493.5 352.81 L494 352.99 L494.5 352.92 L495 353.09 L495.5 353.05 L496 353.12 L496.5 353.37 L497 353.2 L497.5 353.32 L498 353.3 L498.5 353.31 L499 353.36 L499.5 353.6 L500 353.83 L500.5 353.85 L501 354.21 L501.5 354.39 L502 354.45 L502.5 354.44 L503 354.6 L503.5 354.82 L504 354.56 L504.5 355.75 L505 357.6 L505.5 359.34 L506 361.16 L506.5 362.98 L507 364.96 L507.5 366.57 L508 368.19 L508.5 369.23 L509 370.32 L509.5 371.35 L510 372.4 L510.5 373.19 L511 373.94 L511.5 374.72 L512 375.54 L512.5 376.06 L513 376.57 L513.5 377.03 L514 377.62 L514.5 378.07 L515 378.28 L515.5 378.42 L516 378.73 L516.5 379.18 L517 379.31 L517.5 379.4 L518 379.61 L518.5 379.94 L519 379.93 L519.5 379.94 L520 379.99 L520.5 379.89 L521 379.97 L521.5 379.98 L522 380.19 L522.5 380.27 L523 380.37 L523.5 380.64 L524 380.61 L524.5 380.57 L525 380.67 L525.5 380.79 L526 380.93 L526.5 380.85 L527 381.12 L527.5 381.34 L528 381.37 L528.5 381.29 L529 381.34 L529.5 381.58 L530 381.48 L530.5 381.46 L531 381.49 L531.5 381.65 L532 381.66 L532.5 381.63 L533 381.56 L533.5 381.5 L534 381.36 L534.5 381.38 L535 381.4 L535.5 381.4 L536 381.66 L536.5 381.64 L537 381.89 L537.5 381.76 L538 381.57 L538.5 381.54 L539 381.39 L539.5 381.47 L540 381.38 L540.5 381.51 L541 381.74 L541.5 381.75 L542 381.74 L542.5 381.85 L543 381.98 L543.5 382.06 L544 382.08 L544.5 382.03 L545 382.2 L545.5 382.21 L546 382.31 L546.5 382.47 L547 382.52 L547.5 382.7 L548 382.74 L548.5 382.95 L549 383.03 L549.5 382.93 L550 383.06 L550.5 383.15 L551 383.22 L551.5 383.35 L552 383.38 L552.5 383.38 L553 383.36 L553.5 383.61 L554 383.57 L554.5 383.52 L555 383.48 L555.5 383.49 L556 383.47 L556.5 383.37 L557 383.56 L557.5 383.29 L558 383.19 L558.5 383.24 L559 383.28 L559.5 383.35 L560 383.3 L560.5 383.38 L561 383.23 L561.5 383.12 L562 382.91 L562.5 382.63 L563 382.39 L563.5 382.29 L564 382.36 L564.5 382.3 L565 382.4 L565.5 382.46 L566 382.35 L566.5 382.22 L567 382.08 L567.5 381.89 L568 381.78 L568.5 381.66 L569 381.73 L569.5 381.95 L570 382.04 L570.5 382.26 L571 382.22 L571.5 382.13 L572 381.91 L572.5 381.7 L573 381.61 L573.5 381.43 L574 381.34 L574.5 381.38 L575 381.68 L575.5 381.66 L576 381.61 L576.5 381.62 L577 381.65 L577.5 381.54 L578 381.41 L578.5 381.35 L579 381.46 L579.5 381.42 L580 381.32 L580.5 381.43 L581 381.44 L581.5 381.42 L582 381.35 L582.5 381.44 L583 381.65 L583.5 381.55 L584 381.37 L584.5 381.48 L585 381.53 L585.5 381.6 L586 381.47 L586.5 381.41 L587 381.4 L587.5 381.59 L588 381.55 L588.5 381.48 L589 381.55 L589.5 381.74 L590 381.87 L590.5 381.66 L591 381.68 L591.5 381.81 L592 382 L592.5 382.12 L593 382.3 L593.5 382.29 L594 382.29 L594.5 382.28 L595 382.12 L595.5 382.04 L596 382.6 L596.5 383.3 L597 383.99 L597.5 384.84 L598 385.14 L598.5 384.45 L599 381.84 L599.5 378.94 L600 375.79 L600.5 374.51 L601 373.03 L601.5 371.3 L602 369.79 L602.5 368.58 L603 367.63 L603.5 366.3 L604 365.66 L604.5 365.25 L605 364.57 L605.5 364.05 L606 363.51 L606.5 363.09 L607 362.58 L607.5 362.6 L608 362.51 L608.5 362.2 L609 362.18 L609.5 362.22 L610 362.23 L610.5 362.11 L611 362.02 L611.5 362.15 L612 362.28 L612.5 362.43 L613 362.58 L613.5 362.47 L614 362.64 L614.5 362.56 L615 362.55 L615.5 362.48 L616 362.37 L616.5 362.21 L617 362.14 L617.5 362.2 L618 362.09 L618.5 362.05 L619 362 L619.5 362.18 L620 362.18 L620.5 362.1 L621 362.19 L621.5 362.07 L622 362.08 L622.5 362.13 L623 362.18 L623.5 362.21 L624 362.14 L624.5 362.14 L625 362.02 L625.5 361.94 L626 362.03 L626.5 362.04 L627 362.09 L627.5 362.17 L628 362.4 L628.5 362.44 L629 362.32 L629.5 362.32 L630 362.46" stroke="#7c087c" stroke-width="0.6" fill="none" stroke-linejoin="round"/>
<g fill="#6c086c">
<path d="M458.4 150 L458.8 57.1 L461.3 57.1 L461.5 76 L462.3 77 L462.4 53.5 L466 53.5 L466.1 79 L467 80.5 L468 78.5 L469 81.5 L469.8 80 L469.9 57.1 L472.5 57.1 L472.6 78 L473.3 80 L474 76.5 L474.7 79.5 L475.4 77.5 L476.1 75 L476.9 78.5 L477.6 76 L478.3 79.5 L479 76 L479.8 78 L480.6 77 L480.9 156 L480.9 182.06 L480.6 181.2 L479.8 181.08 L479 182.38 L478.3 181.91 L477.6 181.99 L476.9 182.1 L476.1 181.07 L475.4 182.17 L474.7 182.27 L474 182.26 L473.3 181.49 L472.6 181.36 L472.5 181.05 L469.9 177.94 L469.8 179.48 L469 179.43 L468 177.82 L467 178.4 L466.1 178.29 L466 178.84 L462.4 182.34 L462.3 181.9 L461.5 181.79 L461.3 181.36 L458.8 182.34 L458.4 181.17Z M480.9 156.95 L481.25 155.42 L481.6 156.52 L481.95 155.48 L482.3 155 L482.65 155.1 L483 155.04 L483.35 154.73 L483.7 155.17 L484.05 156.93 L484.4 156.94 L484.75 156.83 L485.1 155.77 L485.45 156.93 L485.8 156.21 L486.15 155.52 L486.5 155.85 L486.85 75.1 L487.2 75.1 L487.55 75.1 L487.9 75.1 L488.25 75.1 L488.6 75.1 L488.95 75.1 L489.3 75.1 L489.65 75.1 L490 75.1 L490.35 157.25 L490.7 157.4 L491.05 157.78 L491.4 158.77 L491.75 158.95 L492.1 158.75 L492.45 157.11 L492.8 157.29 L493.15 157.08 L493.5 158.98 L493.85 158.82 L494.2 157.29 L494.55 156.74 L494.9 157.3 L495.25 156.64 L495.6 157.42 L495.95 156.6 L496.3 157.86 L496.65 157.64 L497 157.12 L497.35 156.93 L497.7 158.45 L498.05 157.07 L498.4 156.81 L498.75 157.79 L499.1 157.09 L499.45 158.3 L499.8 158 L500.15 156.76 L500.5 157.58 L500.85 156.73 L501.2 157.4 L501.55 158.67 L501.9 156.64 L502.25 157.74 L502.6 157.24 L502.95 158.6 L503.3 156.99 L503.65 158.03 L503.9 157 L503.9 182.4 L503.65 181.51 L503.3 181.95 L502.95 181.94 L502.6 181.72 L502.25 182.55 L501.9 182.59 L501.55 182.09 L501.2 182.51 L500.85 182.47 L500.5 182.37 L500.15 182.38 L499.8 181.74 L499.45 182.47 L499.1 182.23 L498.75 181.83 L498.4 182.23 L498.05 181.6 L497.7 182.35 L497.35 181.72 L497 182.19 L496.65 182.59 L496.3 181.72 L495.95 182.5 L495.6 181.67 L495.25 182.47 L494.9 182.67 L494.55 182.37 L494.2 182.58 L493.85 181.62 L493.5 182.7 L493.15 181.94 L492.8 181.81 L492.45 182.07 L492.1 182.3 L491.75 181.57 L491.4 181.64 L491.05 181.88 L490.7 181.7 L490.35 182.51 L490 181.69 L489.65 181.99 L489.3 181.82 L488.95 182.54 L488.6 181.67 L488.25 182.16 L487.9 182.36 L487.55 181.57 L487.2 181.77 L486.85 181.67 L486.5 178.15 L486.15 178.39 L485.8 177.94 L485.45 178.41 L485.1 177.52 L484.75 177.57 L484.4 178.44 L484.05 177.66 L483.7 177.44 L483.35 178.26 L483 178.21 L482.65 177.69 L482.3 177.98 L481.95 177.71 L481.6 177.53 L481.25 178.11 L480.9 178.21Z"/>
<path d="M458.5 250.37 L458.7 207.34 L459.5 208.28 L460.3 202.83 L461.1 206.34 L461.9 200.6 L462.7 203.94 L463.6 198.16 L465.2 197.28 L465.6 204.21 L466.2 207.37 L467 212.45 L467.8 209.53 L468.6 213.41 L469.4 211.69 L470.2 208.7 L470.9 200.92 L471.6 200.91 L472.2 205.43 L473 202.96 L473.8 204.35 L474.6 203.35 L475.4 207.6 L476.2 205.12 L477 206.59 L477.8 204.33 L478.6 206.61 L479.4 203.72 L480.2 206.21 L480.8 206.15 L481 249.68 L481 263.49 L480.8 259.42 L480.2 264.4 L479.4 262.89 L478.6 265.35 L477.8 261.08 L477 264.55 L476.2 260.22 L475.4 261.73 L474.6 263.13 L473.8 264.74 L473 259.75 L472.2 264.32 L471.6 261.56 L470.9 262.08 L470.2 259.01 L469.4 261.25 L468.6 261.38 L467.8 258.76 L467 265.47 L466.2 263.38 L465.6 260.8 L465.2 260.06 L463.6 263.56 L462.7 261.1 L461.9 260.6 L461.1 261.93 L460.3 260.27 L459.5 260.24 L458.7 264.59 L458.5 259.21Z M459.4 260 L458.9 269 L458.6 260Z M486.8 252 L487 207.6 L489.7 207.6 L489.9 252Z M500.1 255 L500.3 214.2 L501.4 214.2 L501.6 255Z M482.05 251.95 L482.05 259.57 L481.15 262.45 L481.15 251.95Z M483.8 252.38 L483.8 262.49 L482.9 262.41 L482.9 252.38Z M485.55 252.81 L485.55 259.43 L484.65 262.92 L484.65 252.81Z M487.3 253.24 L487.3 261.52 L486.4 262.16 L486.4 253.24Z M489.05 253.67 L489.05 262.02 L488.15 263.45 L488.15 253.67Z M490.8 254.09 L490.8 264.28 L489.9 261.3 L489.9 254.09Z M492.55 254.53 L492.55 265.38 L491.65 262.61 L491.65 254.53Z M494.3 255.04 L494.3 264.54 L493.4 263.22 L493.4 255.04Z M496.05 255.55 L496.05 262.69 L495.15 266.49 L495.15 255.55Z M497.8 256.06 L497.8 262.94 L496.9 266.58 L496.9 256.06Z M499.55 256.57 L499.55 263.21 L498.65 268.22 L498.65 256.57Z M501.3 257.08 L501.3 265.61 L500.4 267.56 L500.4 257.08Z M503.05 257.59 L503.05 266.26 L502.15 265.08 L502.15 257.59Z"/>
<path d="M457.9 343.6 L458.35 343.57 L458.8 342.6 L459.25 343.48 L459.7 341.86 L460.15 343.04 L460.6 342.02 L461.05 341.97 L461.5 341.89 L461.95 342.1 L462.4 341.9 L462.85 342.92 L463.3 342.89 L463.75 342.87 L464.2 342.61 L464.65 342.87 L465.1 342.33 L465.55 341.8 L466 342.68 L466.45 341.71 L466.9 343.3 L467.35 342.25 L467.8 341.8 L468.25 343.27 L468.7 342.07 L469.15 341.85 L469.6 342.69 L470.05 342.66 L470.5 343.6 L470.95 341.78 L471.4 342.98 L471.85 343.41 L472.3 341.81 L472.75 342.47 L473.2 342.83 L473.65 342.34 L474.1 343.1 L474.55 343.02 L475 342.58 L475.45 342.03 L475.9 342.87 L476.35 341.75 L476.8 342.58 L477.25 343.3 L477.7 342.84 L478.15 343.14 L478.6 342.49 L479.05 343.15 L479.5 342.77 L479.95 343.5 L480.4 343.01 L480.85 342.21 L480.85 396.61 L480.4 396.67 L479.95 394.92 L479.5 397.43 L479.05 397.75 L478.6 395.54 L478.15 397.72 L477.7 396.05 L477.25 395.09 L476.8 396.75 L476.35 397.32 L475.9 398.46 L475.45 395.8 L475 398 L474.55 394.98 L474.1 397.31 L473.65 395.58 L473.2 394.51 L472.75 399.03 L472.3 402.43 L471.85 398.59 L471.4 398.82 L470.95 398.76 L470.5 400.42 L470.05 401.47 L469.6 401.01 L469.15 391.76 L468.7 391.72 L468.25 393.45 L467.8 390.69 L467.35 392.14 L466.9 392.11 L466.45 390.68 L466 391.93 L465.55 392.08 L465.1 393.65 L464.65 391.07 L464.2 393.4 L463.75 390.75 L463.3 394.13 L462.85 395.29 L462.4 396.98 L461.95 398.15 L461.5 397.27 L461.05 396.21 L460.6 396.09 L460.15 395.69 L459.7 395.67 L459.25 396.92 L458.8 397.39 L458.35 397.25 L457.9 396.63Z M459.1 390 L459 471 L458 471 L457.9 390Z M480.8 342.63 L481.25 343.74 L481.7 343.12 L482.15 343.79 L482.6 343.66 L483.05 343.5 L483.5 342.81 L483.95 342.97 L484.4 343.21 L484.85 343.59 L485.3 342.94 L485.75 343.78 L486.2 342.63 L486.65 343.16 L487.1 342.54 L487.55 342.59 L488 342.81 L488.45 342.41 L488.9 343.31 L489.35 343.41 L489.8 343.04 L490.25 343.74 L490.7 343.32 L491.15 343.57 L491.6 342.57 L492.05 343 L492.5 342.49 L492.95 342.74 L493.4 343.92 L493.85 342.72 L494.3 343.52 L494.75 343.16 L495.2 343.68 L495.65 344.03 L496.1 343.97 L496.55 344.21 L497 344.23 L497.45 343.28 L497.9 344.29 L498.35 343.92 L498.8 343.11 L499.25 343.21 L499.7 343.56 L500.15 344.12 L500.6 342.86 L501.05 344.22 L501.5 343.86 L501.95 343.74 L502.4 343.44 L502.85 343.41 L503.3 343.46 L503.75 344.01 L503.75 356.55 L503.3 356.49 L502.85 356.42 L502.4 356.36 L501.95 356.3 L501.5 356.24 L501.05 356.17 L500.6 356.11 L500.15 356.05 L499.7 355.99 L499.25 355.92 L498.8 355.86 L498.35 355.8 L497.9 355.73 L497.45 355.67 L497 355.61 L496.55 355.55 L496.1 355.48 L495.65 355.42 L495.2 355.36 L494.75 355.3 L494.3 355.23 L493.85 355.17 L493.4 355.11 L492.95 355.04 L492.5 354.98 L492.05 354.92 L491.6 354.86 L491.15 354.81 L490.7 354.76 L490.25 354.71 L489.8 354.65 L489.35 354.6 L488.9 354.55 L488.45 354.5 L488 354.44 L487.55 354.39 L487.1 354.34 L486.65 354.28 L486.2 354.23 L485.75 354.18 L485.3 354.13 L484.85 354.07 L484.4 354.02 L483.95 353.97 L483.5 353.91 L483.05 353.86 L482.6 353.81 L482.15 353.76 L481.7 353.7 L481.25 353.65 L480.8 353.62Z M482.25 348 L482.25 389.64 L480.95 389.21 L480.95 348Z M484.3 348 L484.3 393.97 L483 394.8 L483 348Z M486.35 348 L486.35 394.81 L485.05 393.93 L485.05 348Z M488.4 348 L488.4 397.78 L487.1 397.15 L487.1 348Z M490.45 348 L490.45 398.17 L489.15 398.72 L489.15 348Z M492.5 348 L492.5 397.13 L491.2 397.27 L491.2 348Z M494.55 348 L494.55 399.83 L493.25 400.72 L493.25 348Z M496.6 348 L496.6 397.84 L495.3 398.27 L495.3 348Z M498.65 348 L498.65 403.57 L497.35 403.07 L497.35 348Z M500.7 348 L500.7 400.21 L499.4 400.4 L499.4 348Z M502.75 348 L502.75 402.08 L501.45 401.66 L501.45 348Z"/>
</g>
<path d="M500.2 160 L500.3 75.1 L501.9 75.1 L502 160Z" fill="#5a1a5a"/>
<path d="M466.1 81 L469.7 81 L469.7 178 L466.1 178Z M466.1 212 L469.9 212 L469.9 262 L466.1 262Z M463.4 355 L469.4 355 L469.4 392 L463.4 392Z M481.8 161 L482.6 161 L482.6 182.5 L481.8 182.5Z M483.8 161 L484.6 161 L484.6 182.5 L483.8 182.5Z M485.8 161 L486.6 161 L486.6 182.5 L485.8 182.5Z M487.8 161 L488.6 161 L488.6 182.5 L487.8 182.5Z M489.8 161 L490.6 161 L490.6 182.5 L489.8 182.5Z M491.8 161 L492.6 161 L492.6 182.5 L491.8 182.5Z M493.8 161 L494.6 161 L494.6 182.5 L493.8 182.5Z M495.8 161 L496.6 161 L496.6 182.5 L495.8 182.5Z M497.8 161 L498.6 161 L498.6 182.5 L497.8 182.5Z M499.8 161 L500.6 161 L500.6 182.5 L499.8 182.5Z M501.8 161 L502.6 161 L502.6 182.5 L501.8 182.5Z M459.6 84 L460.1 84 L460.1 181 L459.6 181Z M459.9 214 L460.4 214 L460.4 262 L459.9 262Z M460.2 356 L460.7 356 L460.7 392 L460.2 392Z M461.9 84 L462.4 84 L462.4 181 L461.9 181Z M462.2 214 L462.7 214 L462.7 262 L462.2 262Z M462.5 356 L463 356 L463 392 L462.5 392Z M464.2 84 L464.7 84 L464.7 181 L464.2 181Z M464.5 214 L465 214 L465 262 L464.5 262Z M464.8 356 L465.3 356 L465.3 392 L464.8 392Z M466.5 84 L467 84 L467 181 L466.5 181Z M466.8 214 L467.3 214 L467.3 262 L466.8 262Z M467.1 356 L467.6 356 L467.6 392 L467.1 392Z M468.8 84 L469.3 84 L469.3 181 L468.8 181Z M469.1 214 L469.6 214 L469.6 262 L469.1 262Z M469.4 356 L469.9 356 L469.9 392 L469.4 392Z M471.1 84 L471.6 84 L471.6 181 L471.1 181Z M471.4 214 L471.9 214 L471.9 262 L471.4 262Z M471.7 356 L472.2 356 L472.2 392 L471.7 392Z M473.4 84 L473.9 84 L473.9 181 L473.4 181Z M473.7 214 L474.2 214 L474.2 262 L473.7 262Z M474 356 L474.5 356 L474.5 392 L474 392Z M475.7 84 L476.2 84 L476.2 181 L475.7 181Z M476 214 L476.5 214 L476.5 262 L476 262Z M476.3 356 L476.8 356 L476.8 392 L476.3 392Z M478 84 L478.5 84 L478.5 181 L478 181Z M478.3 214 L478.8 214 L478.8 262 L478.3 262Z M478.6 356 L479.1 356 L479.1 392 L478.6 392Z M480.3 84 L480.8 84 L480.8 181 L480.3 181Z M480.6 214 L481.1 214 L481.1 262 L480.6 262Z M480.9 356 L481.4 356 L481.4 392 L480.9 392Z" fill="#363636" opacity="0.38"/>
<path d="M458.6 159.2 L503.6 159.2" stroke="#800080" stroke-width="1.2" fill="none"/>
<g fill="#740074">
<path d="M504.8 183.6 L504.8 151.8 L505.4 151.8 L505.4 183.6Z M504.2 183.6 L505.1 180.5 L506 183.6Z M508.3 183.6 L508.3 151.8 L508.9 151.8 L508.9 183.6Z M507.7 183.6 L508.6 180.5 L509.5 183.6Z M511.8 183.6 L511.8 151.8 L512.4 151.8 L512.4 183.6Z M511.2 183.6 L512.1 180.5 L513 183.6Z M515.3 183.6 L515.3 151.8 L515.9 151.8 L515.9 183.6Z M514.7 183.6 L515.6 180.5 L516.5 183.6Z M518.8 183.6 L518.8 151.8 L519.4 151.8 L519.4 183.6Z M518.2 183.6 L519.1 180.5 L520 183.6Z M522.3 183.6 L522.3 151.8 L522.9 151.8 L522.9 183.6Z M521.7 183.6 L522.6 180.5 L523.5 183.6Z M525.8 183.6 L525.8 151.8 L526.4 151.8 L526.4 183.6Z M525.2 183.6 L526.1 180.5 L527 183.6Z M529.3 183.6 L529.3 151.8 L529.9 151.8 L529.9 183.6Z M528.7 183.6 L529.6 180.5 L530.5 183.6Z M532.8 183.6 L532.8 151.8 L533.4 151.8 L533.4 183.6Z M532.2 183.6 L533.1 180.5 L534 183.6Z M536.3 183.6 L536.3 151.8 L536.9 151.8 L536.9 183.6Z M535.7 183.6 L536.6 180.5 L537.5 183.6Z M539.8 183.6 L539.8 151.8 L540.4 151.8 L540.4 183.6Z M539.2 183.6 L540.1 180.5 L541 183.6Z M543.3 183.6 L543.3 151.8 L543.9 151.8 L543.9 183.6Z M542.7 183.6 L543.6 180.5 L544.5 183.6Z M546.8 183.6 L546.8 151.8 L547.4 151.8 L547.4 183.6Z M546.2 183.6 L547.1 180.5 L548 183.6Z M503.9 183 L630.3 183 L630.3 184.1 L503.9 184.1Z"/>
<path d="M511.75 299.2 L511.8 291.95 L512.4 291.7 L512.45 299.2Z M512.45 306.2 L512.1 309.74 L511.75 306.2Z M515.25 305 L515.3 296.81 L515.9 297.5 L515.95 305Z M515.95 312 L515.6 315.81 L515.25 312Z M518.75 307.74 L518.8 299.99 L519.4 300.24 L519.45 307.74Z M519.45 314.74 L519.1 319.66 L518.75 314.74Z M522.25 309.37 L522.3 301.83 L522.9 301.87 L522.95 309.37Z M522.95 316.37 L522.6 319.96 L522.25 316.37Z M525.75 310.25 L525.8 302.32 L526.4 302.75 L526.45 310.25Z M526.45 317.25 L526.1 322.17 L525.75 317.25Z M529.25 311.02 L529.3 303.32 L529.9 303.52 L529.95 311.02Z M529.95 318.02 L529.6 322.13 L529.25 318.02Z M532.75 311.22 L532.8 304.8 L533.4 303.72 L533.45 311.22Z M533.45 318.22 L533.1 321.7 L532.75 318.22Z M536.25 311.42 L536.3 304.81 L536.9 303.92 L536.95 311.42Z M536.95 318.42 L536.6 321.62 L536.25 318.42Z M539.75 311.81 L539.8 303.58 L540.4 304.31 L540.45 311.81Z M540.45 318.81 L540.1 321.42 L539.75 318.81Z M543.25 312.3 L543.3 304.93 L543.9 304.8 L543.95 312.3Z M543.95 319.3 L543.6 323.99 L543.25 319.3Z M546.75 313.55 L546.8 305.56 L547.4 306.05 L547.45 313.55Z M547.45 320.55 L547.1 324.15 L546.75 320.55Z"/>
<path d="M505.4 357.63 L505.4 425 L504.8 425 L504.8 357.63Z M504.75 356.13 L505.1 351.2 L505.45 356.13Z M508.9 369.26 L508.9 440 L508.3 440 L508.3 369.26Z M508.25 367.76 L508.6 362.97 L508.95 367.76Z M512.4 375.65 L512.4 450 L511.8 450 L511.8 375.65Z M511.75 374.15 L512.1 369.66 L512.45 374.15Z M515.9 378.42 L515.9 455 L515.3 455 L515.3 378.42Z M515.25 376.92 L515.6 371.9 L515.95 376.92Z M519.4 379.73 L519.4 459 L518.8 459 L518.8 379.73Z M518.75 378.23 L519.1 373.59 L519.45 378.23Z M522.9 380.51 L522.9 461 L522.3 461 L522.3 380.51Z M522.25 379.01 L522.6 375.01 L522.95 379.01Z M526.4 380.93 L526.4 461.76 L525.8 461.76 L525.8 380.93Z M525.75 379.43 L526.1 374.05 L526.45 379.43Z M529.9 381.3 L529.9 461.37 L529.3 461.37 L529.3 381.3Z M529.25 379.8 L529.6 375.44 L529.95 379.8Z M533.4 381.4 L533.4 461.08 L532.8 461.08 L532.8 381.4Z M532.75 379.9 L533.1 375.17 L533.45 379.9Z M536.9 381.49 L536.9 461.9 L536.3 461.9 L536.3 381.49Z M536.25 379.99 L536.6 375.22 L536.95 379.99Z M540.4 381.68 L540.4 460.96 L539.8 460.96 L539.8 381.68Z M539.75 380.18 L540.1 376.43 L540.45 380.18Z M543.9 381.91 L543.9 460.66 L543.3 460.66 L543.3 381.91Z M543.25 380.41 L543.6 376.73 L543.95 380.41Z M547.4 382.51 L547.4 460.74 L546.8 460.74 L546.8 382.51Z M546.75 381.01 L547.1 376.62 L547.45 381.01Z"/>
</g>
<circle cx="375.4" cy="153.6" r="2.1" fill="#9c0c9c"/>
</g>
</svg>

<!-- labels -->
<div class="lbl" style="left:15.8px;top:50px;width:75.6px;background:#5fb6a4;color:#1b4240;-webkit-text-stroke:0.25px;letter-spacing:-0.196px">Main current - Ace</div>
<div class="lbl" style="left:16.2px;top:194.2px;width:81.8px;background:#6f6f6f;color:#f6f6f6;letter-spacing:-0.305px">Sense- voltage - Ace</div>
<div class="lbl" style="left:16.2px;top:337px;width:84.6px;background:#6f6f6f;color:#f6f6f6;letter-spacing:-0.288px">Sense+ voltage - Ace</div>

<!-- cursor tooltip -->
<div style="left:376px;top:86.4px;width:40.4px;height:20.3px;background:#6b6b6b"></div>
<div style="left:414.5px;top:86.4px;width:1.9px;height:20.3px;background:#8a008a"></div>
<div style="left:378.3px;top:87.4px;font-size:7px;color:#f4f4f4;line-height:9.6px;white-space:nowrap;-webkit-text-stroke:0.25px"><span style="letter-spacing:0.075px">132 s</span><br><span style="letter-spacing:0.026px">47.9 mA</span></div>

<!-- stat boxes -->
<div class="sb" style="left:521px;top:50px;width:150px"><div class="car" style="left:6.6px"></div><div class="sh" style="left:16.5px;letter-spacing:0.134px">MIN</div><div class="sh" style="left:49.7px;letter-spacing:-0.271px">AVG</div><div class="sh" style="left:83px;letter-spacing:0.028px">MAX</div><div class="sh" style="left:116px;letter-spacing:-0.271px">ENERGY</div><div class="sr"></div><div class="sq" style="left:6.1px"></div><div class="sv" style="left:16.5px;letter-spacing:0.097px">2.52 mA</div><div class="sv" style="left:49.7px;letter-spacing:0.097px">39.6 mA</div><div class="sv" style="left:83px;letter-spacing:0.104px">205 mA</div><div class="ss" style="left:53.4px;letter-spacing:0.579px">SELECTION</div></div>
<div class="sb" style="left:554.2px;top:194.2px;width:116.6px"><div class="car" style="left:6.6px"></div><div class="sh" style="left:16.5px;letter-spacing:0.134px">MIN</div><div class="sh" style="left:49.8px;letter-spacing:-0.271px">AVG</div><div class="sh" style="left:82.8px;letter-spacing:0.028px">MAX</div><div class="sr"></div><div class="sq" style="left:6.1px"></div><div class="sv" style="left:16.5px;letter-spacing:0.042px">-802 mV</div><div class="sv" style="left:49.8px;letter-spacing:0.042px">-782 mV</div><div class="sv" style="left:82.8px;letter-spacing:0.042px">-726 mV</div><div class="ss" style="left:36.7px;letter-spacing:0.579px">SELECTION</div></div>
<div class="sb" style="left:572.2px;top:337.5px;width:98.6px"><div class="car" style="left:6.6px"></div><div class="sh" style="left:16.5px;letter-spacing:0.134px">MIN</div><div class="sh" style="left:43.5px;letter-spacing:-0.271px">AVG</div><div class="sh" style="left:70.8px;letter-spacing:0.028px">MAX</div><div class="sr"></div><div class="sq" style="left:6.1px"></div><div class="sv" style="left:16.5px;letter-spacing:0.085px">2.98 V</div><div class="sv" style="left:43.5px;letter-spacing:0.127px">3.22 V</div><div class="sv" style="left:70.8px;letter-spacing:0.085px">3.24 V</div><div class="ss" style="left:27.7px;letter-spacing:0.579px">SELECTION</div></div>

<svg width="700" height="500" viewBox="0 0 700 500"><path d="M600.2 372 L601.2 368.5 L602.4 365.6 L603.8 363.6 L605.4 362.5 L608 362.1 L628.6 362" stroke="#7c2c7c" stroke-width="0.9" fill="none" opacity="0.85"/></svg>
<!-- right panel -->
<div class="right"></div>
<div class="right2"></div>
<svg width="700" height="500" viewBox="0 0 700 500"><path d="M689.3 32.6 L694.7 32.6 L692 37.4Z" fill="#f4f4f4"/></svg>
<div style="left:698.3px;top:30.5px;font-size:8.5px;color:#eee;font-weight:bold">A</div>
<div style="left:697px;top:44px;font-size:8px;color:#c4c4c4;line-height:8.6px">M</div><div style="left:694.6px;top:52.6px;font-size:8px;color:#c4c4c4;line-height:8.6px">M<br>M</div>
<div style="left:698.2px;top:78.6px;font-size:8px;color:#c4c4c4;line-height:8.6px">A</div>
<div style="left:692.2px;top:87px;font-size:8px;color:#c4c4c4;line-height:8.6px">SE<br>SE</div>

<div class="bot"></div>
<div style="left:638.8px;top:486.9px;font-size:8.8px;color:#eee;white-space:nowrap;-webkit-text-stroke:0.2px;letter-spacing:-0.360px">License:</div>
<div style="left:672.1px;top:488.3px;width:23.3px;height:7.4px;background:#f6b414;border-radius:1.5px"></div>
<div style="left:674.3px;top:489.5px;font-size:4.7px;line-height:5px;color:#fbdc8c;white-space:nowrap;font-weight:bold;letter-spacing:-0.235px">PRO + AT</div>
<div style="left:0;top:499px;width:700px;height:1px;background:#322e36"></div>
</div></body></html>
